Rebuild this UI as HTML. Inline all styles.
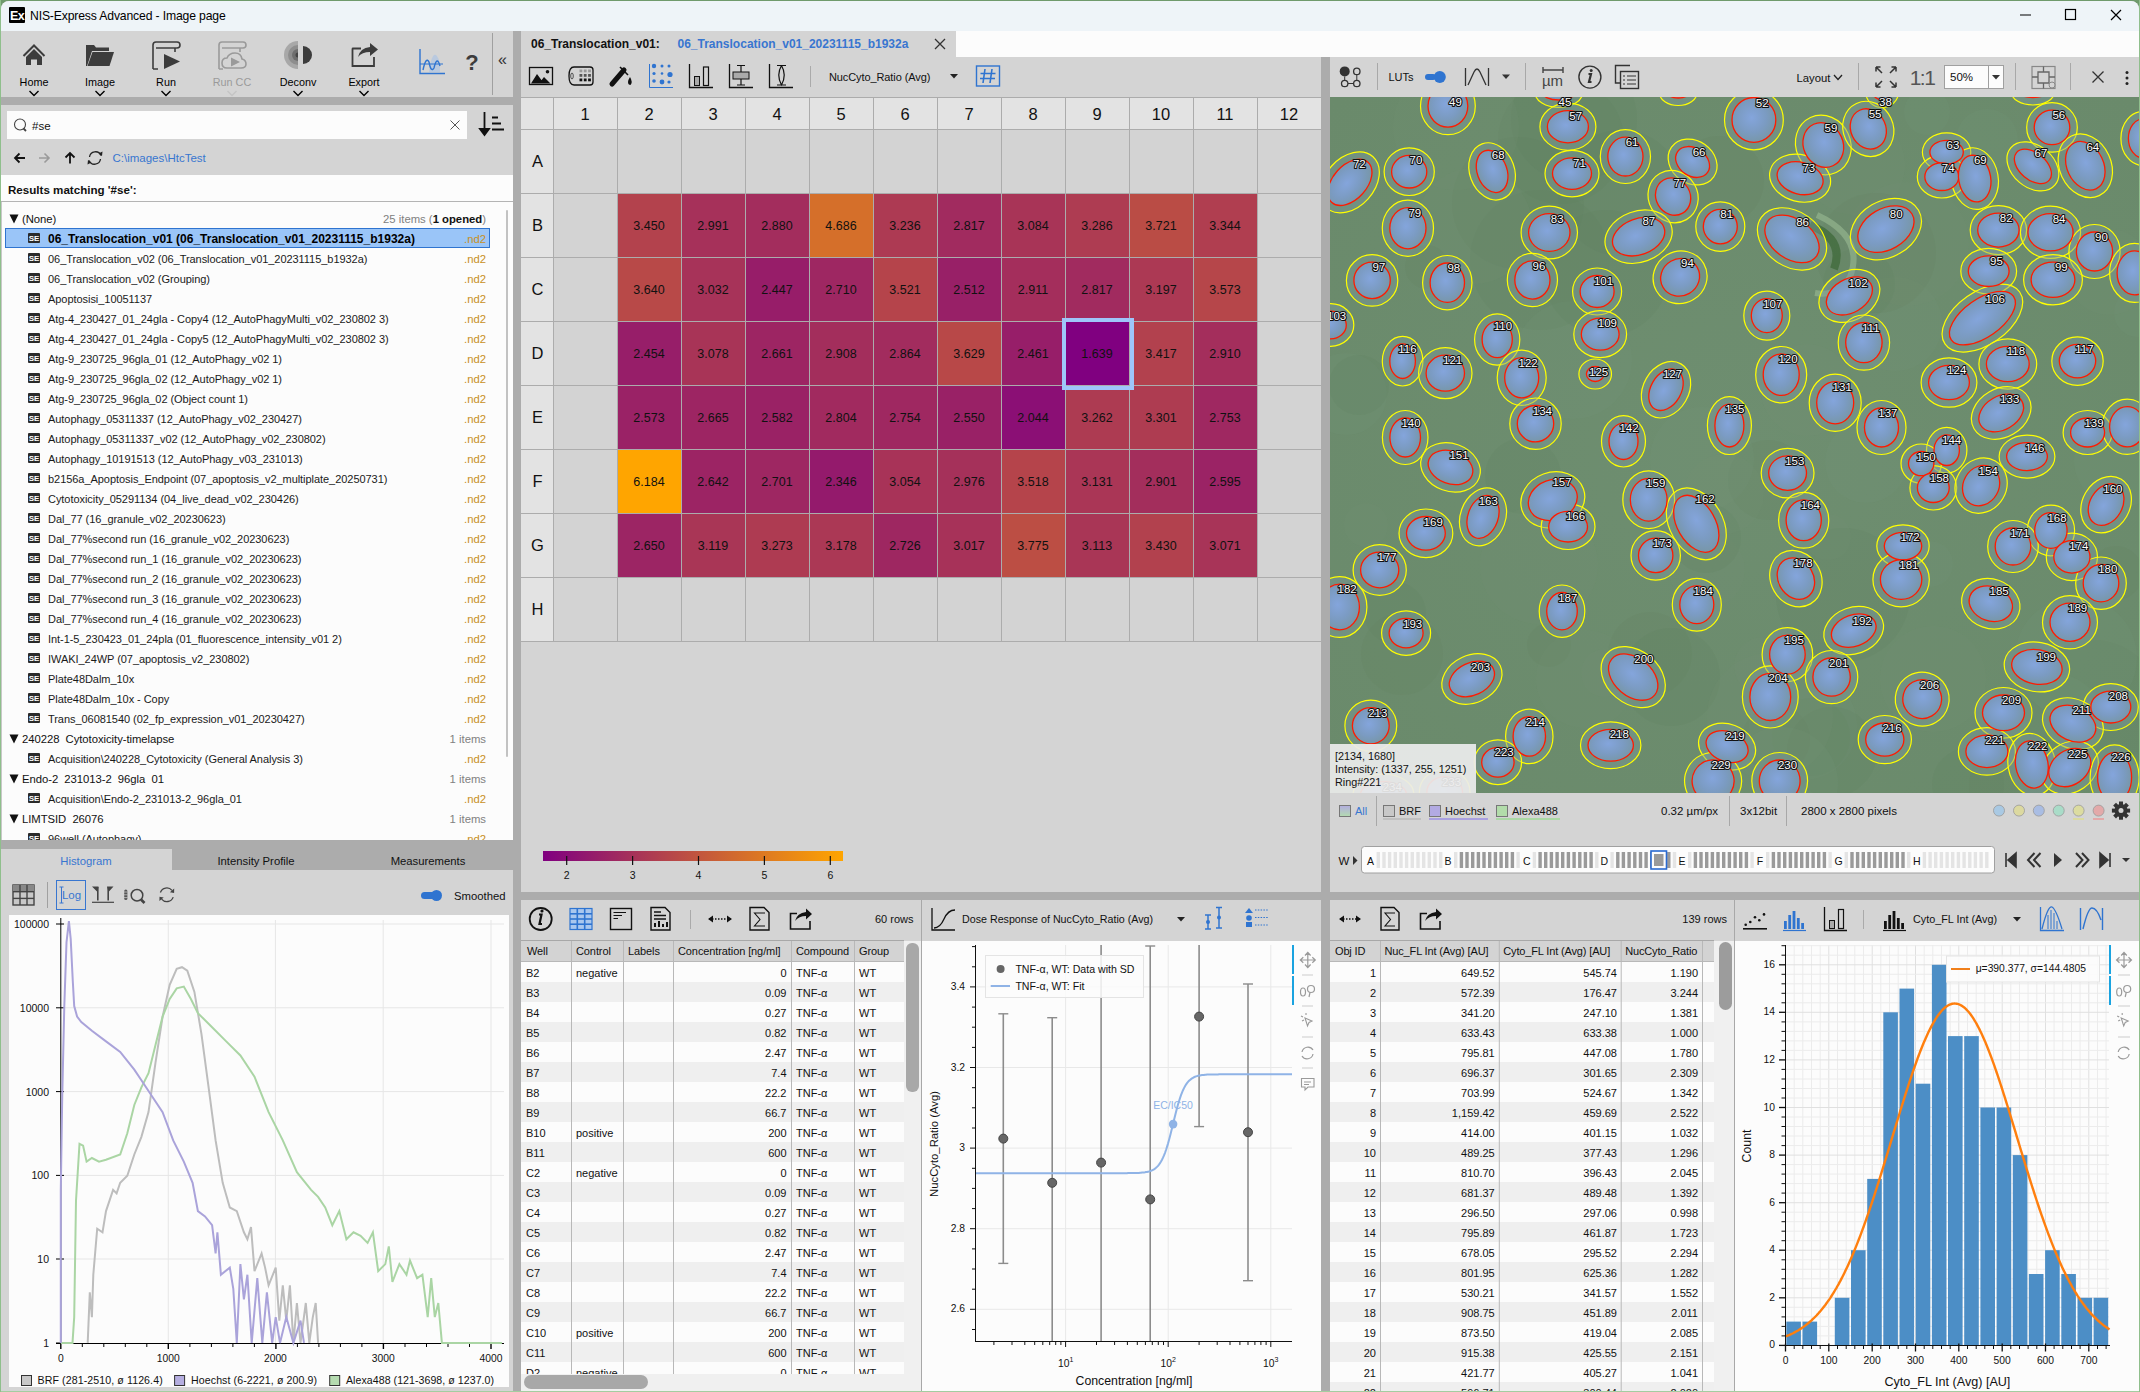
<!DOCTYPE html><html><head><meta charset="utf-8"><style>
html,body{margin:0;padding:0;width:2140px;height:1392px;overflow:hidden;background:#6f9a6c;font-family:"Liberation Sans", sans-serif;}
#root{position:absolute;left:0;top:0;width:2140px;height:1392px;overflow:hidden;}
#root div{position:absolute;box-sizing:border-box;}
#root svg{position:absolute;overflow:visible;}
</style></head><body><div id="root"><div style="left:0px;top:0px;width:2140px;height:1392px;background:#6f9a6c;"></div>
<div style="left:1px;top:1px;width:2138px;height:1390px;background:#d4d4d4;border-radius:8px 8px 8px 8px;"></div>
<div style="left:1px;top:1px;width:2138px;height:30px;background:#eef4f8;border-radius:8px 8px 0 0;"></div>
<div style="left:9px;top:7px;width:16px;height:16px;background:#000;border-radius:1px;"></div>
<div style="left:-283px;width:600px;text-align:center;top:6.5px;height:18px;line-height:18px;font-size:12.5px;color:#fff;font-weight:bold;white-space:pre;letter-spacing:-0.6px;">Ex</div>
<div style="left:30px;top:8.0px;height:17px;line-height:17px;font-size:12.2px;color:#000;font-weight:normal;white-space:pre;letter-spacing:-0.15px;">NIS-Express Advanced - Image page</div>
<svg style="left:2015px;top:5px;" width="120" height="20" viewBox="0 0 120 20"><line x1="5" y1="10" x2="16" y2="10" stroke="#000" stroke-width="1"/><rect x="50.5" y="4.5" width="10" height="10" fill="none" stroke="#000" stroke-width="1.2"/><path d="M96 5 L106 15 M106 5 L96 15" stroke="#000" stroke-width="1.2"/></svg>
<div style="left:1px;top:31px;width:512px;height:66px;background:#d4d4d4;"></div>
<div style="left:1px;top:97px;width:512px;height:8px;background:#acacac;"></div>
<div style="left:513px;top:31px;width:8px;height:1361px;background:#acacac;"></div>
<svg style="left:0px;top:0px;" width="520" height="100" viewBox="0 0 520 100"><path d="M23.5 56 L34 45.5 L44.5 56" fill="none" stroke="#3c3c3c" stroke-width="2"/><path d="M26 57 L34 49 L42 57 L42 65 L37 65 L37 59.5 L31 59.5 L31 65 L26 65 Z" fill="#3c3c3c"/><path d="M86 45 L94 45 L96 47.5 L109 47.5 L109 51 L92 51 L87 66 L86 66 Z" fill="#3c3c3c"/><path d="M92.5 52 L114 52 L109.5 66 L87.5 66 Z" fill="#3c3c3c"/><path d="M153 69 L153 45 Q153 42 156 42 L177 42 Q180 42 180 45 Q180 48 177 48 L156 48" fill="none" stroke="#3c3c3c" stroke-width="1.6"/><path d="M153 69 L158 69 M175 48 L175 52" stroke="#3c3c3c" stroke-width="1.6"/><path d="M164 54 L180 61.5 L164 69 Z" fill="#3c3c3c"/><path d="M219 69 L219 45 Q219 42 222 42 L243 42 Q246 42 246 45 Q246 48 243 48 L222 48" fill="none" stroke="#9a9a9a" stroke-width="1.6"/><path d="M219 69 L223 69 M240 48 L240 52" stroke="#9a9a9a" stroke-width="1.6"/><path d="M227 68 Q222 68 222 63 Q222 58 227 58 Q229 53 235 53 Q241 53 242 59 Q246 60 246 64 Q246 68 241 68 Z" fill="none" stroke="#9a9a9a" stroke-width="1.6"/><path d="M231 57.5 L240 62 L231 66.5 Z" fill="#9a9a9a"/><path d="M298 41 A14 14 0 0 0 298 69 Z" fill="#a8a8a8"/><path d="M298 45 A10 10 0 0 0 298 65 Z" fill="#8e8e8e"/><path d="M298 49 A6 6 0 0 0 298 61 Z" fill="#6e6e6e"/><path d="M298 52.5 A2.5 2.5 0 0 0 298 57.5 Z" fill="#444"/><path d="M303 46 A9 9 0 0 1 303 64 Z" fill="#3c3c3c"/><path d="M361 48.5 L353 48.5 Q352.5 48.5 352.5 49 L352.5 66 L374 66 L374 57" fill="none" stroke="#3c3c3c" stroke-width="1.8"/><path d="M358 57 Q360 48 370 47 L370 43 L378 49.5 L370 56 L370 52 Q362 52 358 57 Z" fill="#3c3c3c"/><path d="M429 72 Q432 50 437 56 Q440 60 440 72 Z" fill="#b9c9df"/><path d="M420 49 L420 73.5 L445 73.5" fill="none" stroke="#2f74d0" stroke-width="1.4"/><path d="M420 64 L443 64" stroke="#2f74d0" stroke-width="1"/><path d="M423 70 Q426 56 429 62 Q431 73 434 68 Q437 55 440 66" fill="none" stroke="#2f74d0" stroke-width="1.4"/><line x1="492.5" y1="33" x2="492.5" y2="95" stroke="#a0a0a0" stroke-width="1"/></svg>
<div style="left:172px;width:600px;text-align:center;top:46.5px;height:31px;line-height:31px;font-size:22px;color:#3c3c3c;font-weight:bold;white-space:pre;">?</div>
<div style="left:202.5px;width:600px;text-align:center;top:49.0px;height:22px;line-height:22px;font-size:16px;color:#333;font-weight:normal;white-space:pre;">«</div>
<div style="left:-266px;width:600px;text-align:center;top:74.5px;height:15px;line-height:15px;font-size:10.8px;color:#000;font-weight:normal;white-space:pre;">Home</div>
<div style="left:-200px;width:600px;text-align:center;top:74.5px;height:15px;line-height:15px;font-size:10.8px;color:#000;font-weight:normal;white-space:pre;">Image</div>
<div style="left:-134px;width:600px;text-align:center;top:74.5px;height:15px;line-height:15px;font-size:10.8px;color:#000;font-weight:normal;white-space:pre;">Run</div>
<div style="left:-68px;width:600px;text-align:center;top:74.5px;height:15px;line-height:15px;font-size:10.8px;color:#9a9a9a;font-weight:normal;white-space:pre;">Run CC</div>
<div style="left:-2px;width:600px;text-align:center;top:74.5px;height:15px;line-height:15px;font-size:10.8px;color:#000;font-weight:normal;white-space:pre;">Deconv</div>
<div style="left:64px;width:600px;text-align:center;top:74.5px;height:15px;line-height:15px;font-size:10.8px;color:#000;font-weight:normal;white-space:pre;">Export</div>
<svg style="left:0px;top:0px;" width="520" height="100" viewBox="0 0 520 100"><path d="M29.5 91 L34 95.5 L38.5 91" fill="none" stroke="#000" stroke-width="1.4"/><path d="M95.5 91 L100 95.5 L104.5 91" fill="none" stroke="#000" stroke-width="1.4"/><path d="M161.5 91 L166 95.5 L170.5 91" fill="none" stroke="#000" stroke-width="1.4"/><path d="M227.5 91 L232 95.5 L236.5 91" fill="none" stroke="#c4c4c4" stroke-width="1.4"/><path d="M293.5 91 L298 95.5 L302.5 91" fill="none" stroke="#000" stroke-width="1.4"/><path d="M359.5 91 L364 95.5 L368.5 91" fill="none" stroke="#000" stroke-width="1.4"/></svg>
<div style="left:1px;top:105px;width:512px;height:70px;background:#d4d4d4;"></div>
<div style="left:7px;top:111px;width:460px;height:28px;background:#fcfcfc;"></div>
<svg style="left:0px;top:100px;" width="520" height="80" viewBox="0 0 520 80"><circle cx="20" cy="24.5" r="5.5" fill="none" stroke="#444" stroke-width="1.1"/><path d="M23.5 28.5 L26 31" stroke="#444" stroke-width="1.8"/><path d="M450.5 20.5 L459.5 29.5 M459.5 20.5 L450.5 29.5" stroke="#555" stroke-width="1"/><path d="M484.5 12 L484.5 34 M480 29 L484.5 35 L489 29 Z" stroke="#111" stroke-width="1.8" fill="#111"/><path d="M492 17.5 L498 17.5 M492 23.5 L501 23.5 M492 29.5 L504 29.5" stroke="#111" stroke-width="2.2"/><path d="M15 58 L25 58 M19.5 53.5 L15 58 L19.5 62.5" fill="none" stroke="#111" stroke-width="1.8"/><path d="M39 58 L49 58 M44.5 53.5 L49 58 L44.5 62.5" fill="none" stroke="#9a9a9a" stroke-width="1.6"/><path d="M70 53 L70 63.5 M65.5 57.5 L70 53 L74.5 57.5" fill="none" stroke="#111" stroke-width="1.8"/><path d="M89.5 57 A6 6 0 0 1 101 55.5 M100.5 59 A6 6 0 0 1 89 60.5" fill="none" stroke="#222" stroke-width="1.3"/><path d="M98.5 53.5 L102 56 L102.5 51.5 Z M91.5 62.5 L88 60 L87.5 64.5 Z" fill="#222"/></svg>
<div style="left:32px;top:117.5px;height:16px;line-height:16px;font-size:11.5px;color:#111;font-weight:normal;white-space:pre;">#se</div>
<div style="left:112.5px;top:150.0px;height:16px;line-height:16px;font-size:11.5px;color:#3876d0;font-weight:normal;white-space:pre;">C:\images\HtcTest</div>
<div style="left:1px;top:175px;width:512px;height:27px;background:#fcfcfc;border-bottom:1px solid #b4b4b4;"></div>
<div style="left:8px;top:182.0px;height:16px;line-height:16px;font-size:11.6px;color:#111;font-weight:bold;white-space:pre;">Results matching '#se':</div>
<div style="left:1px;top:202px;width:512px;height:638px;background:#fcfcfc;border-left:1px solid #c8c8c8;"></div>
<div style="left:505.5px;top:210px;width:2.5px;height:547px;background:#c2c2c2;border-radius:1px;"></div>
<div style="left:22px;top:211.0px;height:16px;line-height:16px;font-size:11.3px;color:#111;font-weight:normal;white-space:pre;letter-spacing:-0.05px;">(None)</div>
<div style="left:300px;width:186px;text-align:right;top:211px;height:16px;line-height:16px;font-size:11.3px;color:#808080;white-space:nowrap;">25 items (<b style="color:#111">1 opened</b>)</div>
<div style="left:5px;top:228px;width:485px;height:20px;background:#9ac5f8;border:1px solid #2f74d0;"></div>
<div style="left:48px;top:230.5px;height:17px;line-height:17px;font-size:12px;color:#000;font-weight:bold;white-space:pre;">06_Translocation_v01 (06_Translocation_v01_20231115_b1932a)</div>
<div style="left:-114px;width:600px;text-align:right;top:231.0px;height:16px;line-height:16px;font-size:11.3px;color:#c8901e;font-weight:normal;white-space:pre;">.nd2</div>
<div style="left:48px;top:251.5px;height:15px;line-height:15px;font-size:11px;color:#1a1a1a;font-weight:normal;white-space:pre;letter-spacing:-0.05px;">06_Translocation_v02 (06_Translocation_v01_20231115_b1932a)</div>
<div style="left:-114px;width:600px;text-align:right;top:251.0px;height:16px;line-height:16px;font-size:11.3px;color:#c8901e;font-weight:normal;white-space:pre;">.nd2</div>
<div style="left:48px;top:271.5px;height:15px;line-height:15px;font-size:11px;color:#1a1a1a;font-weight:normal;white-space:pre;letter-spacing:-0.05px;">06_Translocation_v02 (Grouping)</div>
<div style="left:-114px;width:600px;text-align:right;top:271.0px;height:16px;line-height:16px;font-size:11.3px;color:#c8901e;font-weight:normal;white-space:pre;">.nd2</div>
<div style="left:48px;top:291.5px;height:15px;line-height:15px;font-size:11px;color:#1a1a1a;font-weight:normal;white-space:pre;letter-spacing:-0.05px;">Apoptosisi_10051137</div>
<div style="left:-114px;width:600px;text-align:right;top:291.0px;height:16px;line-height:16px;font-size:11.3px;color:#c8901e;font-weight:normal;white-space:pre;">.nd2</div>
<div style="left:48px;top:311.5px;height:15px;line-height:15px;font-size:11px;color:#1a1a1a;font-weight:normal;white-space:pre;letter-spacing:-0.05px;">Atg-4_230427_01_24gla - Copy4 (12_AutoPhagyMulti_v02_230802 3)</div>
<div style="left:-114px;width:600px;text-align:right;top:311.0px;height:16px;line-height:16px;font-size:11.3px;color:#c8901e;font-weight:normal;white-space:pre;">.nd2</div>
<div style="left:48px;top:331.5px;height:15px;line-height:15px;font-size:11px;color:#1a1a1a;font-weight:normal;white-space:pre;letter-spacing:-0.05px;">Atg-4_230427_01_24gla - Copy5 (12_AutoPhagyMulti_v02_230802 3)</div>
<div style="left:-114px;width:600px;text-align:right;top:331.0px;height:16px;line-height:16px;font-size:11.3px;color:#c8901e;font-weight:normal;white-space:pre;">.nd2</div>
<div style="left:48px;top:351.5px;height:15px;line-height:15px;font-size:11px;color:#1a1a1a;font-weight:normal;white-space:pre;letter-spacing:-0.05px;">Atg-9_230725_96gla_01 (12_AutoPhagy_v02 1)</div>
<div style="left:-114px;width:600px;text-align:right;top:351.0px;height:16px;line-height:16px;font-size:11.3px;color:#c8901e;font-weight:normal;white-space:pre;">.nd2</div>
<div style="left:48px;top:371.5px;height:15px;line-height:15px;font-size:11px;color:#1a1a1a;font-weight:normal;white-space:pre;letter-spacing:-0.05px;">Atg-9_230725_96gla_02 (12_AutoPhagy_v02 1)</div>
<div style="left:-114px;width:600px;text-align:right;top:371.0px;height:16px;line-height:16px;font-size:11.3px;color:#c8901e;font-weight:normal;white-space:pre;">.nd2</div>
<div style="left:48px;top:391.5px;height:15px;line-height:15px;font-size:11px;color:#1a1a1a;font-weight:normal;white-space:pre;letter-spacing:-0.05px;">Atg-9_230725_96gla_02 (Object count 1)</div>
<div style="left:-114px;width:600px;text-align:right;top:391.0px;height:16px;line-height:16px;font-size:11.3px;color:#c8901e;font-weight:normal;white-space:pre;">.nd2</div>
<div style="left:48px;top:411.5px;height:15px;line-height:15px;font-size:11px;color:#1a1a1a;font-weight:normal;white-space:pre;letter-spacing:-0.05px;">Autophagy_05311337 (12_AutoPhagy_v02_230427)</div>
<div style="left:-114px;width:600px;text-align:right;top:411.0px;height:16px;line-height:16px;font-size:11.3px;color:#c8901e;font-weight:normal;white-space:pre;">.nd2</div>
<div style="left:48px;top:431.5px;height:15px;line-height:15px;font-size:11px;color:#1a1a1a;font-weight:normal;white-space:pre;letter-spacing:-0.05px;">Autophagy_05311337_v02 (12_AutoPhagy_v02_230802)</div>
<div style="left:-114px;width:600px;text-align:right;top:431.0px;height:16px;line-height:16px;font-size:11.3px;color:#c8901e;font-weight:normal;white-space:pre;">.nd2</div>
<div style="left:48px;top:451.5px;height:15px;line-height:15px;font-size:11px;color:#1a1a1a;font-weight:normal;white-space:pre;letter-spacing:-0.05px;">Autophagy_10191513 (12_AutoPhagy_v03_231013)</div>
<div style="left:-114px;width:600px;text-align:right;top:451.0px;height:16px;line-height:16px;font-size:11.3px;color:#c8901e;font-weight:normal;white-space:pre;">.nd2</div>
<div style="left:48px;top:471.5px;height:15px;line-height:15px;font-size:11px;color:#1a1a1a;font-weight:normal;white-space:pre;letter-spacing:-0.05px;">b2156a_Apoptosis_Endpoint (07_apoptosis_v2_multiplate_20250731)</div>
<div style="left:-114px;width:600px;text-align:right;top:471.0px;height:16px;line-height:16px;font-size:11.3px;color:#c8901e;font-weight:normal;white-space:pre;">.nd2</div>
<div style="left:48px;top:491.5px;height:15px;line-height:15px;font-size:11px;color:#1a1a1a;font-weight:normal;white-space:pre;letter-spacing:-0.05px;">Cytotoxicity_05291134 (04_live_dead_v02_230426)</div>
<div style="left:-114px;width:600px;text-align:right;top:491.0px;height:16px;line-height:16px;font-size:11.3px;color:#c8901e;font-weight:normal;white-space:pre;">.nd2</div>
<div style="left:48px;top:511.5px;height:15px;line-height:15px;font-size:11px;color:#1a1a1a;font-weight:normal;white-space:pre;letter-spacing:-0.05px;">Dal_77 (16_granule_v02_20230623)</div>
<div style="left:-114px;width:600px;text-align:right;top:511.0px;height:16px;line-height:16px;font-size:11.3px;color:#c8901e;font-weight:normal;white-space:pre;">.nd2</div>
<div style="left:48px;top:531.5px;height:15px;line-height:15px;font-size:11px;color:#1a1a1a;font-weight:normal;white-space:pre;letter-spacing:-0.05px;">Dal_77%second run (16_granule_v02_20230623)</div>
<div style="left:-114px;width:600px;text-align:right;top:531.0px;height:16px;line-height:16px;font-size:11.3px;color:#c8901e;font-weight:normal;white-space:pre;">.nd2</div>
<div style="left:48px;top:551.5px;height:15px;line-height:15px;font-size:11px;color:#1a1a1a;font-weight:normal;white-space:pre;letter-spacing:-0.05px;">Dal_77%second run_1 (16_granule_v02_20230623)</div>
<div style="left:-114px;width:600px;text-align:right;top:551.0px;height:16px;line-height:16px;font-size:11.3px;color:#c8901e;font-weight:normal;white-space:pre;">.nd2</div>
<div style="left:48px;top:571.5px;height:15px;line-height:15px;font-size:11px;color:#1a1a1a;font-weight:normal;white-space:pre;letter-spacing:-0.05px;">Dal_77%second run_2 (16_granule_v02_20230623)</div>
<div style="left:-114px;width:600px;text-align:right;top:571.0px;height:16px;line-height:16px;font-size:11.3px;color:#c8901e;font-weight:normal;white-space:pre;">.nd2</div>
<div style="left:48px;top:591.5px;height:15px;line-height:15px;font-size:11px;color:#1a1a1a;font-weight:normal;white-space:pre;letter-spacing:-0.05px;">Dal_77%second run_3 (16_granule_v02_20230623)</div>
<div style="left:-114px;width:600px;text-align:right;top:591.0px;height:16px;line-height:16px;font-size:11.3px;color:#c8901e;font-weight:normal;white-space:pre;">.nd2</div>
<div style="left:48px;top:611.5px;height:15px;line-height:15px;font-size:11px;color:#1a1a1a;font-weight:normal;white-space:pre;letter-spacing:-0.05px;">Dal_77%second run_4 (16_granule_v02_20230623)</div>
<div style="left:-114px;width:600px;text-align:right;top:611.0px;height:16px;line-height:16px;font-size:11.3px;color:#c8901e;font-weight:normal;white-space:pre;">.nd2</div>
<div style="left:48px;top:631.5px;height:15px;line-height:15px;font-size:11px;color:#1a1a1a;font-weight:normal;white-space:pre;letter-spacing:-0.05px;">Int-1-5_230423_01_24pla (01_fluorescence_intensity_v01 2)</div>
<div style="left:-114px;width:600px;text-align:right;top:631.0px;height:16px;line-height:16px;font-size:11.3px;color:#c8901e;font-weight:normal;white-space:pre;">.nd2</div>
<div style="left:48px;top:651.5px;height:15px;line-height:15px;font-size:11px;color:#1a1a1a;font-weight:normal;white-space:pre;letter-spacing:-0.05px;">IWAKI_24WP (07_apoptosis_v2_230802)</div>
<div style="left:-114px;width:600px;text-align:right;top:651.0px;height:16px;line-height:16px;font-size:11.3px;color:#c8901e;font-weight:normal;white-space:pre;">.nd2</div>
<div style="left:48px;top:671.5px;height:15px;line-height:15px;font-size:11px;color:#1a1a1a;font-weight:normal;white-space:pre;letter-spacing:-0.05px;">Plate48Dalm_10x</div>
<div style="left:-114px;width:600px;text-align:right;top:671.0px;height:16px;line-height:16px;font-size:11.3px;color:#c8901e;font-weight:normal;white-space:pre;">.nd2</div>
<div style="left:48px;top:691.5px;height:15px;line-height:15px;font-size:11px;color:#1a1a1a;font-weight:normal;white-space:pre;letter-spacing:-0.05px;">Plate48Dalm_10x - Copy</div>
<div style="left:-114px;width:600px;text-align:right;top:691.0px;height:16px;line-height:16px;font-size:11.3px;color:#c8901e;font-weight:normal;white-space:pre;">.nd2</div>
<div style="left:48px;top:711.5px;height:15px;line-height:15px;font-size:11px;color:#1a1a1a;font-weight:normal;white-space:pre;letter-spacing:-0.05px;">Trans_06081540 (02_fp_expression_v01_20230427)</div>
<div style="left:-114px;width:600px;text-align:right;top:711.0px;height:16px;line-height:16px;font-size:11.3px;color:#c8901e;font-weight:normal;white-space:pre;">.nd2</div>
<div style="left:22px;top:731.0px;height:16px;line-height:16px;font-size:11.3px;color:#111;font-weight:normal;white-space:pre;letter-spacing:-0.05px;">240228  Cytotoxicity-timelapse</div>
<div style="left:-114px;width:600px;text-align:right;top:731.0px;height:16px;line-height:16px;font-size:11.3px;color:#808080;font-weight:normal;white-space:pre;">1 items</div>
<div style="left:48px;top:751.5px;height:15px;line-height:15px;font-size:11px;color:#1a1a1a;font-weight:normal;white-space:pre;letter-spacing:-0.05px;">Acquisition\240228_Cytotoxicity (General Analysis 3)</div>
<div style="left:-114px;width:600px;text-align:right;top:751.0px;height:16px;line-height:16px;font-size:11.3px;color:#c8901e;font-weight:normal;white-space:pre;">.nd2</div>
<div style="left:22px;top:771.0px;height:16px;line-height:16px;font-size:11.3px;color:#111;font-weight:normal;white-space:pre;letter-spacing:-0.05px;">Endo-2  231013-2  96gla  01</div>
<div style="left:-114px;width:600px;text-align:right;top:771.0px;height:16px;line-height:16px;font-size:11.3px;color:#808080;font-weight:normal;white-space:pre;">1 items</div>
<div style="left:48px;top:791.5px;height:15px;line-height:15px;font-size:11px;color:#1a1a1a;font-weight:normal;white-space:pre;letter-spacing:-0.05px;">Acquisition\Endo-2_231013-2_96gla_01</div>
<div style="left:-114px;width:600px;text-align:right;top:791.0px;height:16px;line-height:16px;font-size:11.3px;color:#c8901e;font-weight:normal;white-space:pre;">.nd2</div>
<div style="left:22px;top:811.0px;height:16px;line-height:16px;font-size:11.3px;color:#111;font-weight:normal;white-space:pre;letter-spacing:-0.05px;">LIMTSID  26076</div>
<div style="left:-114px;width:600px;text-align:right;top:811.0px;height:16px;line-height:16px;font-size:11.3px;color:#808080;font-weight:normal;white-space:pre;">1 items</div>
<div style="left:48px;top:831.5px;height:15px;line-height:15px;font-size:11px;color:#1a1a1a;font-weight:normal;white-space:pre;letter-spacing:-0.05px;">96well (Autophagy)</div>
<div style="left:-114px;width:600px;text-align:right;top:831.0px;height:16px;line-height:16px;font-size:11.3px;color:#c8901e;font-weight:normal;white-space:pre;">.nd2</div>
<svg style="left:0px;top:0px;" width="520" height="900" viewBox="0 0 520 900"><path d="M9.5 214.5 L18.5 214.5 L14 223.5 Z" fill="#111"/><rect x="28" y="233" width="12" height="10" rx="1" fill="#2a2a2a"/><text x="34" y="241.2" font-size="8" font-weight="bold" fill="#fff" text-anchor="middle" font-family="Liberation Sans">SE</text><rect x="28" y="253" width="12" height="10" rx="1" fill="#2a2a2a"/><text x="34" y="261.2" font-size="8" font-weight="bold" fill="#fff" text-anchor="middle" font-family="Liberation Sans">SE</text><rect x="28" y="273" width="12" height="10" rx="1" fill="#2a2a2a"/><text x="34" y="281.2" font-size="8" font-weight="bold" fill="#fff" text-anchor="middle" font-family="Liberation Sans">SE</text><rect x="28" y="293" width="12" height="10" rx="1" fill="#2a2a2a"/><text x="34" y="301.2" font-size="8" font-weight="bold" fill="#fff" text-anchor="middle" font-family="Liberation Sans">SE</text><rect x="28" y="313" width="12" height="10" rx="1" fill="#2a2a2a"/><text x="34" y="321.2" font-size="8" font-weight="bold" fill="#fff" text-anchor="middle" font-family="Liberation Sans">SE</text><rect x="28" y="333" width="12" height="10" rx="1" fill="#2a2a2a"/><text x="34" y="341.2" font-size="8" font-weight="bold" fill="#fff" text-anchor="middle" font-family="Liberation Sans">SE</text><rect x="28" y="353" width="12" height="10" rx="1" fill="#2a2a2a"/><text x="34" y="361.2" font-size="8" font-weight="bold" fill="#fff" text-anchor="middle" font-family="Liberation Sans">SE</text><rect x="28" y="373" width="12" height="10" rx="1" fill="#2a2a2a"/><text x="34" y="381.2" font-size="8" font-weight="bold" fill="#fff" text-anchor="middle" font-family="Liberation Sans">SE</text><rect x="28" y="393" width="12" height="10" rx="1" fill="#2a2a2a"/><text x="34" y="401.2" font-size="8" font-weight="bold" fill="#fff" text-anchor="middle" font-family="Liberation Sans">SE</text><rect x="28" y="413" width="12" height="10" rx="1" fill="#2a2a2a"/><text x="34" y="421.2" font-size="8" font-weight="bold" fill="#fff" text-anchor="middle" font-family="Liberation Sans">SE</text><rect x="28" y="433" width="12" height="10" rx="1" fill="#2a2a2a"/><text x="34" y="441.2" font-size="8" font-weight="bold" fill="#fff" text-anchor="middle" font-family="Liberation Sans">SE</text><rect x="28" y="453" width="12" height="10" rx="1" fill="#2a2a2a"/><text x="34" y="461.2" font-size="8" font-weight="bold" fill="#fff" text-anchor="middle" font-family="Liberation Sans">SE</text><rect x="28" y="473" width="12" height="10" rx="1" fill="#2a2a2a"/><text x="34" y="481.2" font-size="8" font-weight="bold" fill="#fff" text-anchor="middle" font-family="Liberation Sans">SE</text><rect x="28" y="493" width="12" height="10" rx="1" fill="#2a2a2a"/><text x="34" y="501.2" font-size="8" font-weight="bold" fill="#fff" text-anchor="middle" font-family="Liberation Sans">SE</text><rect x="28" y="513" width="12" height="10" rx="1" fill="#2a2a2a"/><text x="34" y="521.2" font-size="8" font-weight="bold" fill="#fff" text-anchor="middle" font-family="Liberation Sans">SE</text><rect x="28" y="533" width="12" height="10" rx="1" fill="#2a2a2a"/><text x="34" y="541.2" font-size="8" font-weight="bold" fill="#fff" text-anchor="middle" font-family="Liberation Sans">SE</text><rect x="28" y="553" width="12" height="10" rx="1" fill="#2a2a2a"/><text x="34" y="561.2" font-size="8" font-weight="bold" fill="#fff" text-anchor="middle" font-family="Liberation Sans">SE</text><rect x="28" y="573" width="12" height="10" rx="1" fill="#2a2a2a"/><text x="34" y="581.2" font-size="8" font-weight="bold" fill="#fff" text-anchor="middle" font-family="Liberation Sans">SE</text><rect x="28" y="593" width="12" height="10" rx="1" fill="#2a2a2a"/><text x="34" y="601.2" font-size="8" font-weight="bold" fill="#fff" text-anchor="middle" font-family="Liberation Sans">SE</text><rect x="28" y="613" width="12" height="10" rx="1" fill="#2a2a2a"/><text x="34" y="621.2" font-size="8" font-weight="bold" fill="#fff" text-anchor="middle" font-family="Liberation Sans">SE</text><rect x="28" y="633" width="12" height="10" rx="1" fill="#2a2a2a"/><text x="34" y="641.2" font-size="8" font-weight="bold" fill="#fff" text-anchor="middle" font-family="Liberation Sans">SE</text><rect x="28" y="653" width="12" height="10" rx="1" fill="#2a2a2a"/><text x="34" y="661.2" font-size="8" font-weight="bold" fill="#fff" text-anchor="middle" font-family="Liberation Sans">SE</text><rect x="28" y="673" width="12" height="10" rx="1" fill="#2a2a2a"/><text x="34" y="681.2" font-size="8" font-weight="bold" fill="#fff" text-anchor="middle" font-family="Liberation Sans">SE</text><rect x="28" y="693" width="12" height="10" rx="1" fill="#2a2a2a"/><text x="34" y="701.2" font-size="8" font-weight="bold" fill="#fff" text-anchor="middle" font-family="Liberation Sans">SE</text><rect x="28" y="713" width="12" height="10" rx="1" fill="#2a2a2a"/><text x="34" y="721.2" font-size="8" font-weight="bold" fill="#fff" text-anchor="middle" font-family="Liberation Sans">SE</text><path d="M9.5 734.5 L18.5 734.5 L14 743.5 Z" fill="#111"/><rect x="28" y="753" width="12" height="10" rx="1" fill="#2a2a2a"/><text x="34" y="761.2" font-size="8" font-weight="bold" fill="#fff" text-anchor="middle" font-family="Liberation Sans">SE</text><path d="M9.5 774.5 L18.5 774.5 L14 783.5 Z" fill="#111"/><rect x="28" y="793" width="12" height="10" rx="1" fill="#2a2a2a"/><text x="34" y="801.2" font-size="8" font-weight="bold" fill="#fff" text-anchor="middle" font-family="Liberation Sans">SE</text><path d="M9.5 814.5 L18.5 814.5 L14 823.5 Z" fill="#111"/><rect x="28" y="833" width="12" height="10" rx="1" fill="#2a2a2a"/><text x="34" y="841.2" font-size="8" font-weight="bold" fill="#fff" text-anchor="middle" font-family="Liberation Sans">SE</text></svg>
<div style="left:1px;top:840px;width:512px;height:8px;background:#acacac;"></div>
<div style="left:1px;top:848px;width:512px;height:22px;background:#acacac;"></div>
<div style="left:1px;top:849px;width:171px;height:21px;background:#d4d4d4;"></div>
<div style="left:-214px;width:600px;text-align:center;top:852.5px;height:16px;line-height:16px;font-size:11.3px;color:#3876d0;font-weight:normal;white-space:pre;">Histogram</div>
<div style="left:-44px;width:600px;text-align:center;top:852.5px;height:16px;line-height:16px;font-size:11.3px;color:#111;font-weight:normal;white-space:pre;">Intensity Profile</div>
<div style="left:128px;width:600px;text-align:center;top:852.5px;height:16px;line-height:16px;font-size:11.3px;color:#111;font-weight:normal;white-space:pre;">Measurements</div>
<div style="left:1px;top:870px;width:512px;height:522px;background:#d4d4d4;"></div>
<svg style="left:0px;top:0px;" width="520" height="920" viewBox="0 0 520 920"><rect x="13" y="885" width="21" height="20" fill="#c8c8c8" stroke="#444" stroke-width="1.4"/><rect x="13" y="885" width="21" height="6" fill="#888"/><line x1="13" y1="891.7" x2="34" y2="891.7" stroke="#444" stroke-width="1.4"/><line x1="13" y1="898.4" x2="34" y2="898.4" stroke="#444" stroke-width="1.4"/><line x1="20.0" y1="885" x2="20.0" y2="905" stroke="#444" stroke-width="1.4"/><line x1="27.0" y1="885" x2="27.0" y2="905" stroke="#444" stroke-width="1.4"/><line x1="47.5" y1="882" x2="47.5" y2="908" stroke="#a0a0a0"/><rect x="56.5" y="880.5" width="29" height="29" fill="none" stroke="#3876d0" stroke-width="1"/><path d="M61.5 887 L61.5 903 M59.5 887 L63.5 887 M59.5 903 L63.5 903" stroke="#3876d0" stroke-width="1"/><path d="M92 886.5 L98.5 886.5 L97.5 892 Z M107 886.5 L113.5 886.5 L108.5 892 Z" fill="#444"/><path d="M97.8 887 L97.8 900.5 M108.2 887 L108.2 900.5" stroke="#444" stroke-width="1.6"/><path d="M92 902.3 L114 902.3" stroke="#444" stroke-width="1.2"/><circle cx="137" cy="895.2" r="5.8" fill="none" stroke="#444" stroke-width="1.5"/><path d="M141 899.5 L144.5 903" stroke="#444" stroke-width="2.6"/><rect x="124.2" y="889.5" width="3.2" height="10.5" rx="1.6" fill="#555"/><path d="M124 892 L127.6 892 M124 894.8 L127.6 894.8 M124 897.6 L127.6 897.6" stroke="#d4d4d4" stroke-width="0.7"/><path d="M160.4 892.5 A6.8 6.8 0 0 1 172.0 890.4 M173.2 897.1 A6.8 6.8 0 0 1 161.6 899.2" fill="none" stroke="#444" stroke-width="1.3"/><path d="M174.1 892.9 L169.9 892.2 L174.2 888.6 Z M159.5 896.7 L163.7 897.4 L159.4 901.0 Z" fill="#444"/><rect x="421" y="892" width="14" height="7" rx="3.5" fill="#2f74d0"/><circle cx="436.5" cy="895.5" r="5.5" fill="#2f74d0"/></svg>
<div style="left:-228.5px;width:600px;text-align:center;top:887.0px;height:16px;line-height:16px;font-size:11.5px;color:#3876d0;font-weight:normal;white-space:pre;">Log</div>
<div style="left:454px;top:887.5px;height:16px;line-height:16px;font-size:11.3px;color:#111;font-weight:normal;white-space:pre;">Smoothed</div>
<div style="left:9px;top:915px;width:500px;height:472px;background:#fcfcfc;"></div>
<svg style="left:0px;top:0px;" width="520" height="1392" viewBox="0 0 520 1392"><line x1="168.3" y1="920" x2="168.3" y2="1343" stroke="#e6e6e6" stroke-width="1"/><line x1="275.4" y1="920" x2="275.4" y2="1343" stroke="#e6e6e6" stroke-width="1"/><line x1="383.2" y1="920" x2="383.2" y2="1343" stroke="#e6e6e6" stroke-width="1"/><line x1="491" y1="920" x2="491" y2="1343" stroke="#e6e6e6" stroke-width="1"/><line x1="61" y1="924" x2="504" y2="924" stroke="#e6e6e6" stroke-width="1"/><line x1="61" y1="1007.8" x2="504" y2="1007.8" stroke="#e6e6e6" stroke-width="1"/><line x1="61" y1="1091.6" x2="504" y2="1091.6" stroke="#e6e6e6" stroke-width="1"/><line x1="61" y1="1175.4" x2="504" y2="1175.4" stroke="#e6e6e6" stroke-width="1"/><line x1="61" y1="1259" x2="504" y2="1259" stroke="#e6e6e6" stroke-width="1"/><line x1="60.8" y1="918" x2="60.8" y2="1344" stroke="#000" stroke-width="1"/><line x1="56" y1="1343.5" x2="504" y2="1343.5" stroke="#000" stroke-width="1"/><line x1="56" y1="924" x2="64" y2="924" stroke="#000"/><line x1="56" y1="1007.8" x2="64" y2="1007.8" stroke="#000"/><line x1="56" y1="1091.6" x2="64" y2="1091.6" stroke="#000"/><line x1="56" y1="1175.4" x2="64" y2="1175.4" stroke="#000"/><line x1="56" y1="1259" x2="64" y2="1259" stroke="#000"/><line x1="56" y1="1343" x2="64" y2="1343" stroke="#000"/><line x1="60.8" y1="1343.5" x2="60.8" y2="1349" stroke="#000" stroke-width="1.4"/><line x1="82.3" y1="1343.5" x2="82.3" y2="1347" stroke="#000" stroke-width="1"/><line x1="103.8" y1="1343.5" x2="103.8" y2="1347" stroke="#000" stroke-width="1"/><line x1="125.3" y1="1343.5" x2="125.3" y2="1347" stroke="#000" stroke-width="1"/><line x1="146.8" y1="1343.5" x2="146.8" y2="1347" stroke="#000" stroke-width="1"/><line x1="168.3" y1="1343.5" x2="168.3" y2="1349" stroke="#000" stroke-width="1.4"/><line x1="189.9" y1="1343.5" x2="189.9" y2="1347" stroke="#000" stroke-width="1"/><line x1="211.4" y1="1343.5" x2="211.4" y2="1347" stroke="#000" stroke-width="1"/><line x1="232.9" y1="1343.5" x2="232.9" y2="1347" stroke="#000" stroke-width="1"/><line x1="254.4" y1="1343.5" x2="254.4" y2="1347" stroke="#000" stroke-width="1"/><line x1="275.9" y1="1343.5" x2="275.9" y2="1349" stroke="#000" stroke-width="1.4"/><line x1="297.4" y1="1343.5" x2="297.4" y2="1347" stroke="#000" stroke-width="1"/><line x1="318.9" y1="1343.5" x2="318.9" y2="1347" stroke="#000" stroke-width="1"/><line x1="340.4" y1="1343.5" x2="340.4" y2="1347" stroke="#000" stroke-width="1"/><line x1="361.9" y1="1343.5" x2="361.9" y2="1347" stroke="#000" stroke-width="1"/><line x1="383.4" y1="1343.5" x2="383.4" y2="1349" stroke="#000" stroke-width="1.4"/><line x1="405.0" y1="1343.5" x2="405.0" y2="1347" stroke="#000" stroke-width="1"/><line x1="426.5" y1="1343.5" x2="426.5" y2="1347" stroke="#000" stroke-width="1"/><line x1="448.0" y1="1343.5" x2="448.0" y2="1347" stroke="#000" stroke-width="1"/><line x1="469.5" y1="1343.5" x2="469.5" y2="1347" stroke="#000" stroke-width="1"/><line x1="491.0" y1="1343.5" x2="491.0" y2="1349" stroke="#000" stroke-width="1.4"/><polyline points="87.7,1342.9 89.8,1292.4 91.9,1317.1 93.3,1274.7 97.2,1228.7 102.5,1232.3 106.0,1211.1 113.1,1189.9 116.6,1193.4 120.2,1182.8 127.3,1175.7 134.3,1154.5 141.4,1136.8 148.5,1112.1 155.5,1062.6 162.6,1016.6 169.7,984.8 176.7,968.9 182.0,967.2 187.3,970.7 194.4,991.9 201.5,1034.3 208.6,1087.3 215.6,1140.4 222.7,1182.8 229.8,1207.5 236.8,1211.1 243.9,1232.3 247.4,1239.3 251.0,1227.0 254.5,1271.2 261.6,1253.5 265.1,1267.6 268.6,1285.3 275.7,1267.6 279.3,1320.6 282.8,1285.3 286.3,1320.6 289.9,1285.3 293.4,1342.9 296.9,1303.0 300.5,1342.9 305.8,1303.0 309.3,1342.9 312.8,1317.1 315.7,1303.0 318.1,1342.9" fill="none" stroke="#bdbdbd" stroke-width="2"/><polyline points="60.8,1342.9 72.5,1342.9 74.2,1317.1 76.0,1200.5 79.5,1143.9 83.1,1145.7 86.6,1161.6 91.9,1158.0 99.0,1161.6 106.0,1159.8 120.2,1154.5 127.3,1133.3 134.3,1105.0 141.4,1087.3 148.5,1073.2 155.5,1044.9 162.6,1016.6 169.7,999.0 176.7,988.4 183.8,986.6 190.9,999.0 197.9,1013.1 212.1,1027.3 226.2,1041.4 240.4,1055.5 254.5,1076.7 268.6,1112.1 282.8,1140.4 296.9,1172.2 311.1,1189.9 318.1,1196.9 325.2,1207.5 332.3,1225.2 339.3,1211.1 346.4,1239.3 353.5,1232.3 360.6,1235.8 367.6,1242.9 372.9,1232.3 378.2,1271.2 385.3,1264.1 388.8,1246.4 392.4,1281.8 399.4,1264.1 406.5,1274.7 410.0,1260.6 417.1,1278.2 422.4,1274.7 427.7,1317.1 431.2,1278.2 434.8,1317.1 438.3,1303.0 441.9,1342.9 501.9,1342.9" fill="none" stroke="#aad5a4" stroke-width="2"/><polyline points="60.8,1342.9 60.8,1189.9 62.2,1097.9 64.3,1006.0 66.5,942.4 68.9,921.2 70.7,938.9 72.8,981.3 74.2,1006.0 77.1,1016.6 81.3,1022.0 91.9,1030.8 106.0,1041.4 120.2,1052.0 134.3,1069.7 141.4,1080.3 152.0,1096.2 162.6,1112.1 173.2,1140.4 183.8,1161.6 192.6,1182.8 197.9,1211.1 205.0,1216.4 212.1,1225.2 215.6,1253.5 217.4,1232.3 220.9,1274.7 229.8,1267.6 233.3,1288.8 236.8,1342.9 240.4,1264.1 243.9,1299.4 247.4,1274.7 251.7,1342.9 257.3,1278.2 262.3,1342.9 266.9,1292.4 272.2,1342.9 275.7,1317.1 280.0,1342.9 286.3,1317.1 293.4,1342.9 300.5,1320.6 304.0,1342.9" fill="none" stroke="#aaa3da" stroke-width="2"/><rect x="21.5" y="1375.5" width="10" height="10" fill="#c8c8c8" stroke="#333" stroke-width="1"/><rect x="174.6" y="1375.5" width="10" height="10" fill="#b5aee0" stroke="#333" stroke-width="1"/><rect x="329.7" y="1375.5" width="10" height="10" fill="#b5dbb0" stroke="#333" stroke-width="1"/></svg>
<div style="left:-551px;width:600px;text-align:right;top:917.0px;height:15px;line-height:15px;font-size:10.5px;color:#111;font-weight:normal;white-space:pre;">100000</div>
<div style="left:-551px;width:600px;text-align:right;top:1000.8px;height:15px;line-height:15px;font-size:10.5px;color:#111;font-weight:normal;white-space:pre;">10000</div>
<div style="left:-551px;width:600px;text-align:right;top:1084.6px;height:15px;line-height:15px;font-size:10.5px;color:#111;font-weight:normal;white-space:pre;">1000</div>
<div style="left:-551px;width:600px;text-align:right;top:1168.4px;height:15px;line-height:15px;font-size:10.5px;color:#111;font-weight:normal;white-space:pre;">100</div>
<div style="left:-551px;width:600px;text-align:right;top:1252.0px;height:15px;line-height:15px;font-size:10.5px;color:#111;font-weight:normal;white-space:pre;">10</div>
<div style="left:-551px;width:600px;text-align:right;top:1336.0px;height:15px;line-height:15px;font-size:10.5px;color:#111;font-weight:normal;white-space:pre;">1</div>
<div style="left:-239.2px;width:600px;text-align:center;top:1351.5px;height:14px;line-height:14px;font-size:10.3px;color:#111;font-weight:normal;white-space:pre;">0</div>
<div style="left:-131.7px;width:600px;text-align:center;top:1351.5px;height:14px;line-height:14px;font-size:10.3px;color:#111;font-weight:normal;white-space:pre;">1000</div>
<div style="left:-24.600000000000023px;width:600px;text-align:center;top:1351.5px;height:14px;line-height:14px;font-size:10.3px;color:#111;font-weight:normal;white-space:pre;">2000</div>
<div style="left:83.19999999999999px;width:600px;text-align:center;top:1351.5px;height:14px;line-height:14px;font-size:10.3px;color:#111;font-weight:normal;white-space:pre;">3000</div>
<div style="left:191px;width:600px;text-align:center;top:1351.5px;height:14px;line-height:14px;font-size:10.3px;color:#111;font-weight:normal;white-space:pre;">4000</div>
<div style="left:37.5px;top:1373.2px;height:15px;line-height:15px;font-size:10.6px;color:#111;font-weight:normal;white-space:pre;letter-spacing:0.1px;">BRF (281-2510, ø 1126.4)</div>
<div style="left:191px;top:1373.2px;height:15px;line-height:15px;font-size:10.6px;color:#111;font-weight:normal;white-space:pre;letter-spacing:0.1px;">Hoechst (6-2221, ø 200.9)</div>
<div style="left:346px;top:1373.2px;height:15px;line-height:15px;font-size:10.6px;color:#111;font-weight:normal;white-space:pre;letter-spacing:0.05px;">Alexa488 (121-3698, ø 1237.0)</div>
<div style="left:521px;top:31px;width:800px;height:861px;background:#d4d4d4;"></div>
<div style="left:956px;top:31px;width:1183px;height:26px;background:#fcfcfc;"></div>
<div style="left:531px;top:36.0px;height:17px;line-height:17px;font-size:12px;color:#111;font-weight:bold;white-space:pre;">06_Translocation_v01:</div>
<div style="left:677.5px;top:36.0px;height:17px;line-height:17px;font-size:12px;color:#3876d0;font-weight:bold;white-space:pre;">06_Translocation_v01_20231115_b1932a</div>
<svg style="left:0px;top:0px;" width="1330" height="100" viewBox="0 0 1330 100"><path d="M935 39 L945 49 M945 39 L935 49" stroke="#333" stroke-width="1.3"/><rect x="529.5" y="67.5" width="23" height="17" fill="none" stroke="#111" stroke-width="1.3"/><path d="M531 83.5 L537 74 L544 83.5 Z M539 83.5 L544 77 L550.5 83.5 Z" fill="#111"/><circle cx="547.5" cy="71.8" r="1.8" fill="#111"/><path d="M574 67 L590 67 Q593 67 593 70 L593 82 Q593 85 590 85 L574 85 Q569 85 569 76 Q569 67 574 67 Z" fill="none" stroke="#111" stroke-width="1.3"/><rect x="579.5" y="69.5" width="2.8" height="2.8" fill="#999"/><rect x="579.5" y="74.0" width="2.8" height="2.8" fill="#555"/><rect x="579.5" y="78.5" width="2.8" height="2.8" fill="#111"/><rect x="583.8" y="69.5" width="2.8" height="2.8" fill="#999"/><rect x="583.8" y="74.0" width="2.8" height="2.8" fill="#555"/><rect x="583.8" y="78.5" width="2.8" height="2.8" fill="#111"/><rect x="588.1" y="69.5" width="2.8" height="2.8" fill="#999"/><rect x="588.1" y="74.0" width="2.8" height="2.8" fill="#555"/><rect x="588.1" y="78.5" width="2.8" height="2.8" fill="#111"/><ellipse cx="572" cy="76" rx="1.3" ry="3" fill="none" stroke="#333" stroke-width="0.8"/><path d="M612 84 L624 70" stroke="#111" stroke-width="5" stroke-linecap="round"/><path d="M620 67 L628 75" stroke="#111" stroke-width="1.6"/><path d="M630 77 Q633 82 630.5 85 Q628 85 628 82 Q628 80 630 77 Z" fill="#111"/><circle cx="654" cy="66" r="2.2" fill="#2f74d0"/><circle cx="662" cy="66" r="1.5" fill="#2f74d0"/><circle cx="669" cy="66" r="1.5" fill="#2f74d0"/><circle cx="654" cy="73.5" r="1.6" fill="#2f74d0"/><circle cx="662" cy="73.5" r="1.3" fill="#2f74d0"/><circle cx="670" cy="74.5" r="2.6" fill="#2f74d0"/><circle cx="654" cy="81" r="1.8" fill="#2f74d0"/><circle cx="662" cy="82" r="2.4" fill="#2f74d0"/><circle cx="669" cy="82" r="1.6" fill="#2f74d0"/><path d="M649.5 64 L649.5 87.5 L673 87.5" fill="none" stroke="#2f74d0" stroke-width="1"/><path d="M689.5 64 L689.5 87.5 L713 87.5" fill="none" stroke="#111" stroke-width="1.3"/><rect x="694.5" y="76.5" width="5" height="9" fill="#aaa" stroke="#111" stroke-width="1"/><rect x="703.5" y="67" width="5" height="18.5" fill="none" stroke="#111" stroke-width="1.2"/><path d="M729.5 64 L729.5 87.5 L753 87.5" fill="none" stroke="#111" stroke-width="1.3"/><path d="M737 65.5 L745 65.5 M741 65.5 L741 85 M737 85 L745 85" stroke="#111" stroke-width="1.2"/><rect x="733" y="72" width="16" height="7" fill="#aaa" stroke="#111" stroke-width="1"/><path d="M769.5 64 L769.5 87.5 L793 87.5" fill="none" stroke="#111" stroke-width="1.3"/><path d="M777 65.5 L786 65.5 M777 85 L786 85 M781.5 65.5 Q776 75 781.5 85 Q787 75 781.5 65.5" fill="none" stroke="#111" stroke-width="1.2"/><line x1="810.5" y1="66" x2="810.5" y2="87" stroke="#aaa"/><path d="M950 74 L958 74 L954 78.5 Z" fill="#222"/><rect x="976.5" y="66" width="23" height="20" fill="none" stroke="#2f74d0" stroke-width="1.4"/><path d="M985 69 L983 83 M992 69 L990 83 M980.5 73.5 L995.5 73.5 M980 78.5 L995 78.5" stroke="#2f74d0" stroke-width="1.6"/></svg>
<div style="left:829px;top:69.5px;height:15px;line-height:15px;font-size:11px;color:#111;font-weight:normal;white-space:pre;letter-spacing:-0.1px;">NucCyto_Ratio (Avg)</div>
<div style="left:521px;top:97px;width:800px;height:32px;background:#e3e3e3;"></div>
<div style="left:521px;top:129px;width:32px;height:512px;background:#e3e3e3;"></div>
<div style="left:553px;top:129px;width:768px;height:512px;background:#d3d3d3;"></div>
<div style="left:617px;top:193px;width:64px;height:64px;background:rgb(179,66,77);"></div>
<div style="left:681px;top:193px;width:64px;height:64px;background:rgb(166,49,90);"></div>
<div style="left:745px;top:193px;width:64px;height:64px;background:rgb(163,45,93);"></div>
<div style="left:809px;top:193px;width:64px;height:64px;background:rgb(213,111,42);"></div>
<div style="left:873px;top:193px;width:64px;height:64px;background:rgb(173,58,83);"></div>
<div style="left:937px;top:193px;width:64px;height:64px;background:rgb(161,43,95);"></div>
<div style="left:1001px;top:193px;width:64px;height:64px;background:rgb(168,52,87);"></div>
<div style="left:1065px;top:193px;width:64px;height:64px;background:rgb(174,60,82);"></div>
<div style="left:1129px;top:193px;width:64px;height:64px;background:rgb(186,76,69);"></div>
<div style="left:1193px;top:193px;width:64px;height:64px;background:rgb(176,62,80);"></div>
<div style="left:617px;top:257px;width:64px;height:64px;background:rgb(184,73,72);"></div>
<div style="left:681px;top:257px;width:64px;height:64px;background:rgb(167,51,89);"></div>
<div style="left:745px;top:257px;width:64px;height:64px;background:rgb(151,29,105);"></div>
<div style="left:809px;top:257px;width:64px;height:64px;background:rgb(158,39,98);"></div>
<div style="left:873px;top:257px;width:64px;height:64px;background:rgb(181,68,75);"></div>
<div style="left:937px;top:257px;width:64px;height:64px;background:rgb(152,32,103);"></div>
<div style="left:1001px;top:257px;width:64px;height:64px;background:rgb(164,46,92);"></div>
<div style="left:1065px;top:257px;width:64px;height:64px;background:rgb(161,43,95);"></div>
<div style="left:1129px;top:257px;width:64px;height:64px;background:rgb(172,57,84);"></div>
<div style="left:1193px;top:257px;width:64px;height:64px;background:rgb(182,70,74);"></div>
<div style="left:617px;top:321px;width:64px;height:64px;background:rgb(151,30,105);"></div>
<div style="left:681px;top:321px;width:64px;height:64px;background:rgb(168,52,87);"></div>
<div style="left:745px;top:321px;width:64px;height:64px;background:rgb(157,37,99);"></div>
<div style="left:809px;top:321px;width:64px;height:64px;background:rgb(163,46,92);"></div>
<div style="left:873px;top:321px;width:64px;height:64px;background:rgb(162,44,94);"></div>
<div style="left:937px;top:321px;width:64px;height:64px;background:rgb(184,72,72);"></div>
<div style="left:1001px;top:321px;width:64px;height:64px;background:rgb(151,30,105);"></div>
<div style="left:1065px;top:321px;width:64px;height:64px;background:rgb(128,0,128);"></div>
<div style="left:1129px;top:321px;width:64px;height:64px;background:rgb(178,65,78);"></div>
<div style="left:1193px;top:321px;width:64px;height:64px;background:rgb(164,46,92);"></div>
<div style="left:617px;top:385px;width:64px;height:64px;background:rgb(154,34,102);"></div>
<div style="left:681px;top:385px;width:64px;height:64px;background:rgb(157,37,99);"></div>
<div style="left:745px;top:385px;width:64px;height:64px;background:rgb(154,34,101);"></div>
<div style="left:809px;top:385px;width:64px;height:64px;background:rgb(161,42,95);"></div>
<div style="left:873px;top:385px;width:64px;height:64px;background:rgb(159,40,97);"></div>
<div style="left:937px;top:385px;width:64px;height:64px;background:rgb(153,33,102);"></div>
<div style="left:1001px;top:385px;width:64px;height:64px;background:rgb(139,15,117);"></div>
<div style="left:1065px;top:385px;width:64px;height:64px;background:rgb(173,59,82);"></div>
<div style="left:1129px;top:385px;width:64px;height:64px;background:rgb(174,60,81);"></div>
<div style="left:1193px;top:385px;width:64px;height:64px;background:rgb(159,40,97);"></div>
<div style="left:617px;top:449px;width:64px;height:64px;background:rgb(255,165,0);"></div>
<div style="left:681px;top:449px;width:64px;height:64px;background:rgb(156,36,100);"></div>
<div style="left:745px;top:449px;width:64px;height:64px;background:rgb(158,39,98);"></div>
<div style="left:809px;top:449px;width:64px;height:64px;background:rgb(148,26,108);"></div>
<div style="left:873px;top:449px;width:64px;height:64px;background:rgb(168,51,88);"></div>
<div style="left:937px;top:449px;width:64px;height:64px;background:rgb(165,49,90);"></div>
<div style="left:1001px;top:449px;width:64px;height:64px;background:rgb(181,68,75);"></div>
<div style="left:1065px;top:449px;width:64px;height:64px;background:rgb(170,54,86);"></div>
<div style="left:1129px;top:449px;width:64px;height:64px;background:rgb(163,46,92);"></div>
<div style="left:1193px;top:449px;width:64px;height:64px;background:rgb(155,35,101);"></div>
<div style="left:617px;top:513px;width:64px;height:64px;background:rgb(156,37,100);"></div>
<div style="left:681px;top:513px;width:64px;height:64px;background:rgb(169,54,86);"></div>
<div style="left:745px;top:513px;width:64px;height:64px;background:rgb(174,59,82);"></div>
<div style="left:809px;top:513px;width:64px;height:64px;background:rgb(171,56,85);"></div>
<div style="left:873px;top:513px;width:64px;height:64px;background:rgb(158,39,97);"></div>
<div style="left:937px;top:513px;width:64px;height:64px;background:rgb(167,50,89);"></div>
<div style="left:1001px;top:513px;width:64px;height:64px;background:rgb(188,78,68);"></div>
<div style="left:1065px;top:513px;width:64px;height:64px;background:rgb(169,54,86);"></div>
<div style="left:1129px;top:513px;width:64px;height:64px;background:rgb(178,65,78);"></div>
<div style="left:1193px;top:513px;width:64px;height:64px;background:rgb(168,52,88);"></div>
<svg style="left:0px;top:0px;" width="1330" height="700" viewBox="0 0 1330 700"><line x1="553.5" y1="97" x2="553.5" y2="641" stroke="#acacac" stroke-width="1"/><line x1="617.5" y1="97" x2="617.5" y2="641" stroke="#acacac" stroke-width="1"/><line x1="681.5" y1="97" x2="681.5" y2="641" stroke="#acacac" stroke-width="1"/><line x1="745.5" y1="97" x2="745.5" y2="641" stroke="#acacac" stroke-width="1"/><line x1="809.5" y1="97" x2="809.5" y2="641" stroke="#acacac" stroke-width="1"/><line x1="873.5" y1="97" x2="873.5" y2="641" stroke="#acacac" stroke-width="1"/><line x1="937.5" y1="97" x2="937.5" y2="641" stroke="#acacac" stroke-width="1"/><line x1="1001.5" y1="97" x2="1001.5" y2="641" stroke="#acacac" stroke-width="1"/><line x1="1065.5" y1="97" x2="1065.5" y2="641" stroke="#acacac" stroke-width="1"/><line x1="1129.5" y1="97" x2="1129.5" y2="641" stroke="#acacac" stroke-width="1"/><line x1="1193.5" y1="97" x2="1193.5" y2="641" stroke="#acacac" stroke-width="1"/><line x1="1257.5" y1="97" x2="1257.5" y2="641" stroke="#acacac" stroke-width="1"/><line x1="1321.5" y1="97" x2="1321.5" y2="641" stroke="#acacac" stroke-width="1"/><line x1="521" y1="97.5" x2="1321" y2="97.5" stroke="#acacac" stroke-width="1"/><line x1="521" y1="129.5" x2="1321" y2="129.5" stroke="#acacac" stroke-width="1"/><line x1="521" y1="193.5" x2="1321" y2="193.5" stroke="#acacac" stroke-width="1"/><line x1="521" y1="257.5" x2="1321" y2="257.5" stroke="#acacac" stroke-width="1"/><line x1="521" y1="321.5" x2="1321" y2="321.5" stroke="#acacac" stroke-width="1"/><line x1="521" y1="385.5" x2="1321" y2="385.5" stroke="#acacac" stroke-width="1"/><line x1="521" y1="449.5" x2="1321" y2="449.5" stroke="#acacac" stroke-width="1"/><line x1="521" y1="513.5" x2="1321" y2="513.5" stroke="#acacac" stroke-width="1"/><line x1="521" y1="577.5" x2="1321" y2="577.5" stroke="#acacac" stroke-width="1"/><line x1="521" y1="641.5" x2="1321" y2="641.5" stroke="#acacac" stroke-width="1"/></svg>
<div style="left:285px;width:600px;text-align:center;top:102.5px;height:23px;line-height:23px;font-size:16.5px;color:#111;font-weight:normal;white-space:pre;">1</div>
<div style="left:349px;width:600px;text-align:center;top:102.5px;height:23px;line-height:23px;font-size:16.5px;color:#111;font-weight:normal;white-space:pre;">2</div>
<div style="left:413px;width:600px;text-align:center;top:102.5px;height:23px;line-height:23px;font-size:16.5px;color:#111;font-weight:normal;white-space:pre;">3</div>
<div style="left:477px;width:600px;text-align:center;top:102.5px;height:23px;line-height:23px;font-size:16.5px;color:#111;font-weight:normal;white-space:pre;">4</div>
<div style="left:541px;width:600px;text-align:center;top:102.5px;height:23px;line-height:23px;font-size:16.5px;color:#111;font-weight:normal;white-space:pre;">5</div>
<div style="left:605px;width:600px;text-align:center;top:102.5px;height:23px;line-height:23px;font-size:16.5px;color:#111;font-weight:normal;white-space:pre;">6</div>
<div style="left:669px;width:600px;text-align:center;top:102.5px;height:23px;line-height:23px;font-size:16.5px;color:#111;font-weight:normal;white-space:pre;">7</div>
<div style="left:733px;width:600px;text-align:center;top:102.5px;height:23px;line-height:23px;font-size:16.5px;color:#111;font-weight:normal;white-space:pre;">8</div>
<div style="left:797px;width:600px;text-align:center;top:102.5px;height:23px;line-height:23px;font-size:16.5px;color:#111;font-weight:normal;white-space:pre;">9</div>
<div style="left:861px;width:600px;text-align:center;top:102.5px;height:23px;line-height:23px;font-size:16.5px;color:#111;font-weight:normal;white-space:pre;">10</div>
<div style="left:925px;width:600px;text-align:center;top:102.5px;height:23px;line-height:23px;font-size:16.5px;color:#111;font-weight:normal;white-space:pre;">11</div>
<div style="left:989px;width:600px;text-align:center;top:102.5px;height:23px;line-height:23px;font-size:16.5px;color:#111;font-weight:normal;white-space:pre;">12</div>
<div style="left:237.5px;width:600px;text-align:center;top:150.0px;height:23px;line-height:23px;font-size:16.5px;color:#111;font-weight:normal;white-space:pre;">A</div>
<div style="left:237.5px;width:600px;text-align:center;top:214.0px;height:23px;line-height:23px;font-size:16.5px;color:#111;font-weight:normal;white-space:pre;">B</div>
<div style="left:237.5px;width:600px;text-align:center;top:278.0px;height:23px;line-height:23px;font-size:16.5px;color:#111;font-weight:normal;white-space:pre;">C</div>
<div style="left:237.5px;width:600px;text-align:center;top:342.0px;height:23px;line-height:23px;font-size:16.5px;color:#111;font-weight:normal;white-space:pre;">D</div>
<div style="left:237.5px;width:600px;text-align:center;top:406.0px;height:23px;line-height:23px;font-size:16.5px;color:#111;font-weight:normal;white-space:pre;">E</div>
<div style="left:237.5px;width:600px;text-align:center;top:470.0px;height:23px;line-height:23px;font-size:16.5px;color:#111;font-weight:normal;white-space:pre;">F</div>
<div style="left:237.5px;width:600px;text-align:center;top:534.0px;height:23px;line-height:23px;font-size:16.5px;color:#111;font-weight:normal;white-space:pre;">G</div>
<div style="left:237.5px;width:600px;text-align:center;top:598.0px;height:23px;line-height:23px;font-size:16.5px;color:#111;font-weight:normal;white-space:pre;">H</div>
<div style="left:349px;width:600px;text-align:center;top:217.0px;height:18px;line-height:18px;font-size:12.5px;color:#111;font-weight:normal;white-space:pre;">3.450</div>
<div style="left:413px;width:600px;text-align:center;top:217.0px;height:18px;line-height:18px;font-size:12.5px;color:#111;font-weight:normal;white-space:pre;">2.991</div>
<div style="left:477px;width:600px;text-align:center;top:217.0px;height:18px;line-height:18px;font-size:12.5px;color:#111;font-weight:normal;white-space:pre;">2.880</div>
<div style="left:541px;width:600px;text-align:center;top:217.0px;height:18px;line-height:18px;font-size:12.5px;color:#111;font-weight:normal;white-space:pre;">4.686</div>
<div style="left:605px;width:600px;text-align:center;top:217.0px;height:18px;line-height:18px;font-size:12.5px;color:#111;font-weight:normal;white-space:pre;">3.236</div>
<div style="left:669px;width:600px;text-align:center;top:217.0px;height:18px;line-height:18px;font-size:12.5px;color:#111;font-weight:normal;white-space:pre;">2.817</div>
<div style="left:733px;width:600px;text-align:center;top:217.0px;height:18px;line-height:18px;font-size:12.5px;color:#111;font-weight:normal;white-space:pre;">3.084</div>
<div style="left:797px;width:600px;text-align:center;top:217.0px;height:18px;line-height:18px;font-size:12.5px;color:#111;font-weight:normal;white-space:pre;">3.286</div>
<div style="left:861px;width:600px;text-align:center;top:217.0px;height:18px;line-height:18px;font-size:12.5px;color:#111;font-weight:normal;white-space:pre;">3.721</div>
<div style="left:925px;width:600px;text-align:center;top:217.0px;height:18px;line-height:18px;font-size:12.5px;color:#111;font-weight:normal;white-space:pre;">3.344</div>
<div style="left:349px;width:600px;text-align:center;top:281.0px;height:18px;line-height:18px;font-size:12.5px;color:#111;font-weight:normal;white-space:pre;">3.640</div>
<div style="left:413px;width:600px;text-align:center;top:281.0px;height:18px;line-height:18px;font-size:12.5px;color:#111;font-weight:normal;white-space:pre;">3.032</div>
<div style="left:477px;width:600px;text-align:center;top:281.0px;height:18px;line-height:18px;font-size:12.5px;color:#111;font-weight:normal;white-space:pre;">2.447</div>
<div style="left:541px;width:600px;text-align:center;top:281.0px;height:18px;line-height:18px;font-size:12.5px;color:#111;font-weight:normal;white-space:pre;">2.710</div>
<div style="left:605px;width:600px;text-align:center;top:281.0px;height:18px;line-height:18px;font-size:12.5px;color:#111;font-weight:normal;white-space:pre;">3.521</div>
<div style="left:669px;width:600px;text-align:center;top:281.0px;height:18px;line-height:18px;font-size:12.5px;color:#111;font-weight:normal;white-space:pre;">2.512</div>
<div style="left:733px;width:600px;text-align:center;top:281.0px;height:18px;line-height:18px;font-size:12.5px;color:#111;font-weight:normal;white-space:pre;">2.911</div>
<div style="left:797px;width:600px;text-align:center;top:281.0px;height:18px;line-height:18px;font-size:12.5px;color:#111;font-weight:normal;white-space:pre;">2.817</div>
<div style="left:861px;width:600px;text-align:center;top:281.0px;height:18px;line-height:18px;font-size:12.5px;color:#111;font-weight:normal;white-space:pre;">3.197</div>
<div style="left:925px;width:600px;text-align:center;top:281.0px;height:18px;line-height:18px;font-size:12.5px;color:#111;font-weight:normal;white-space:pre;">3.573</div>
<div style="left:349px;width:600px;text-align:center;top:345.0px;height:18px;line-height:18px;font-size:12.5px;color:#111;font-weight:normal;white-space:pre;">2.454</div>
<div style="left:413px;width:600px;text-align:center;top:345.0px;height:18px;line-height:18px;font-size:12.5px;color:#111;font-weight:normal;white-space:pre;">3.078</div>
<div style="left:477px;width:600px;text-align:center;top:345.0px;height:18px;line-height:18px;font-size:12.5px;color:#111;font-weight:normal;white-space:pre;">2.661</div>
<div style="left:541px;width:600px;text-align:center;top:345.0px;height:18px;line-height:18px;font-size:12.5px;color:#111;font-weight:normal;white-space:pre;">2.908</div>
<div style="left:605px;width:600px;text-align:center;top:345.0px;height:18px;line-height:18px;font-size:12.5px;color:#111;font-weight:normal;white-space:pre;">2.864</div>
<div style="left:669px;width:600px;text-align:center;top:345.0px;height:18px;line-height:18px;font-size:12.5px;color:#111;font-weight:normal;white-space:pre;">3.629</div>
<div style="left:733px;width:600px;text-align:center;top:345.0px;height:18px;line-height:18px;font-size:12.5px;color:#111;font-weight:normal;white-space:pre;">2.461</div>
<div style="left:797px;width:600px;text-align:center;top:345.0px;height:18px;line-height:18px;font-size:12.5px;color:#111;font-weight:normal;white-space:pre;">1.639</div>
<div style="left:861px;width:600px;text-align:center;top:345.0px;height:18px;line-height:18px;font-size:12.5px;color:#111;font-weight:normal;white-space:pre;">3.417</div>
<div style="left:925px;width:600px;text-align:center;top:345.0px;height:18px;line-height:18px;font-size:12.5px;color:#111;font-weight:normal;white-space:pre;">2.910</div>
<div style="left:349px;width:600px;text-align:center;top:409.0px;height:18px;line-height:18px;font-size:12.5px;color:#111;font-weight:normal;white-space:pre;">2.573</div>
<div style="left:413px;width:600px;text-align:center;top:409.0px;height:18px;line-height:18px;font-size:12.5px;color:#111;font-weight:normal;white-space:pre;">2.665</div>
<div style="left:477px;width:600px;text-align:center;top:409.0px;height:18px;line-height:18px;font-size:12.5px;color:#111;font-weight:normal;white-space:pre;">2.582</div>
<div style="left:541px;width:600px;text-align:center;top:409.0px;height:18px;line-height:18px;font-size:12.5px;color:#111;font-weight:normal;white-space:pre;">2.804</div>
<div style="left:605px;width:600px;text-align:center;top:409.0px;height:18px;line-height:18px;font-size:12.5px;color:#111;font-weight:normal;white-space:pre;">2.754</div>
<div style="left:669px;width:600px;text-align:center;top:409.0px;height:18px;line-height:18px;font-size:12.5px;color:#111;font-weight:normal;white-space:pre;">2.550</div>
<div style="left:733px;width:600px;text-align:center;top:409.0px;height:18px;line-height:18px;font-size:12.5px;color:#111;font-weight:normal;white-space:pre;">2.044</div>
<div style="left:797px;width:600px;text-align:center;top:409.0px;height:18px;line-height:18px;font-size:12.5px;color:#111;font-weight:normal;white-space:pre;">3.262</div>
<div style="left:861px;width:600px;text-align:center;top:409.0px;height:18px;line-height:18px;font-size:12.5px;color:#111;font-weight:normal;white-space:pre;">3.301</div>
<div style="left:925px;width:600px;text-align:center;top:409.0px;height:18px;line-height:18px;font-size:12.5px;color:#111;font-weight:normal;white-space:pre;">2.753</div>
<div style="left:349px;width:600px;text-align:center;top:473.0px;height:18px;line-height:18px;font-size:12.5px;color:#111;font-weight:normal;white-space:pre;">6.184</div>
<div style="left:413px;width:600px;text-align:center;top:473.0px;height:18px;line-height:18px;font-size:12.5px;color:#111;font-weight:normal;white-space:pre;">2.642</div>
<div style="left:477px;width:600px;text-align:center;top:473.0px;height:18px;line-height:18px;font-size:12.5px;color:#111;font-weight:normal;white-space:pre;">2.701</div>
<div style="left:541px;width:600px;text-align:center;top:473.0px;height:18px;line-height:18px;font-size:12.5px;color:#111;font-weight:normal;white-space:pre;">2.346</div>
<div style="left:605px;width:600px;text-align:center;top:473.0px;height:18px;line-height:18px;font-size:12.5px;color:#111;font-weight:normal;white-space:pre;">3.054</div>
<div style="left:669px;width:600px;text-align:center;top:473.0px;height:18px;line-height:18px;font-size:12.5px;color:#111;font-weight:normal;white-space:pre;">2.976</div>
<div style="left:733px;width:600px;text-align:center;top:473.0px;height:18px;line-height:18px;font-size:12.5px;color:#111;font-weight:normal;white-space:pre;">3.518</div>
<div style="left:797px;width:600px;text-align:center;top:473.0px;height:18px;line-height:18px;font-size:12.5px;color:#111;font-weight:normal;white-space:pre;">3.131</div>
<div style="left:861px;width:600px;text-align:center;top:473.0px;height:18px;line-height:18px;font-size:12.5px;color:#111;font-weight:normal;white-space:pre;">2.901</div>
<div style="left:925px;width:600px;text-align:center;top:473.0px;height:18px;line-height:18px;font-size:12.5px;color:#111;font-weight:normal;white-space:pre;">2.595</div>
<div style="left:349px;width:600px;text-align:center;top:537.0px;height:18px;line-height:18px;font-size:12.5px;color:#111;font-weight:normal;white-space:pre;">2.650</div>
<div style="left:413px;width:600px;text-align:center;top:537.0px;height:18px;line-height:18px;font-size:12.5px;color:#111;font-weight:normal;white-space:pre;">3.119</div>
<div style="left:477px;width:600px;text-align:center;top:537.0px;height:18px;line-height:18px;font-size:12.5px;color:#111;font-weight:normal;white-space:pre;">3.273</div>
<div style="left:541px;width:600px;text-align:center;top:537.0px;height:18px;line-height:18px;font-size:12.5px;color:#111;font-weight:normal;white-space:pre;">3.178</div>
<div style="left:605px;width:600px;text-align:center;top:537.0px;height:18px;line-height:18px;font-size:12.5px;color:#111;font-weight:normal;white-space:pre;">2.726</div>
<div style="left:669px;width:600px;text-align:center;top:537.0px;height:18px;line-height:18px;font-size:12.5px;color:#111;font-weight:normal;white-space:pre;">3.017</div>
<div style="left:733px;width:600px;text-align:center;top:537.0px;height:18px;line-height:18px;font-size:12.5px;color:#111;font-weight:normal;white-space:pre;">3.775</div>
<div style="left:797px;width:600px;text-align:center;top:537.0px;height:18px;line-height:18px;font-size:12.5px;color:#111;font-weight:normal;white-space:pre;">3.113</div>
<div style="left:861px;width:600px;text-align:center;top:537.0px;height:18px;line-height:18px;font-size:12.5px;color:#111;font-weight:normal;white-space:pre;">3.430</div>
<div style="left:925px;width:600px;text-align:center;top:537.0px;height:18px;line-height:18px;font-size:12.5px;color:#111;font-weight:normal;white-space:pre;">3.071</div>
<div style="left:1062px;top:318px;width:72px;height:72px;border:4px solid #9ec5fa;"></div>
<svg style="left:0px;top:0px;" width="1330" height="900" viewBox="0 0 1330 900"><defs><linearGradient id="cbg" x1="0" x2="1" y1="0" y2="0"><stop offset="0" stop-color="rgb(128,0,128)"/><stop offset="1" stop-color="rgb(255,165,0)"/></linearGradient></defs><rect x="543" y="851" width="300" height="10" fill="url(#cbg)"/><line x1="566.7" y1="856" x2="566.7" y2="865" stroke="#111" stroke-width="1.2"/><line x1="632.6" y1="856" x2="632.6" y2="865" stroke="#111" stroke-width="1.2"/><line x1="698.5" y1="856" x2="698.5" y2="865" stroke="#111" stroke-width="1.2"/><line x1="764.4" y1="856" x2="764.4" y2="865" stroke="#111" stroke-width="1.2"/><line x1="830.3" y1="856" x2="830.3" y2="865" stroke="#111" stroke-width="1.2"/></svg>
<div style="left:266.70000000000005px;width:600px;text-align:center;top:867.5px;height:15px;line-height:15px;font-size:10.5px;color:#111;font-weight:normal;white-space:pre;">2</div>
<div style="left:332.6px;width:600px;text-align:center;top:867.5px;height:15px;line-height:15px;font-size:10.5px;color:#111;font-weight:normal;white-space:pre;">3</div>
<div style="left:398.5px;width:600px;text-align:center;top:867.5px;height:15px;line-height:15px;font-size:10.5px;color:#111;font-weight:normal;white-space:pre;">4</div>
<div style="left:464.4000000000001px;width:600px;text-align:center;top:867.5px;height:15px;line-height:15px;font-size:10.5px;color:#111;font-weight:normal;white-space:pre;">5</div>
<div style="left:530.3000000000001px;width:600px;text-align:center;top:867.5px;height:15px;line-height:15px;font-size:10.5px;color:#111;font-weight:normal;white-space:pre;">6</div>
<div style="left:521px;top:892px;width:800px;height:8px;background:#acacac;"></div>
<div style="left:1321px;top:57px;width:9px;height:1335px;background:#acacac;"></div>
<div style="left:521px;top:900px;width:400px;height:41px;background:#d4d4d4;"></div>
<div style="left:921px;top:900px;width:3px;height:492px;background:#d4d4d4;"></div>
<div style="left:921px;top:900px;width:1px;height:492px;background:#a8a8a8;"></div>
<svg style="left:0px;top:0px;" width="1330" height="1000" viewBox="0 0 1330 1000"><circle cx="540.7" cy="919" r="11" fill="none" stroke="#111" stroke-width="1.8"/><path d="M539 914.5 L541.5 914.5 L539.5 924 L542 924" stroke="#111" stroke-width="2.2" fill="none"/><circle cx="542" cy="911" r="1.6" fill="#111"/><rect x="570" y="908.5" width="22" height="21" fill="#a9c7ee" stroke="#2f74d0" stroke-width="1.2"/><line x1="570" y1="913.8" x2="592" y2="913.8" stroke="#2f74d0" stroke-width="1.6"/><line x1="570" y1="919.0" x2="592" y2="919.0" stroke="#2f74d0" stroke-width="1.6"/><line x1="570" y1="924.2" x2="592" y2="924.2" stroke="#2f74d0" stroke-width="1.6"/><line x1="577.3" y1="908.5" x2="577.3" y2="929.5" stroke="#2f74d0" stroke-width="1.6"/><line x1="584.7" y1="908.5" x2="584.7" y2="929.5" stroke="#2f74d0" stroke-width="1.6"/><rect x="610.5" y="908.5" width="21" height="21" fill="none" stroke="#111" stroke-width="1.4"/><path d="M613.5 912.5 L626 912.5 M613.5 915.5 L622 915.5 M613.5 918.5 L618 918.5" stroke="#111" stroke-width="1.2"/><path d="M651 907.5 L665 907.5 L670 912.5 L670 930 L651 930 Z" fill="none" stroke="#111" stroke-width="1.4"/><path d="M654 912 L661 912 M654 915.5 L666 915.5 M654 919 L666 919" stroke="#111" stroke-width="1.4"/><path d="M655 927 L655 923 M659 927 L659 921 M663 927 L663 924 M667 927 L667 922" stroke="#111" stroke-width="2"/><line x1="690.5" y1="910" x2="690.5" y2="929" stroke="#aaa"/><path d="M709 919 L731 919" stroke="#111" stroke-width="1.3" stroke-dasharray="1.5,1.5"/><path d="M708 919 L713 915.5 L713 922.5 Z M732 919 L727 915.5 L727 922.5 Z" fill="#111"/><path d="M750 907.5 L764 907.5 L769 912.5 L769 930 L750 930 Z" fill="none" stroke="#111" stroke-width="1.4"/><path d="M765 913 L754.5 913 L760 919.5 L754.5 926 L765 926" fill="none" stroke="#111" stroke-width="1.1"/><path d="M797 913.5 L790.5 913.5 L790.5 929 L810 929 L810 921" fill="none" stroke="#111" stroke-width="1.6"/><path d="M795 921 Q797 913 806 912 L806 908.5 L812 914 L806 919.5 L806 916 Q799 916 795 921 Z" fill="#111"/></svg>
<div style="left:313.5px;width:600px;text-align:right;top:912.0px;height:15px;line-height:15px;font-size:11px;color:#111;font-weight:normal;white-space:pre;">60 rows</div>
<div style="left:521px;top:940px;width:383px;height:22px;background:#d3d3d3;border-top:1px solid #a8a8a8;border-bottom:1px solid #b8b8b8;"></div>
<div style="left:521px;top:962px;width:383px;height:412px;background:#fcfcfc;"></div>
<div style="left:521px;top:982px;width:383px;height:20px;background:#efefef;"></div>
<div style="left:521px;top:1022px;width:383px;height:20px;background:#efefef;"></div>
<div style="left:521px;top:1062px;width:383px;height:20px;background:#efefef;"></div>
<div style="left:521px;top:1102px;width:383px;height:20px;background:#efefef;"></div>
<div style="left:521px;top:1142px;width:383px;height:20px;background:#efefef;"></div>
<div style="left:521px;top:1182px;width:383px;height:20px;background:#efefef;"></div>
<div style="left:521px;top:1222px;width:383px;height:20px;background:#efefef;"></div>
<div style="left:521px;top:1262px;width:383px;height:20px;background:#efefef;"></div>
<div style="left:521px;top:1302px;width:383px;height:20px;background:#efefef;"></div>
<div style="left:521px;top:1342px;width:383px;height:20px;background:#efefef;"></div>
<svg style="left:0px;top:0px;" width="1330" height="1392" viewBox="0 0 1330 1392"><line x1="571.5" y1="941" x2="571.5" y2="1374" stroke="#b8b8b8" stroke-width="1"/><line x1="623.5" y1="941" x2="623.5" y2="1374" stroke="#b8b8b8" stroke-width="1"/><line x1="673.5" y1="941" x2="673.5" y2="1374" stroke="#b8b8b8" stroke-width="1"/><line x1="791.5" y1="941" x2="791.5" y2="1374" stroke="#b8b8b8" stroke-width="1"/><line x1="854.5" y1="941" x2="854.5" y2="1374" stroke="#b8b8b8" stroke-width="1"/><line x1="904.5" y1="941" x2="904.5" y2="1374" stroke="#b8b8b8" stroke-width="1"/></svg>
<div style="left:527px;top:944.0px;height:15px;line-height:15px;font-size:11px;color:#111;font-weight:normal;white-space:pre;letter-spacing:-0.1px;">Well</div>
<div style="left:576px;top:944.0px;height:15px;line-height:15px;font-size:11px;color:#111;font-weight:normal;white-space:pre;letter-spacing:-0.1px;">Control</div>
<div style="left:628px;top:944.0px;height:15px;line-height:15px;font-size:11px;color:#111;font-weight:normal;white-space:pre;letter-spacing:-0.1px;">Labels</div>
<div style="left:678px;top:944.0px;height:15px;line-height:15px;font-size:11px;color:#111;font-weight:normal;white-space:pre;letter-spacing:-0.1px;">Concentration [ng/ml]</div>
<div style="left:796px;top:944.0px;height:15px;line-height:15px;font-size:11px;color:#111;font-weight:normal;white-space:pre;letter-spacing:-0.1px;">Compound</div>
<div style="left:859px;top:944.0px;height:15px;line-height:15px;font-size:11px;color:#111;font-weight:normal;white-space:pre;letter-spacing:-0.1px;">Group</div>
<div style="left:526px;top:965.5px;height:15px;line-height:15px;font-size:11px;color:#111;font-weight:normal;white-space:pre;">B2</div>
<div style="left:576px;top:965.5px;height:15px;line-height:15px;font-size:11px;color:#111;font-weight:normal;white-space:pre;">negative</div>
<div style="left:186.5px;width:600px;text-align:right;top:965.5px;height:15px;line-height:15px;font-size:11px;color:#111;font-weight:normal;white-space:pre;">0</div>
<div style="left:796px;top:965.5px;height:15px;line-height:15px;font-size:11px;color:#111;font-weight:normal;white-space:pre;">TNF-α</div>
<div style="left:859px;top:965.5px;height:15px;line-height:15px;font-size:11px;color:#111;font-weight:normal;white-space:pre;">WT</div>
<div style="left:526px;top:985.5px;height:15px;line-height:15px;font-size:11px;color:#111;font-weight:normal;white-space:pre;">B3</div>
<div style="left:186.5px;width:600px;text-align:right;top:985.5px;height:15px;line-height:15px;font-size:11px;color:#111;font-weight:normal;white-space:pre;">0.09</div>
<div style="left:796px;top:985.5px;height:15px;line-height:15px;font-size:11px;color:#111;font-weight:normal;white-space:pre;">TNF-α</div>
<div style="left:859px;top:985.5px;height:15px;line-height:15px;font-size:11px;color:#111;font-weight:normal;white-space:pre;">WT</div>
<div style="left:526px;top:1005.5px;height:15px;line-height:15px;font-size:11px;color:#111;font-weight:normal;white-space:pre;">B4</div>
<div style="left:186.5px;width:600px;text-align:right;top:1005.5px;height:15px;line-height:15px;font-size:11px;color:#111;font-weight:normal;white-space:pre;">0.27</div>
<div style="left:796px;top:1005.5px;height:15px;line-height:15px;font-size:11px;color:#111;font-weight:normal;white-space:pre;">TNF-α</div>
<div style="left:859px;top:1005.5px;height:15px;line-height:15px;font-size:11px;color:#111;font-weight:normal;white-space:pre;">WT</div>
<div style="left:526px;top:1025.5px;height:15px;line-height:15px;font-size:11px;color:#111;font-weight:normal;white-space:pre;">B5</div>
<div style="left:186.5px;width:600px;text-align:right;top:1025.5px;height:15px;line-height:15px;font-size:11px;color:#111;font-weight:normal;white-space:pre;">0.82</div>
<div style="left:796px;top:1025.5px;height:15px;line-height:15px;font-size:11px;color:#111;font-weight:normal;white-space:pre;">TNF-α</div>
<div style="left:859px;top:1025.5px;height:15px;line-height:15px;font-size:11px;color:#111;font-weight:normal;white-space:pre;">WT</div>
<div style="left:526px;top:1045.5px;height:15px;line-height:15px;font-size:11px;color:#111;font-weight:normal;white-space:pre;">B6</div>
<div style="left:186.5px;width:600px;text-align:right;top:1045.5px;height:15px;line-height:15px;font-size:11px;color:#111;font-weight:normal;white-space:pre;">2.47</div>
<div style="left:796px;top:1045.5px;height:15px;line-height:15px;font-size:11px;color:#111;font-weight:normal;white-space:pre;">TNF-α</div>
<div style="left:859px;top:1045.5px;height:15px;line-height:15px;font-size:11px;color:#111;font-weight:normal;white-space:pre;">WT</div>
<div style="left:526px;top:1065.5px;height:15px;line-height:15px;font-size:11px;color:#111;font-weight:normal;white-space:pre;">B7</div>
<div style="left:186.5px;width:600px;text-align:right;top:1065.5px;height:15px;line-height:15px;font-size:11px;color:#111;font-weight:normal;white-space:pre;">7.4</div>
<div style="left:796px;top:1065.5px;height:15px;line-height:15px;font-size:11px;color:#111;font-weight:normal;white-space:pre;">TNF-α</div>
<div style="left:859px;top:1065.5px;height:15px;line-height:15px;font-size:11px;color:#111;font-weight:normal;white-space:pre;">WT</div>
<div style="left:526px;top:1085.5px;height:15px;line-height:15px;font-size:11px;color:#111;font-weight:normal;white-space:pre;">B8</div>
<div style="left:186.5px;width:600px;text-align:right;top:1085.5px;height:15px;line-height:15px;font-size:11px;color:#111;font-weight:normal;white-space:pre;">22.2</div>
<div style="left:796px;top:1085.5px;height:15px;line-height:15px;font-size:11px;color:#111;font-weight:normal;white-space:pre;">TNF-α</div>
<div style="left:859px;top:1085.5px;height:15px;line-height:15px;font-size:11px;color:#111;font-weight:normal;white-space:pre;">WT</div>
<div style="left:526px;top:1105.5px;height:15px;line-height:15px;font-size:11px;color:#111;font-weight:normal;white-space:pre;">B9</div>
<div style="left:186.5px;width:600px;text-align:right;top:1105.5px;height:15px;line-height:15px;font-size:11px;color:#111;font-weight:normal;white-space:pre;">66.7</div>
<div style="left:796px;top:1105.5px;height:15px;line-height:15px;font-size:11px;color:#111;font-weight:normal;white-space:pre;">TNF-α</div>
<div style="left:859px;top:1105.5px;height:15px;line-height:15px;font-size:11px;color:#111;font-weight:normal;white-space:pre;">WT</div>
<div style="left:526px;top:1125.5px;height:15px;line-height:15px;font-size:11px;color:#111;font-weight:normal;white-space:pre;">B10</div>
<div style="left:576px;top:1125.5px;height:15px;line-height:15px;font-size:11px;color:#111;font-weight:normal;white-space:pre;">positive</div>
<div style="left:186.5px;width:600px;text-align:right;top:1125.5px;height:15px;line-height:15px;font-size:11px;color:#111;font-weight:normal;white-space:pre;">200</div>
<div style="left:796px;top:1125.5px;height:15px;line-height:15px;font-size:11px;color:#111;font-weight:normal;white-space:pre;">TNF-α</div>
<div style="left:859px;top:1125.5px;height:15px;line-height:15px;font-size:11px;color:#111;font-weight:normal;white-space:pre;">WT</div>
<div style="left:526px;top:1145.5px;height:15px;line-height:15px;font-size:11px;color:#111;font-weight:normal;white-space:pre;">B11</div>
<div style="left:186.5px;width:600px;text-align:right;top:1145.5px;height:15px;line-height:15px;font-size:11px;color:#111;font-weight:normal;white-space:pre;">600</div>
<div style="left:796px;top:1145.5px;height:15px;line-height:15px;font-size:11px;color:#111;font-weight:normal;white-space:pre;">TNF-α</div>
<div style="left:859px;top:1145.5px;height:15px;line-height:15px;font-size:11px;color:#111;font-weight:normal;white-space:pre;">WT</div>
<div style="left:526px;top:1165.5px;height:15px;line-height:15px;font-size:11px;color:#111;font-weight:normal;white-space:pre;">C2</div>
<div style="left:576px;top:1165.5px;height:15px;line-height:15px;font-size:11px;color:#111;font-weight:normal;white-space:pre;">negative</div>
<div style="left:186.5px;width:600px;text-align:right;top:1165.5px;height:15px;line-height:15px;font-size:11px;color:#111;font-weight:normal;white-space:pre;">0</div>
<div style="left:796px;top:1165.5px;height:15px;line-height:15px;font-size:11px;color:#111;font-weight:normal;white-space:pre;">TNF-α</div>
<div style="left:859px;top:1165.5px;height:15px;line-height:15px;font-size:11px;color:#111;font-weight:normal;white-space:pre;">WT</div>
<div style="left:526px;top:1185.5px;height:15px;line-height:15px;font-size:11px;color:#111;font-weight:normal;white-space:pre;">C3</div>
<div style="left:186.5px;width:600px;text-align:right;top:1185.5px;height:15px;line-height:15px;font-size:11px;color:#111;font-weight:normal;white-space:pre;">0.09</div>
<div style="left:796px;top:1185.5px;height:15px;line-height:15px;font-size:11px;color:#111;font-weight:normal;white-space:pre;">TNF-α</div>
<div style="left:859px;top:1185.5px;height:15px;line-height:15px;font-size:11px;color:#111;font-weight:normal;white-space:pre;">WT</div>
<div style="left:526px;top:1205.5px;height:15px;line-height:15px;font-size:11px;color:#111;font-weight:normal;white-space:pre;">C4</div>
<div style="left:186.5px;width:600px;text-align:right;top:1205.5px;height:15px;line-height:15px;font-size:11px;color:#111;font-weight:normal;white-space:pre;">0.27</div>
<div style="left:796px;top:1205.5px;height:15px;line-height:15px;font-size:11px;color:#111;font-weight:normal;white-space:pre;">TNF-α</div>
<div style="left:859px;top:1205.5px;height:15px;line-height:15px;font-size:11px;color:#111;font-weight:normal;white-space:pre;">WT</div>
<div style="left:526px;top:1225.5px;height:15px;line-height:15px;font-size:11px;color:#111;font-weight:normal;white-space:pre;">C5</div>
<div style="left:186.5px;width:600px;text-align:right;top:1225.5px;height:15px;line-height:15px;font-size:11px;color:#111;font-weight:normal;white-space:pre;">0.82</div>
<div style="left:796px;top:1225.5px;height:15px;line-height:15px;font-size:11px;color:#111;font-weight:normal;white-space:pre;">TNF-α</div>
<div style="left:859px;top:1225.5px;height:15px;line-height:15px;font-size:11px;color:#111;font-weight:normal;white-space:pre;">WT</div>
<div style="left:526px;top:1245.5px;height:15px;line-height:15px;font-size:11px;color:#111;font-weight:normal;white-space:pre;">C6</div>
<div style="left:186.5px;width:600px;text-align:right;top:1245.5px;height:15px;line-height:15px;font-size:11px;color:#111;font-weight:normal;white-space:pre;">2.47</div>
<div style="left:796px;top:1245.5px;height:15px;line-height:15px;font-size:11px;color:#111;font-weight:normal;white-space:pre;">TNF-α</div>
<div style="left:859px;top:1245.5px;height:15px;line-height:15px;font-size:11px;color:#111;font-weight:normal;white-space:pre;">WT</div>
<div style="left:526px;top:1265.5px;height:15px;line-height:15px;font-size:11px;color:#111;font-weight:normal;white-space:pre;">C7</div>
<div style="left:186.5px;width:600px;text-align:right;top:1265.5px;height:15px;line-height:15px;font-size:11px;color:#111;font-weight:normal;white-space:pre;">7.4</div>
<div style="left:796px;top:1265.5px;height:15px;line-height:15px;font-size:11px;color:#111;font-weight:normal;white-space:pre;">TNF-α</div>
<div style="left:859px;top:1265.5px;height:15px;line-height:15px;font-size:11px;color:#111;font-weight:normal;white-space:pre;">WT</div>
<div style="left:526px;top:1285.5px;height:15px;line-height:15px;font-size:11px;color:#111;font-weight:normal;white-space:pre;">C8</div>
<div style="left:186.5px;width:600px;text-align:right;top:1285.5px;height:15px;line-height:15px;font-size:11px;color:#111;font-weight:normal;white-space:pre;">22.2</div>
<div style="left:796px;top:1285.5px;height:15px;line-height:15px;font-size:11px;color:#111;font-weight:normal;white-space:pre;">TNF-α</div>
<div style="left:859px;top:1285.5px;height:15px;line-height:15px;font-size:11px;color:#111;font-weight:normal;white-space:pre;">WT</div>
<div style="left:526px;top:1305.5px;height:15px;line-height:15px;font-size:11px;color:#111;font-weight:normal;white-space:pre;">C9</div>
<div style="left:186.5px;width:600px;text-align:right;top:1305.5px;height:15px;line-height:15px;font-size:11px;color:#111;font-weight:normal;white-space:pre;">66.7</div>
<div style="left:796px;top:1305.5px;height:15px;line-height:15px;font-size:11px;color:#111;font-weight:normal;white-space:pre;">TNF-α</div>
<div style="left:859px;top:1305.5px;height:15px;line-height:15px;font-size:11px;color:#111;font-weight:normal;white-space:pre;">WT</div>
<div style="left:526px;top:1325.5px;height:15px;line-height:15px;font-size:11px;color:#111;font-weight:normal;white-space:pre;">C10</div>
<div style="left:576px;top:1325.5px;height:15px;line-height:15px;font-size:11px;color:#111;font-weight:normal;white-space:pre;">positive</div>
<div style="left:186.5px;width:600px;text-align:right;top:1325.5px;height:15px;line-height:15px;font-size:11px;color:#111;font-weight:normal;white-space:pre;">200</div>
<div style="left:796px;top:1325.5px;height:15px;line-height:15px;font-size:11px;color:#111;font-weight:normal;white-space:pre;">TNF-α</div>
<div style="left:859px;top:1325.5px;height:15px;line-height:15px;font-size:11px;color:#111;font-weight:normal;white-space:pre;">WT</div>
<div style="left:526px;top:1345.5px;height:15px;line-height:15px;font-size:11px;color:#111;font-weight:normal;white-space:pre;">C11</div>
<div style="left:186.5px;width:600px;text-align:right;top:1345.5px;height:15px;line-height:15px;font-size:11px;color:#111;font-weight:normal;white-space:pre;">600</div>
<div style="left:796px;top:1345.5px;height:15px;line-height:15px;font-size:11px;color:#111;font-weight:normal;white-space:pre;">TNF-α</div>
<div style="left:859px;top:1345.5px;height:15px;line-height:15px;font-size:11px;color:#111;font-weight:normal;white-space:pre;">WT</div>
<div style="left:526px;top:1365.5px;height:15px;line-height:15px;font-size:11px;color:#111;font-weight:normal;white-space:pre;">D2</div>
<div style="left:576px;top:1365.5px;height:15px;line-height:15px;font-size:11px;color:#111;font-weight:normal;white-space:pre;">negative</div>
<div style="left:186.5px;width:600px;text-align:right;top:1365.5px;height:15px;line-height:15px;font-size:11px;color:#111;font-weight:normal;white-space:pre;">0</div>
<div style="left:796px;top:1365.5px;height:15px;line-height:15px;font-size:11px;color:#111;font-weight:normal;white-space:pre;">TNF-α</div>
<div style="left:859px;top:1365.5px;height:15px;line-height:15px;font-size:11px;color:#111;font-weight:normal;white-space:pre;">WT</div>
<div style="left:521px;top:1374px;width:383px;height:18px;background:#fcfcfc;"></div>
<div style="left:904px;top:941px;width:17px;height:433px;background:#f0f0f0;"></div>
<div style="left:906px;top:943px;width:13px;height:149px;background:#a8a8a8;border-radius:6px;"></div>
<div style="left:521px;top:1374px;width:400px;height:18px;background:#f0f0f0;"></div>
<div style="left:524px;top:1375px;width:124px;height:14px;background:#a8a8a8;border-radius:7px;"></div>
<div style="left:922px;top:900px;width:399px;height:41px;background:#d4d4d4;"></div>
<div style="left:922px;top:941px;width:399px;height:451px;background:#fcfcfc;"></div>
<svg style="left:0px;top:0px;" width="1330" height="1000" viewBox="0 0 1330 1000"><path d="M932 908 L932 930 L955 930" fill="none" stroke="#111" stroke-width="1.3"/><path d="M934 928 Q940 928 944 919 Q948 910 955 910" fill="none" stroke="#111" stroke-width="1.3"/><path d="M1177 917 L1185 917 L1181 921.5 Z" fill="#222"/><path d="M1205 915 L1211 915 M1208 915 L1208 929 M1205 929 L1211 929 M1216 907.5 L1222 907.5 M1219 907.5 L1219 928 M1216 928 L1222 928" stroke="#2f74d0" stroke-width="1.5"/><circle cx="1208" cy="922" r="2" fill="#2f74d0"/><circle cx="1219" cy="917.5" r="2" fill="#2f74d0"/><path d="M1245 913 L1249 908 L1253 913 Z" fill="#2f74d0"/><circle cx="1249" cy="918" r="2.8" fill="#2f74d0"/><rect x="1246" y="922" width="6" height="5" fill="#2f74d0"/><path d="M1255 910 L1268 910 M1255 917.5 L1268 917.5 M1255 925 L1268 925" stroke="#2f74d0" stroke-width="1.2" stroke-dasharray="1.5,1.3"/></svg>
<div style="left:962px;top:912.0px;height:15px;line-height:15px;font-size:10.7px;color:#111;font-weight:normal;white-space:pre;">Dose Response of NucCyto_Ratio (Avg)</div>
<svg style="left:0px;top:0px;" width="1330" height="1392" viewBox="0 0 1330 1392"><line x1="976" y1="1309.3" x2="1292" y2="1309.3" stroke="#e8e8e8"/><line x1="976" y1="1228.7" x2="1292" y2="1228.7" stroke="#e8e8e8"/><line x1="976" y1="1148.1" x2="1292" y2="1148.1" stroke="#e8e8e8"/><line x1="976" y1="1067.5" x2="1292" y2="1067.5" stroke="#e8e8e8"/><line x1="976" y1="986.9" x2="1292" y2="986.9" stroke="#e8e8e8"/><line x1="1065.6" y1="945" x2="1065.6" y2="1341" stroke="#e8e8e8"/><line x1="1168.2" y1="945" x2="1168.2" y2="1341" stroke="#e8e8e8"/><line x1="1270.8" y1="945" x2="1270.8" y2="1341" stroke="#e8e8e8"/><line x1="975.5" y1="945" x2="975.5" y2="1341.5" stroke="#111" stroke-width="1"/><line x1="975" y1="1341.5" x2="1292" y2="1341.5" stroke="#111" stroke-width="1"/><line x1="972" y1="1329.5" x2="975.5" y2="1329.5" stroke="#111"/><line x1="970" y1="1309.3" x2="975.5" y2="1309.3" stroke="#111"/><line x1="972" y1="1289.2" x2="975.5" y2="1289.2" stroke="#111"/><line x1="972" y1="1269.0" x2="975.5" y2="1269.0" stroke="#111"/><line x1="972" y1="1248.9" x2="975.5" y2="1248.9" stroke="#111"/><line x1="970" y1="1228.7" x2="975.5" y2="1228.7" stroke="#111"/><line x1="972" y1="1208.6" x2="975.5" y2="1208.6" stroke="#111"/><line x1="972" y1="1188.4" x2="975.5" y2="1188.4" stroke="#111"/><line x1="972" y1="1168.3" x2="975.5" y2="1168.3" stroke="#111"/><line x1="970" y1="1148.1" x2="975.5" y2="1148.1" stroke="#111"/><line x1="972" y1="1128.0" x2="975.5" y2="1128.0" stroke="#111"/><line x1="972" y1="1107.8" x2="975.5" y2="1107.8" stroke="#111"/><line x1="972" y1="1087.7" x2="975.5" y2="1087.7" stroke="#111"/><line x1="970" y1="1067.5" x2="975.5" y2="1067.5" stroke="#111"/><line x1="972" y1="1047.4" x2="975.5" y2="1047.4" stroke="#111"/><line x1="972" y1="1027.2" x2="975.5" y2="1027.2" stroke="#111"/><line x1="972" y1="1007.1" x2="975.5" y2="1007.1" stroke="#111"/><line x1="970" y1="986.9" x2="975.5" y2="986.9" stroke="#111"/><line x1="972" y1="966.8" x2="975.5" y2="966.8" stroke="#111"/><line x1="972" y1="946.6" x2="975.5" y2="946.6" stroke="#111"/><line x1="993.9" y1="1341.5" x2="993.9" y2="1345" stroke="#111"/><line x1="1012.0" y1="1341.5" x2="1012.0" y2="1345" stroke="#111"/><line x1="1024.8" y1="1341.5" x2="1024.8" y2="1345" stroke="#111"/><line x1="1034.7" y1="1341.5" x2="1034.7" y2="1345" stroke="#111"/><line x1="1042.8" y1="1341.5" x2="1042.8" y2="1345" stroke="#111"/><line x1="1049.7" y1="1341.5" x2="1049.7" y2="1345" stroke="#111"/><line x1="1055.7" y1="1341.5" x2="1055.7" y2="1345" stroke="#111"/><line x1="1060.9" y1="1341.5" x2="1060.9" y2="1345" stroke="#111"/><line x1="1065.6" y1="1341.5" x2="1065.6" y2="1347" stroke="#111"/><line x1="1096.5" y1="1341.5" x2="1096.5" y2="1345" stroke="#111"/><line x1="1114.6" y1="1341.5" x2="1114.6" y2="1345" stroke="#111"/><line x1="1127.4" y1="1341.5" x2="1127.4" y2="1345" stroke="#111"/><line x1="1137.3" y1="1341.5" x2="1137.3" y2="1345" stroke="#111"/><line x1="1145.4" y1="1341.5" x2="1145.4" y2="1345" stroke="#111"/><line x1="1152.3" y1="1341.5" x2="1152.3" y2="1345" stroke="#111"/><line x1="1158.3" y1="1341.5" x2="1158.3" y2="1345" stroke="#111"/><line x1="1163.5" y1="1341.5" x2="1163.5" y2="1345" stroke="#111"/><line x1="1168.2" y1="1341.5" x2="1168.2" y2="1347" stroke="#111"/><line x1="1199.1" y1="1341.5" x2="1199.1" y2="1345" stroke="#111"/><line x1="1217.2" y1="1341.5" x2="1217.2" y2="1345" stroke="#111"/><line x1="1230.0" y1="1341.5" x2="1230.0" y2="1345" stroke="#111"/><line x1="1239.9" y1="1341.5" x2="1239.9" y2="1345" stroke="#111"/><line x1="1248.0" y1="1341.5" x2="1248.0" y2="1345" stroke="#111"/><line x1="1254.9" y1="1341.5" x2="1254.9" y2="1345" stroke="#111"/><line x1="1260.9" y1="1341.5" x2="1260.9" y2="1345" stroke="#111"/><line x1="1266.1" y1="1341.5" x2="1266.1" y2="1345" stroke="#111"/><line x1="1270.8" y1="1341.5" x2="1270.8" y2="1347" stroke="#111"/><line x1="1003.3" y1="1013.8" x2="1003.3" y2="1263.4" stroke="#8c8c8c" stroke-width="1.6"/><line x1="998.3" y1="1013.8" x2="1008.3" y2="1013.8" stroke="#8c8c8c" stroke-width="1.4"/><line x1="998.3" y1="1263.4" x2="1008.3" y2="1263.4" stroke="#8c8c8c" stroke-width="1.4"/><line x1="1052.2" y1="1017.7" x2="1052.2" y2="1341" stroke="#8c8c8c" stroke-width="1.6"/><line x1="1047.2" y1="1017.7" x2="1057.2" y2="1017.7" stroke="#8c8c8c" stroke-width="1.4"/><line x1="1101.1" y1="945" x2="1101.1" y2="1341" stroke="#8c8c8c" stroke-width="1.6"/><line x1="1150.2" y1="946" x2="1150.2" y2="1341" stroke="#8c8c8c" stroke-width="1.6"/><line x1="1145.2" y1="946" x2="1155.2" y2="946" stroke="#8c8c8c" stroke-width="1.4"/><line x1="1199.1" y1="945" x2="1199.1" y2="1126.6" stroke="#8c8c8c" stroke-width="1.6"/><line x1="1194.1" y1="1126.6" x2="1204.1" y2="1126.6" stroke="#8c8c8c" stroke-width="1.4"/><line x1="1248.0" y1="984" x2="1248.0" y2="1280.7" stroke="#8c8c8c" stroke-width="1.6"/><line x1="1243.0" y1="984" x2="1253.0" y2="984" stroke="#8c8c8c" stroke-width="1.4"/><line x1="1243.0" y1="1280.7" x2="1253.0" y2="1280.7" stroke="#8c8c8c" stroke-width="1.4"/><polyline points="976,1173.2 977,1173.2 978,1173.2 979,1173.2 980,1173.2 981,1173.2 982,1173.2 983,1173.2 984,1173.2 985,1173.2 986,1173.2 987,1173.2 988,1173.2 989,1173.2 990,1173.2 991,1173.2 992,1173.2 993,1173.2 994,1173.2 995,1173.2 996,1173.2 997,1173.2 998,1173.2 999,1173.2 1000,1173.2 1001,1173.2 1002,1173.2 1003,1173.2 1004,1173.2 1005,1173.2 1006,1173.2 1007,1173.2 1008,1173.2 1009,1173.2 1010,1173.2 1011,1173.2 1012,1173.2 1013,1173.2 1014,1173.2 1015,1173.2 1016,1173.2 1017,1173.2 1018,1173.2 1019,1173.2 1020,1173.2 1021,1173.2 1022,1173.2 1023,1173.2 1024,1173.2 1025,1173.2 1026,1173.2 1027,1173.2 1028,1173.2 1029,1173.2 1030,1173.2 1031,1173.2 1032,1173.2 1033,1173.2 1034,1173.2 1035,1173.2 1036,1173.2 1037,1173.2 1038,1173.2 1039,1173.2 1040,1173.2 1041,1173.2 1042,1173.2 1043,1173.2 1044,1173.2 1045,1173.2 1046,1173.2 1047,1173.2 1048,1173.2 1049,1173.2 1050,1173.2 1051,1173.2 1052,1173.2 1053,1173.2 1054,1173.2 1055,1173.2 1056,1173.2 1057,1173.2 1058,1173.2 1059,1173.2 1060,1173.2 1061,1173.2 1062,1173.2 1063,1173.2 1064,1173.2 1065,1173.2 1066,1173.2 1067,1173.2 1068,1173.2 1069,1173.2 1070,1173.2 1071,1173.2 1072,1173.2 1073,1173.2 1074,1173.2 1075,1173.2 1076,1173.2 1077,1173.2 1078,1173.2 1079,1173.2 1080,1173.2 1081,1173.2 1082,1173.2 1083,1173.2 1084,1173.2 1085,1173.2 1086,1173.2 1087,1173.2 1088,1173.2 1089,1173.2 1090,1173.2 1091,1173.2 1092,1173.2 1093,1173.2 1094,1173.2 1095,1173.2 1096,1173.2 1097,1173.2 1098,1173.2 1099,1173.2 1100,1173.2 1101,1173.2 1102,1173.2 1103,1173.2 1104,1173.2 1105,1173.2 1106,1173.2 1107,1173.2 1108,1173.2 1109,1173.2 1110,1173.2 1111,1173.2 1112,1173.2 1113,1173.2 1114,1173.2 1115,1173.2 1116,1173.2 1117,1173.2 1118,1173.2 1119,1173.2 1120,1173.2 1121,1173.2 1122,1173.2 1123,1173.2 1124,1173.2 1125,1173.2 1126,1173.2 1127,1173.2 1128,1173.1 1129,1173.1 1130,1173.1 1131,1173.1 1132,1173.1 1133,1173.1 1134,1173.1 1135,1173.0 1136,1173.0 1137,1173.0 1138,1172.9 1139,1172.9 1140,1172.8 1141,1172.7 1142,1172.6 1143,1172.5 1144,1172.4 1145,1172.3 1146,1172.1 1147,1171.9 1148,1171.7 1149,1171.5 1150,1171.1 1151,1170.8 1152,1170.3 1153,1169.8 1154,1169.3 1155,1168.6 1156,1167.8 1157,1166.9 1158,1165.8 1159,1164.6 1160,1163.2 1161,1161.6 1162,1159.8 1163,1157.7 1164,1155.4 1165,1152.8 1166,1150.0 1167,1146.9 1168,1143.6 1169,1140.0 1170,1136.2 1171,1132.3 1172,1128.3 1173,1124.2 1174,1120.0 1175,1116.0 1176,1112.0 1177,1108.2 1178,1104.6 1179,1101.2 1180,1098.1 1181,1095.2 1182,1092.6 1183,1090.2 1184,1088.1 1185,1086.3 1186,1084.6 1187,1083.2 1188,1081.9 1189,1080.8 1190,1079.9 1191,1079.1 1192,1078.4 1193,1077.8 1194,1077.2 1195,1076.8 1196,1076.4 1197,1076.1 1198,1075.8 1199,1075.6 1200,1075.4 1201,1075.2 1202,1075.1 1203,1075.0 1204,1074.9 1205,1074.8 1206,1074.7 1207,1074.6 1208,1074.6 1209,1074.5 1210,1074.5 1211,1074.5 1212,1074.5 1213,1074.4 1214,1074.4 1215,1074.4 1216,1074.4 1217,1074.4 1218,1074.4 1219,1074.3 1220,1074.3 1221,1074.3 1222,1074.3 1223,1074.3 1224,1074.3 1225,1074.3 1226,1074.3 1227,1074.3 1228,1074.3 1229,1074.3 1230,1074.3 1231,1074.3 1232,1074.3 1233,1074.3 1234,1074.3 1235,1074.3 1236,1074.3 1237,1074.3 1238,1074.3 1239,1074.3 1240,1074.3 1241,1074.3 1242,1074.3 1243,1074.3 1244,1074.3 1245,1074.3 1246,1074.3 1247,1074.3 1248,1074.3 1249,1074.3 1250,1074.3 1251,1074.3 1252,1074.3 1253,1074.3 1254,1074.3 1255,1074.3 1256,1074.3 1257,1074.3 1258,1074.3 1259,1074.3 1260,1074.3 1261,1074.3 1262,1074.3 1263,1074.3 1264,1074.3 1265,1074.3 1266,1074.3 1267,1074.3 1268,1074.3 1269,1074.3 1270,1074.3 1271,1074.3 1272,1074.3 1273,1074.3 1274,1074.3 1275,1074.3 1276,1074.3 1277,1074.3 1278,1074.3 1279,1074.3 1280,1074.3 1281,1074.3 1282,1074.3 1283,1074.3 1284,1074.3 1285,1074.3 1286,1074.3 1287,1074.3 1288,1074.3 1289,1074.3 1290,1074.3 1291,1074.3 1292,1074.3" fill="none" stroke="#8fb3e6" stroke-width="2"/><circle cx="1173.1" cy="1124.1" r="4.3" fill="#8fb3e6"/><circle cx="1003.3" cy="1138.6" r="4.5" fill="#666" stroke="#444" stroke-width="1"/><circle cx="1052.2" cy="1182.8" r="4.5" fill="#666" stroke="#444" stroke-width="1"/><circle cx="1101.1" cy="1162.6" r="4.5" fill="#666" stroke="#444" stroke-width="1"/><circle cx="1150.2" cy="1199.4" r="4.5" fill="#666" stroke="#444" stroke-width="1"/><circle cx="1199.1" cy="1016.6" r="4.5" fill="#666" stroke="#444" stroke-width="1"/><circle cx="1248.0" cy="1132.2" r="4.5" fill="#666" stroke="#444" stroke-width="1"/><rect x="985.5" y="955.5" width="158" height="42" fill="#fcfcfc" fill-opacity="0.85" stroke="#e4e4e4"/><circle cx="1000.6" cy="969" r="4" fill="#666"/><line x1="990.7" y1="986" x2="1010" y2="986" stroke="#8fb3e6" stroke-width="2"/><line x1="1293" y1="945" x2="1293" y2="974" stroke="#1aa3e0" stroke-width="2"/><line x1="1293" y1="976" x2="1293" y2="1005" stroke="#1aa3e0" stroke-width="2"/><path d="M1307.8 953 L1307.8 967 M1300.8 960 L1314.8 960 M1305 955.5 L1307.8 952.5 L1310.6 955.5 M1305 964.5 L1307.8 967.5 L1310.6 964.5 M1303.3 957.2 L1300.3 960 L1303.3 962.8 M1312.3 957.2 L1315.3 960 L1312.3 962.8" fill="none" stroke="#9a9a9a" stroke-width="1.2"/><line x1="1302" y1="975" x2="1313" y2="975" stroke="#ccc"/><ellipse cx="1303" cy="992" rx="2.5" ry="4" fill="none" stroke="#9a9a9a" stroke-width="1.2"/><circle cx="1311" cy="989" r="3.5" fill="none" stroke="#9a9a9a" stroke-width="1.2"/><line x1="1310" y1="992.5" x2="1309" y2="997" stroke="#9a9a9a" stroke-width="1.2"/><line x1="1302" y1="1006" x2="1313" y2="1006" stroke="#ccc"/><path d="M1305 1018 L1312 1021 L1309 1022.5 L1307.5 1026 Z M1301 1016 L1303 1017 M1302 1021 L1304 1020 M1306 1013 L1306 1015" fill="none" stroke="#9a9a9a" stroke-width="1.1"/><line x1="1302" y1="1037" x2="1313" y2="1037" stroke="#ccc"/><path d="M1302 1052 A6 6 0 0 1 1313 1050 M1313 1054 A6 6 0 0 1 1302 1056" fill="none" stroke="#9a9a9a" stroke-width="1.2"/><line x1="1302" y1="1068" x2="1313" y2="1068" stroke="#ccc"/><path d="M1301.5 1078.5 L1314 1078.5 L1314 1087 L1308 1087 L1305 1090 L1305 1087 L1301.5 1087 Z M1304 1082 L1311 1082 M1304 1084.5 L1309 1084.5" fill="none" stroke="#9a9a9a" stroke-width="1.1"/></svg>
<div style="left:1015.4px;top:961.5px;height:15px;line-height:15px;font-size:10.6px;color:#111;font-weight:normal;white-space:pre;">TNF-α, WT: Data with SD</div>
<div style="left:1015.4px;top:978.5px;height:15px;line-height:15px;font-size:10.6px;color:#111;font-weight:normal;white-space:pre;">TNF-α, WT: Fit</div>
<div style="left:873px;width:600px;text-align:center;top:1098.0px;height:15px;line-height:15px;font-size:10.5px;color:#8fb3e6;font-weight:normal;white-space:pre;">EC/IC50</div>
<div style="left:365px;width:600px;text-align:right;top:979.9px;height:14px;line-height:14px;font-size:10.3px;color:#111;font-weight:normal;white-space:pre;">3.4</div>
<div style="left:365px;width:600px;text-align:right;top:1060.5px;height:14px;line-height:14px;font-size:10.3px;color:#111;font-weight:normal;white-space:pre;">3.2</div>
<div style="left:365px;width:600px;text-align:right;top:1141.1px;height:14px;line-height:14px;font-size:10.3px;color:#111;font-weight:normal;white-space:pre;">3</div>
<div style="left:365px;width:600px;text-align:right;top:1221.7px;height:14px;line-height:14px;font-size:10.3px;color:#111;font-weight:normal;white-space:pre;">2.8</div>
<div style="left:365px;width:600px;text-align:right;top:1302.3px;height:14px;line-height:14px;font-size:10.3px;color:#111;font-weight:normal;white-space:pre;">2.6</div>
<div style="left:1045.6px;width:40px;text-align:center;top:1352px;height:16px;line-height:16px;font-size:10.3px;color:#111;">10<sup style="font-size:7px;vertical-align:5px;">1</sup></div>
<div style="left:1148.2px;width:40px;text-align:center;top:1352px;height:16px;line-height:16px;font-size:10.3px;color:#111;">10<sup style="font-size:7px;vertical-align:5px;">2</sup></div>
<div style="left:1250.8px;width:40px;text-align:center;top:1352px;height:16px;line-height:16px;font-size:10.3px;color:#111;">10<sup style="font-size:7px;vertical-align:5px;">3</sup></div>
<div style="left:834px;width:600px;text-align:center;top:1373.0px;height:17px;line-height:17px;font-size:12.3px;color:#111;font-weight:normal;white-space:pre;">Concentration [ng/ml]</div>
<div style="left:874px;top:1136px;width:120px;height:16px;line-height:16px;text-align:center;font-size:11.3px;color:#111;transform:rotate(-90deg);white-space:nowrap;">NucCyto_Ratio (Avg)</div>
<div style="left:1330px;top:57px;width:809px;height:40px;background:#d4d4d4;"></div>
<svg style="left:0px;top:0px;" width="2140" height="100" viewBox="0 0 2140 100"><circle cx="1344.7" cy="71.4" r="5" fill="#333"/><circle cx="1356.8" cy="71.4" r="3.2" fill="none" stroke="#333" stroke-width="1.3"/><circle cx="1344.7" cy="83.5" r="3.2" fill="none" stroke="#333" stroke-width="1.3"/><circle cx="1356.8" cy="83.5" r="3.2" fill="none" stroke="#333" stroke-width="1.3"/><path d="M1344.7 76.5 L1344.7 80.3 M1348 83.5 L1353.5 83.5 M1356.8 74.6 L1356.8 80.3" stroke="#333" stroke-width="1"/><line x1="1377.5" y1="63" x2="1377.5" y2="90" stroke="#a8a8a8"/><rect x="1425" y="74" width="11" height="6" rx="3" fill="#2f74d0"/><circle cx="1439.8" cy="77" r="6" fill="#2f74d0"/><path d="M1465.5 68 L1465.5 86 M1488.5 68 L1488.5 86 M1468 85 L1474 72 Q1477 66 1480 72 L1486 85" fill="none" stroke="#333" stroke-width="1.3"/><path d="M1502 74.5 L1510 74.5 L1506 79 Z" fill="#333"/><line x1="1525.5" y1="63" x2="1525.5" y2="90" stroke="#a8a8a8"/><path d="M1543 67 L1543 73 M1563 67 L1563 73 M1543 70 L1563 70" stroke="#444" stroke-width="1.4"/><circle cx="1589.9" cy="77.1" r="11" fill="none" stroke="#333" stroke-width="1.4"/><path d="M1588.5 74 L1591 74 L1589 82 L1591.5 82" fill="none" stroke="#333" stroke-width="2.2"/><circle cx="1591.2" cy="70.5" r="1.5" fill="#333"/><path d="M1630 65.5 L1615.5 65.5 L1615.5 83 L1620 83" fill="none" stroke="#333" stroke-width="1.4"/><rect x="1620.5" y="71.5" width="18" height="17" fill="#d4d4d4" stroke="#333" stroke-width="1.4"/><path d="M1623 76 L1625 76 M1627 76 L1636 76 M1623 80 L1625 80 M1627 80 L1636 80 M1623 84 L1625 84 M1627 84 L1636 84" stroke="#333" stroke-width="1.2"/><path d="M1834 75 L1838 79.5 L1842 75" fill="none" stroke="#222" stroke-width="1.3"/><line x1="1858.5" y1="63" x2="1858.5" y2="90" stroke="#a8a8a8"/><path d="M1876 67 L1882 73 M1876 67 L1876 71.5 M1876 67 L1880.5 67 M1896 67 L1890 73 M1896 67 L1896 71.5 M1896 67 L1891.5 67 M1876 87 L1882 81 M1876 87 L1876 82.5 M1876 87 L1880.5 87 M1896 87 L1890 81 M1896 87 L1896 82.5 M1896 87 L1891.5 87" fill="none" stroke="#333" stroke-width="1.5"/><rect x="1944.5" y="65.5" width="59" height="23" fill="#fcfcfc" stroke="#a0a0a0"/><line x1="1988.5" y1="66" x2="1988.5" y2="88" stroke="#a0a0a0"/><path d="M1992 75 L2000 75 L1996 79.5 Z" fill="#333"/><line x1="2015.5" y1="63" x2="2015.5" y2="90" stroke="#a8a8a8"/><rect x="2032" y="66.5" width="23" height="22" fill="none" stroke="#888" stroke-width="1.2"/><path d="M2043.5 66.5 L2043.5 72 M2038 72 L2049 72 L2049 83 L2038 83 Z M2032 77 L2038 77 M2049 77 L2055 77 M2043.5 83 L2043.5 88.5" fill="none" stroke="#666" stroke-width="1.3"/><circle cx="2052" cy="85" r="3" fill="#d4d4d4" stroke="#888" stroke-width="1"/><line x1="2070.5" y1="63" x2="2070.5" y2="90" stroke="#a8a8a8"/><path d="M2092.5 71.5 L2103.5 82.5 M2103.5 71.5 L2092.5 82.5" stroke="#333" stroke-width="1.3"/><circle cx="2127" cy="72.5" r="1.5" fill="#222"/><circle cx="2127" cy="78" r="1.5" fill="#222"/><circle cx="2127" cy="83.5" r="1.5" fill="#222"/></svg>
<div style="left:1388.5px;top:70.0px;height:15px;line-height:15px;font-size:11px;color:#111;font-weight:normal;white-space:pre;">LUTs</div>
<div style="left:1252.5px;width:600px;text-align:center;top:70.0px;height:21px;line-height:21px;font-size:15px;color:#444;font-weight:normal;white-space:pre;">µm</div>
<div style="left:1796.5px;top:69.7px;height:16px;line-height:16px;font-size:11.3px;color:#111;font-weight:normal;white-space:pre;">Layout</div>
<div style="left:1622px;width:600px;text-align:center;top:62.5px;height:29px;line-height:29px;font-size:21px;color:#555;font-weight:normal;white-space:pre;letter-spacing:-1.5px;">1:1</div>
<div style="left:1950px;top:69.0px;height:16px;line-height:16px;font-size:11.5px;color:#111;font-weight:normal;white-space:pre;">50%</div>
<svg style="left:1330px;top:97px;" width="809" height="696" viewBox="0 0 809 696"><defs><radialGradient id="nuc" cx="0.45" cy="0.45" r="0.6"><stop offset="0" stop-color="#84a5dc"/><stop offset="0.55" stop-color="#7b9bc2"/><stop offset="1" stop-color="#7796a4"/></radialGradient><radialGradient id="bgv" cx="0.5" cy="0.5" r="0.7"><stop offset="0" stop-color="#6e8e70"/><stop offset="1" stop-color="#6a8a6b"/></radialGradient><clipPath id="imgclip"><rect x="0" y="0" width="809" height="696"/></clipPath></defs><g clip-path="url(#imgclip)"><rect x="0" y="0" width="809" height="696" fill="url(#bgv)"/><circle cx="193" cy="379" r="38" fill="#5f7f5d" fill-opacity="0.18"/><circle cx="506" cy="46" r="21" fill="#5f7f5d" fill-opacity="0.18"/><circle cx="210" cy="163" r="70" fill="#5f7f5d" fill-opacity="0.18"/><circle cx="438" cy="383" r="40" fill="#62825f" fill-opacity="0.18"/><circle cx="188" cy="106" r="66" fill="#5f7f5d" fill-opacity="0.18"/><circle cx="600" cy="467" r="23" fill="#779779" fill-opacity="0.18"/><circle cx="244" cy="22" r="63" fill="#5f7f5d" fill-opacity="0.18"/><circle cx="481" cy="640" r="39" fill="#5f7f5d" fill-opacity="0.18"/><circle cx="320" cy="557" r="42" fill="#62825f" fill-opacity="0.18"/><circle cx="711" cy="68" r="27" fill="#62825f" fill-opacity="0.18"/><circle cx="209" cy="468" r="59" fill="#729274" fill-opacity="0.18"/><circle cx="341" cy="580" r="49" fill="#5f7f5d" fill-opacity="0.18"/><circle cx="473" cy="629" r="54" fill="#779779" fill-opacity="0.18"/><circle cx="693" cy="690" r="54" fill="#62825f" fill-opacity="0.18"/><circle cx="565" cy="227" r="47" fill="#779779" fill-opacity="0.18"/><circle cx="577" cy="147" r="62" fill="#729274" fill-opacity="0.18"/><circle cx="231" cy="44" r="63" fill="#5f7f5d" fill-opacity="0.18"/><circle cx="72" cy="557" r="41" fill="#62825f" fill-opacity="0.18"/><circle cx="16" cy="297" r="41" fill="#779779" fill-opacity="0.18"/><circle cx="36" cy="428" r="22" fill="#729274" fill-opacity="0.18"/><circle cx="446" cy="642" r="34" fill="#62825f" fill-opacity="0.18"/><circle cx="808" cy="216" r="24" fill="#779779" fill-opacity="0.18"/><circle cx="768" cy="676" r="35" fill="#729274" fill-opacity="0.18"/><circle cx="126" cy="30" r="63" fill="#729274" fill-opacity="0.18"/><circle cx="291" cy="96" r="63" fill="#5f7f5d" fill-opacity="0.18"/><circle cx="372" cy="362" r="52" fill="#779779" fill-opacity="0.18"/><circle cx="502" cy="655" r="45" fill="#5f7f5d" fill-opacity="0.18"/><circle cx="513" cy="498" r="67" fill="#5f7f5d" fill-opacity="0.18"/><circle cx="791" cy="363" r="47" fill="#779779" fill-opacity="0.18"/><circle cx="638" cy="687" r="36" fill="#5f7f5d" fill-opacity="0.18"/><circle cx="498" cy="440" r="23" fill="#729274" fill-opacity="0.18"/><circle cx="377" cy="473" r="38" fill="#729274" fill-opacity="0.18"/><circle cx="597" cy="15" r="23" fill="#779779" fill-opacity="0.18"/><circle cx="779" cy="175" r="43" fill="#729274" fill-opacity="0.18"/><circle cx="144" cy="129" r="58" fill="#729274" fill-opacity="0.18"/><circle cx="243" cy="263" r="59" fill="#779779" fill-opacity="0.18"/><circle cx="786" cy="476" r="27" fill="#62825f" fill-opacity="0.18"/><circle cx="529" cy="187" r="36" fill="#5f7f5d" fill-opacity="0.18"/><circle cx="525" cy="68" r="50" fill="#729274" fill-opacity="0.18"/><circle cx="546" cy="156" r="60" fill="#62825f" fill-opacity="0.18"/><circle cx="65" cy="516" r="31" fill="#5f7f5d" fill-opacity="0.18"/><circle cx="219" cy="548" r="22" fill="#62825f" fill-opacity="0.18"/><circle cx="255" cy="582" r="49" fill="#729274" fill-opacity="0.18"/><circle cx="275" cy="576" r="24" fill="#729274" fill-opacity="0.18"/><circle cx="477" cy="293" r="46" fill="#729274" fill-opacity="0.18"/><circle cx="376" cy="441" r="35" fill="#5f7f5d" fill-opacity="0.18"/><circle cx="29" cy="288" r="30" fill="#5f7f5d" fill-opacity="0.18"/><circle cx="763" cy="612" r="69" fill="#5f7f5d" fill-opacity="0.18"/><circle cx="452" cy="686" r="56" fill="#779779" fill-opacity="0.18"/><circle cx="603" cy="582" r="53" fill="#729274" fill-opacity="0.18"/><circle cx="440" cy="619" r="63" fill="#729274" fill-opacity="0.18"/><circle cx="97" cy="170" r="22" fill="#62825f" fill-opacity="0.18"/><circle cx="725" cy="626" r="49" fill="#779779" fill-opacity="0.18"/><circle cx="389" cy="84" r="45" fill="#62825f" fill-opacity="0.18"/><circle cx="536" cy="365" r="41" fill="#779779" fill-opacity="0.18"/><circle cx="276" cy="176" r="63" fill="#5f7f5d" fill-opacity="0.18"/><circle cx="657" cy="43" r="31" fill="#779779" fill-opacity="0.18"/><circle cx="433" cy="569" r="29" fill="#729274" fill-opacity="0.18"/><circle cx="746" cy="561" r="61" fill="#779779" fill-opacity="0.18"/><circle cx="394" cy="397" r="40" fill="#729274" fill-opacity="0.18"/><path d="M487 118 Q535 140 520 180 Q508 200 485 196" fill="none" stroke="#9fbf98" stroke-width="6" stroke-opacity="0.55"/><path d="M480 128 Q515 142 504 172" fill="none" stroke="#3f6a3a" stroke-width="8" stroke-opacity="0.75"/><ellipse cx="117.9" cy="9.1" rx="27.4" ry="28.6" fill="#7c9aa2" fill-opacity="0.4" stroke="#ffff00" stroke-width="1.2"/><ellipse cx="228.8" cy="-4.5" rx="23.8" ry="15.0" fill="#7c9aa2" fill-opacity="0.4" stroke="#ffff00" stroke-width="1.2"/><ellipse cx="237.9" cy="29.7" rx="28.0" ry="23.6" fill="#7c9aa2" fill-opacity="0.4" stroke="#ffff00" stroke-width="1.2"/><ellipse cx="19.9" cy="85.4" rx="34.5" ry="24.5" transform="rotate(-48 19.9 85.4)" fill="#7c9aa2" fill-opacity="0.4" stroke="#ffff00" stroke-width="1.2"/><ellipse cx="79.2" cy="74.7" rx="25.1" ry="23.8" fill="#7c9aa2" fill-opacity="0.4" stroke="#ffff00" stroke-width="1.2"/><ellipse cx="162.1" cy="74.4" rx="29.3" ry="22.4" transform="rotate(70 162.1 74.4)" fill="#7c9aa2" fill-opacity="0.4" stroke="#ffff00" stroke-width="1.2"/><ellipse cx="242.0" cy="76.6" rx="27.0" ry="23.2" fill="#7c9aa2" fill-opacity="0.4" stroke="#ffff00" stroke-width="1.2"/><ellipse cx="295.4" cy="59.6" rx="25.1" ry="26.9" fill="#7c9aa2" fill-opacity="0.4" stroke="#ffff00" stroke-width="1.2"/><ellipse cx="362.6" cy="65.0" rx="25.8" ry="21.4" transform="rotate(35 362.6 65.0)" fill="#7c9aa2" fill-opacity="0.4" stroke="#ffff00" stroke-width="1.2"/><ellipse cx="343.1" cy="99.6" rx="26.6" ry="24.6" transform="rotate(60 343.1 99.6)" fill="#7c9aa2" fill-opacity="0.4" stroke="#ffff00" stroke-width="1.2"/><ellipse cx="77.9" cy="131.2" rx="25.6" ry="28.1" fill="#7c9aa2" fill-opacity="0.4" stroke="#ffff00" stroke-width="1.2"/><ellipse cx="219.3" cy="135.5" rx="28.2" ry="26.4" fill="#7c9aa2" fill-opacity="0.4" stroke="#ffff00" stroke-width="1.2"/><ellipse cx="308.6" cy="139.7" rx="34.5" ry="25.5" transform="rotate(-20 308.6 139.7)" fill="#7c9aa2" fill-opacity="0.4" stroke="#ffff00" stroke-width="1.2"/><ellipse cx="390.3" cy="129.6" rx="24.5" ry="24.7" fill="#7c9aa2" fill-opacity="0.4" stroke="#ffff00" stroke-width="1.2"/><ellipse cx="42.1" cy="183.4" rx="25.7" ry="25.7" fill="#7c9aa2" fill-opacity="0.4" stroke="#ffff00" stroke-width="1.2"/><ellipse cx="117.3" cy="185.7" rx="24.7" ry="27.2" fill="#7c9aa2" fill-opacity="0.4" stroke="#ffff00" stroke-width="1.2"/><ellipse cx="202.4" cy="183.0" rx="25.1" ry="26.6" fill="#7c9aa2" fill-opacity="0.4" stroke="#ffff00" stroke-width="1.2"/><ellipse cx="267.1" cy="194.5" rx="24.5" ry="23.5" fill="#7c9aa2" fill-opacity="0.4" stroke="#ffff00" stroke-width="1.2"/><ellipse cx="350.1" cy="180.3" rx="26.0" ry="27.3" transform="rotate(60 350.1 180.3)" fill="#7c9aa2" fill-opacity="0.4" stroke="#ffff00" stroke-width="1.2"/><ellipse cx="0.6" cy="228.0" rx="23.2" ry="21.3" fill="#7c9aa2" fill-opacity="0.4" stroke="#ffff00" stroke-width="1.2"/><ellipse cx="167.2" cy="242.5" rx="22.6" ry="25.7" fill="#7c9aa2" fill-opacity="0.4" stroke="#ffff00" stroke-width="1.2"/><ellipse cx="270.2" cy="237.2" rx="26.4" ry="23.5" fill="#7c9aa2" fill-opacity="0.4" stroke="#ffff00" stroke-width="1.2"/><ellipse cx="72.6" cy="264.2" rx="20.3" ry="24.8" fill="#7c9aa2" fill-opacity="0.4" stroke="#ffff00" stroke-width="1.2"/><ellipse cx="115.3" cy="276.2" rx="26.7" ry="25.5" fill="#7c9aa2" fill-opacity="0.4" stroke="#ffff00" stroke-width="1.2"/><ellipse cx="191.7" cy="280.8" rx="24.5" ry="27.6" fill="#7c9aa2" fill-opacity="0.4" stroke="#ffff00" stroke-width="1.2"/><ellipse cx="265.2" cy="277.0" rx="16.3" ry="15.0" fill="#7c9aa2" fill-opacity="0.4" stroke="#ffff00" stroke-width="1.2"/><ellipse cx="336.0" cy="292.7" rx="29.8" ry="22.7" transform="rotate(-60 336.0 292.7)" fill="#7c9aa2" fill-opacity="0.4" stroke="#ffff00" stroke-width="1.2"/><ellipse cx="205.5" cy="326.7" rx="25.7" ry="25.7" fill="#7c9aa2" fill-opacity="0.4" stroke="#ffff00" stroke-width="1.2"/><ellipse cx="75.2" cy="340.5" rx="22.8" ry="27.0" fill="#7c9aa2" fill-opacity="0.4" stroke="#ffff00" stroke-width="1.2"/><ellipse cx="293.5" cy="344.3" rx="22.0" ry="25.7" fill="#7c9aa2" fill-opacity="0.4" stroke="#ffff00" stroke-width="1.2"/><ellipse cx="348.2" cy="-4.3" rx="18.8" ry="12.8" fill="#7c9aa2" fill-opacity="0.4" stroke="#ffff00" stroke-width="1.2"/><ellipse cx="423.9" cy="22.9" rx="29.4" ry="29.9" fill="#7c9aa2" fill-opacity="0.4" stroke="#ffff00" stroke-width="1.2"/><ellipse cx="552.1" cy="-4.5" rx="16.3" ry="15.0" fill="#7c9aa2" fill-opacity="0.4" stroke="#ffff00" stroke-width="1.2"/><ellipse cx="493.3" cy="48.0" rx="30.4" ry="27.3" transform="rotate(65 493.3 48.0)" fill="#7c9aa2" fill-opacity="0.4" stroke="#ffff00" stroke-width="1.2"/><ellipse cx="538.3" cy="31.9" rx="28.1" ry="25.0" transform="rotate(65 538.3 31.9)" fill="#7c9aa2" fill-opacity="0.4" stroke="#ffff00" stroke-width="1.2"/><ellipse cx="722.0" cy="30.4" rx="25.3" ry="24.8" fill="#7c9aa2" fill-opacity="0.4" stroke="#ffff00" stroke-width="1.2"/><ellipse cx="470.1" cy="81.2" rx="30.9" ry="23.4" transform="rotate(15 470.1 81.2)" fill="#7c9aa2" fill-opacity="0.4" stroke="#ffff00" stroke-width="1.2"/><ellipse cx="616.6" cy="55.2" rx="24.2" ry="19.4" fill="#7c9aa2" fill-opacity="0.4" stroke="#ffff00" stroke-width="1.2"/><ellipse cx="611.8" cy="79.7" rx="24.5" ry="21.3" fill="#7c9aa2" fill-opacity="0.4" stroke="#ffff00" stroke-width="1.2"/><ellipse cx="644.7" cy="81.6" rx="31.0" ry="23.5" transform="rotate(80 644.7 81.6)" fill="#7c9aa2" fill-opacity="0.4" stroke="#ffff00" stroke-width="1.2"/><ellipse cx="702.9" cy="69.4" rx="28.9" ry="20.9" transform="rotate(40 702.9 69.4)" fill="#7c9aa2" fill-opacity="0.4" stroke="#ffff00" stroke-width="1.2"/><ellipse cx="755.3" cy="68.8" rx="32.9" ry="25.8" transform="rotate(65 755.3 68.8)" fill="#7c9aa2" fill-opacity="0.4" stroke="#ffff00" stroke-width="1.2"/><ellipse cx="812.9" cy="41.4" rx="22.0" ry="27.0" fill="#7c9aa2" fill-opacity="0.4" stroke="#ffff00" stroke-width="1.2"/><ellipse cx="462.0" cy="141.9" rx="37.5" ry="27.5" transform="rotate(35 462.0 141.9)" fill="#7c9aa2" fill-opacity="0.4" stroke="#ffff00" stroke-width="1.2"/><ellipse cx="555.9" cy="132.1" rx="37.7" ry="28.0" transform="rotate(-30 555.9 132.1)" fill="#7c9aa2" fill-opacity="0.4" stroke="#ffff00" stroke-width="1.2"/><ellipse cx="668.4" cy="133.1" rx="28.2" ry="24.5" fill="#7c9aa2" fill-opacity="0.4" stroke="#ffff00" stroke-width="1.2"/><ellipse cx="720.5" cy="135.3" rx="30.1" ry="26.1" fill="#7c9aa2" fill-opacity="0.4" stroke="#ffff00" stroke-width="1.2"/><ellipse cx="764.5" cy="154.5" rx="25.6" ry="27.0" fill="#7c9aa2" fill-opacity="0.4" stroke="#ffff00" stroke-width="1.2"/><ellipse cx="804.7" cy="175.9" rx="25.1" ry="29.5" fill="#7c9aa2" fill-opacity="0.4" stroke="#ffff00" stroke-width="1.2"/><ellipse cx="658.7" cy="174.2" rx="27.9" ry="22.8" fill="#7c9aa2" fill-opacity="0.4" stroke="#ffff00" stroke-width="1.2"/><ellipse cx="723.0" cy="182.8" rx="29.4" ry="25.1" fill="#7c9aa2" fill-opacity="0.4" stroke="#ffff00" stroke-width="1.2"/><ellipse cx="519.4" cy="198.9" rx="32.2" ry="24.3" transform="rotate(-30 519.4 198.9)" fill="#7c9aa2" fill-opacity="0.4" stroke="#ffff00" stroke-width="1.2"/><ellipse cx="436.8" cy="218.6" rx="23.0" ry="24.5" fill="#7c9aa2" fill-opacity="0.4" stroke="#ffff00" stroke-width="1.2"/><ellipse cx="652.4" cy="221.1" rx="45.5" ry="26.5" transform="rotate(-35 652.4 221.1)" fill="#7c9aa2" fill-opacity="0.4" stroke="#ffff00" stroke-width="1.2"/><ellipse cx="533.9" cy="245.6" rx="25.7" ry="27.6" fill="#7c9aa2" fill-opacity="0.4" stroke="#ffff00" stroke-width="1.2"/><ellipse cx="677.8" cy="267.0" rx="28.9" ry="25.1" fill="#7c9aa2" fill-opacity="0.4" stroke="#ffff00" stroke-width="1.2"/><ellipse cx="747.5" cy="264.1" rx="25.7" ry="24.2" fill="#7c9aa2" fill-opacity="0.4" stroke="#ffff00" stroke-width="1.2"/><ellipse cx="451.2" cy="277.7" rx="25.5" ry="28.2" fill="#7c9aa2" fill-opacity="0.4" stroke="#ffff00" stroke-width="1.2"/><ellipse cx="619.0" cy="285.5" rx="27.9" ry="24.7" fill="#7c9aa2" fill-opacity="0.4" stroke="#ffff00" stroke-width="1.2"/><ellipse cx="505.2" cy="305.7" rx="26.0" ry="28.6" fill="#7c9aa2" fill-opacity="0.4" stroke="#ffff00" stroke-width="1.2"/><ellipse cx="671.2" cy="316.0" rx="31.4" ry="24.3" transform="rotate(-30 671.2 316.0)" fill="#7c9aa2" fill-opacity="0.4" stroke="#ffff00" stroke-width="1.2"/><ellipse cx="399.4" cy="328.6" rx="22.0" ry="28.9" fill="#7c9aa2" fill-opacity="0.4" stroke="#ffff00" stroke-width="1.2"/><ellipse cx="551.5" cy="330.5" rx="24.5" ry="27.0" fill="#7c9aa2" fill-opacity="0.4" stroke="#ffff00" stroke-width="1.2"/><ellipse cx="757.6" cy="335.5" rx="24.5" ry="22.0" fill="#7c9aa2" fill-opacity="0.4" stroke="#ffff00" stroke-width="1.2"/><ellipse cx="797.2" cy="329.8" rx="25.1" ry="27.6" fill="#7c9aa2" fill-opacity="0.4" stroke="#ffff00" stroke-width="1.2"/><ellipse cx="702.9" cy="-4.5" rx="21.3" ry="12.5" fill="#7c9aa2" fill-opacity="0.4" stroke="#ffff00" stroke-width="1.2"/><ellipse cx="120.5" cy="370.4" rx="30.5" ry="23.8" transform="rotate(20 120.5 370.4)" fill="#7c9aa2" fill-opacity="0.4" stroke="#ffff00" stroke-width="1.2"/><ellipse cx="222.8" cy="402.9" rx="32.5" ry="27.5" transform="rotate(-20 222.8 402.9)" fill="#7c9aa2" fill-opacity="0.4" stroke="#ffff00" stroke-width="1.2"/><ellipse cx="238.1" cy="429.7" rx="26.9" ry="22.8" fill="#7c9aa2" fill-opacity="0.4" stroke="#ffff00" stroke-width="1.2"/><ellipse cx="318.7" cy="402.7" rx="25.9" ry="28.9" fill="#7c9aa2" fill-opacity="0.4" stroke="#ffff00" stroke-width="1.2"/><ellipse cx="366.3" cy="426.8" rx="38.5" ry="26.5" transform="rotate(60 366.3 426.8)" fill="#7c9aa2" fill-opacity="0.4" stroke="#ffff00" stroke-width="1.2"/><ellipse cx="153.0" cy="419.9" rx="29.7" ry="22.6" transform="rotate(-70 153.0 419.9)" fill="#7c9aa2" fill-opacity="0.4" stroke="#ffff00" stroke-width="1.2"/><ellipse cx="95.9" cy="436.3" rx="26.9" ry="24.3" fill="#7c9aa2" fill-opacity="0.4" stroke="#ffff00" stroke-width="1.2"/><ellipse cx="325.7" cy="458.4" rx="24.7" ry="24.7" fill="#7c9aa2" fill-opacity="0.4" stroke="#ffff00" stroke-width="1.2"/><ellipse cx="49.7" cy="473.0" rx="26.6" ry="25.3" fill="#7c9aa2" fill-opacity="0.4" stroke="#ffff00" stroke-width="1.2"/><ellipse cx="9.6" cy="510.0" rx="27.3" ry="30.4" fill="#7c9aa2" fill-opacity="0.4" stroke="#ffff00" stroke-width="1.2"/><ellipse cx="232.0" cy="514.2" rx="22.8" ry="26.2" fill="#7c9aa2" fill-opacity="0.4" stroke="#ffff00" stroke-width="1.2"/><ellipse cx="366.8" cy="507.7" rx="24.5" ry="26.4" fill="#7c9aa2" fill-opacity="0.4" stroke="#ffff00" stroke-width="1.2"/><ellipse cx="76.1" cy="536.1" rx="24.5" ry="22.2" fill="#7c9aa2" fill-opacity="0.4" stroke="#ffff00" stroke-width="1.2"/><ellipse cx="141.9" cy="582.0" rx="31.3" ry="23.7" transform="rotate(-25 141.9 582.0)" fill="#7c9aa2" fill-opacity="0.4" stroke="#ffff00" stroke-width="1.2"/><ellipse cx="303.2" cy="580.1" rx="35.5" ry="26.5" transform="rotate(40 303.2 580.1)" fill="#7c9aa2" fill-opacity="0.4" stroke="#ffff00" stroke-width="1.2"/><ellipse cx="40.8" cy="628.8" rx="25.9" ry="25.6" fill="#7c9aa2" fill-opacity="0.4" stroke="#ffff00" stroke-width="1.2"/><ellipse cx="199.3" cy="639.4" rx="23.7" ry="27.3" fill="#7c9aa2" fill-opacity="0.4" stroke="#ffff00" stroke-width="1.2"/><ellipse cx="280.7" cy="648.3" rx="30.2" ry="23.4" fill="#7c9aa2" fill-opacity="0.4" stroke="#ffff00" stroke-width="1.2"/><ellipse cx="167.9" cy="665.2" rx="23.7" ry="22.4" fill="#7c9aa2" fill-opacity="0.4" stroke="#ffff00" stroke-width="1.2"/><ellipse cx="397.1" cy="649.6" rx="29.2" ry="22.5" transform="rotate(20 397.1 649.6)" fill="#7c9aa2" fill-opacity="0.4" stroke="#ffff00" stroke-width="1.2"/><ellipse cx="383.1" cy="684.0" rx="28.5" ry="28.5" transform="rotate(30 383.1 684.0)" fill="#7c9aa2" fill-opacity="0.4" stroke="#ffff00" stroke-width="1.2"/><ellipse cx="53.5" cy="697.4" rx="30.4" ry="20.2" fill="#7c9aa2" fill-opacity="0.4" stroke="#ffff00" stroke-width="1.2"/><ellipse cx="114.7" cy="694.9" rx="25.3" ry="22.8" fill="#7c9aa2" fill-opacity="0.4" stroke="#ffff00" stroke-width="1.2"/><ellipse cx="616.7" cy="353.2" rx="20.2" ry="22.8" fill="#7c9aa2" fill-opacity="0.4" stroke="#ffff00" stroke-width="1.2"/><ellipse cx="591.2" cy="366.6" rx="20.2" ry="19.6" fill="#7c9aa2" fill-opacity="0.4" stroke="#ffff00" stroke-width="1.2"/><ellipse cx="697.0" cy="359.6" rx="27.9" ry="21.5" fill="#7c9aa2" fill-opacity="0.4" stroke="#ffff00" stroke-width="1.2"/><ellipse cx="457.6" cy="376.1" rx="26.4" ry="24.8" fill="#7c9aa2" fill-opacity="0.4" stroke="#ffff00" stroke-width="1.2"/><ellipse cx="603.3" cy="390.8" rx="23.4" ry="22.2" fill="#7c9aa2" fill-opacity="0.4" stroke="#ffff00" stroke-width="1.2"/><ellipse cx="651.1" cy="388.6" rx="28.4" ry="25.3" transform="rotate(-60 651.1 388.6)" fill="#7c9aa2" fill-opacity="0.4" stroke="#ffff00" stroke-width="1.2"/><ellipse cx="776.1" cy="407.6" rx="29.6" ry="23.7" transform="rotate(-60 776.1 407.6)" fill="#7c9aa2" fill-opacity="0.4" stroke="#ffff00" stroke-width="1.2"/><ellipse cx="473.7" cy="423.3" rx="25.1" ry="27.9" fill="#7c9aa2" fill-opacity="0.4" stroke="#ffff00" stroke-width="1.2"/><ellipse cx="720.9" cy="433.5" rx="23.7" ry="25.3" fill="#7c9aa2" fill-opacity="0.4" stroke="#ffff00" stroke-width="1.2"/><ellipse cx="573.0" cy="449.1" rx="26.2" ry="21.3" fill="#7c9aa2" fill-opacity="0.4" stroke="#ffff00" stroke-width="1.2"/><ellipse cx="683.0" cy="449.5" rx="25.3" ry="26.0" fill="#7c9aa2" fill-opacity="0.4" stroke="#ffff00" stroke-width="1.2"/><ellipse cx="741.9" cy="459.9" rx="25.6" ry="23.7" fill="#7c9aa2" fill-opacity="0.4" stroke="#ffff00" stroke-width="1.2"/><ellipse cx="465.9" cy="481.6" rx="29.2" ry="25.1" transform="rotate(60 465.9 481.6)" fill="#7c9aa2" fill-opacity="0.4" stroke="#ffff00" stroke-width="1.2"/><ellipse cx="571.1" cy="482.6" rx="28.2" ry="27.3" fill="#7c9aa2" fill-opacity="0.4" stroke="#ffff00" stroke-width="1.2"/><ellipse cx="771.0" cy="486.2" rx="25.3" ry="26.2" fill="#7c9aa2" fill-opacity="0.4" stroke="#ffff00" stroke-width="1.2"/><ellipse cx="660.8" cy="506.7" rx="29.7" ry="24.7" transform="rotate(20 660.8 506.7)" fill="#7c9aa2" fill-opacity="0.4" stroke="#ffff00" stroke-width="1.2"/><ellipse cx="740.0" cy="525.3" rx="27.5" ry="26.6" fill="#7c9aa2" fill-opacity="0.4" stroke="#ffff00" stroke-width="1.2"/><ellipse cx="523.7" cy="533.6" rx="30.6" ry="23.2" transform="rotate(-20 523.7 533.6)" fill="#7c9aa2" fill-opacity="0.4" stroke="#ffff00" stroke-width="1.2"/><ellipse cx="457.4" cy="557.6" rx="25.3" ry="27.0" fill="#7c9aa2" fill-opacity="0.4" stroke="#ffff00" stroke-width="1.2"/><ellipse cx="501.6" cy="580.1" rx="26.2" ry="26.6" fill="#7c9aa2" fill-opacity="0.4" stroke="#ffff00" stroke-width="1.2"/><ellipse cx="706.9" cy="569.9" rx="32.9" ry="24.7" transform="rotate(10 706.9 569.9)" fill="#7c9aa2" fill-opacity="0.4" stroke="#ffff00" stroke-width="1.2"/><ellipse cx="440.3" cy="599.9" rx="27.9" ry="31.1" fill="#7c9aa2" fill-opacity="0.4" stroke="#ffff00" stroke-width="1.2"/><ellipse cx="592.2" cy="602.1" rx="26.9" ry="26.9" transform="rotate(60 592.2 602.1)" fill="#7c9aa2" fill-opacity="0.4" stroke="#ffff00" stroke-width="1.2"/><ellipse cx="673.5" cy="615.8" rx="28.5" ry="25.3" fill="#7c9aa2" fill-opacity="0.4" stroke="#ffff00" stroke-width="1.2"/><ellipse cx="780.8" cy="610.1" rx="27.5" ry="23.4" fill="#7c9aa2" fill-opacity="0.4" stroke="#ffff00" stroke-width="1.2"/><ellipse cx="742.9" cy="626.7" rx="31.5" ry="24.5" transform="rotate(25 742.9 626.7)" fill="#7c9aa2" fill-opacity="0.4" stroke="#ffff00" stroke-width="1.2"/><ellipse cx="554.8" cy="642.6" rx="26.6" ry="24.1" fill="#7c9aa2" fill-opacity="0.4" stroke="#ffff00" stroke-width="1.2"/><ellipse cx="656.9" cy="654.4" rx="28.5" ry="23.7" fill="#7c9aa2" fill-opacity="0.4" stroke="#ffff00" stroke-width="1.2"/><ellipse cx="701.8" cy="667.5" rx="31.3" ry="23.7" transform="rotate(80 701.8 667.5)" fill="#7c9aa2" fill-opacity="0.4" stroke="#ffff00" stroke-width="1.2"/><ellipse cx="739.8" cy="670.6" rx="30.2" ry="24.6" transform="rotate(-35 739.8 670.6)" fill="#7c9aa2" fill-opacity="0.4" stroke="#ffff00" stroke-width="1.2"/><ellipse cx="784.6" cy="680.2" rx="24.5" ry="32.4" fill="#7c9aa2" fill-opacity="0.4" stroke="#ffff00" stroke-width="1.2"/><ellipse cx="449.7" cy="684.0" rx="27.9" ry="28.5" fill="#7c9aa2" fill-opacity="0.4" stroke="#ffff00" stroke-width="1.2"/><ellipse cx="117.9" cy="9.1" rx="19.9" ry="21.1" fill="url(#nuc)" stroke="#ff1a00" stroke-width="1.3"/><ellipse cx="228.8" cy="-4.5" rx="16.3" ry="7.5" fill="url(#nuc)" stroke="#ff1a00" stroke-width="1.3"/><ellipse cx="237.9" cy="29.7" rx="20.5" ry="16.1" fill="url(#nuc)" stroke="#ff1a00" stroke-width="1.3"/><ellipse cx="19.9" cy="85.4" rx="27.0" ry="17.0" transform="rotate(-48 19.9 85.4)" fill="url(#nuc)" stroke="#ff1a00" stroke-width="1.3"/><ellipse cx="79.2" cy="74.7" rx="17.6" ry="16.3" fill="url(#nuc)" stroke="#ff1a00" stroke-width="1.3"/><ellipse cx="162.1" cy="74.4" rx="21.8" ry="14.9" transform="rotate(70 162.1 74.4)" fill="url(#nuc)" stroke="#ff1a00" stroke-width="1.3"/><ellipse cx="242.0" cy="76.6" rx="19.5" ry="15.7" fill="url(#nuc)" stroke="#ff1a00" stroke-width="1.3"/><ellipse cx="295.4" cy="59.6" rx="17.6" ry="19.4" fill="url(#nuc)" stroke="#ff1a00" stroke-width="1.3"/><ellipse cx="362.6" cy="65.0" rx="18.3" ry="13.9" transform="rotate(35 362.6 65.0)" fill="url(#nuc)" stroke="#ff1a00" stroke-width="1.3"/><ellipse cx="343.1" cy="99.6" rx="19.1" ry="17.1" transform="rotate(60 343.1 99.6)" fill="url(#nuc)" stroke="#ff1a00" stroke-width="1.3"/><ellipse cx="77.9" cy="131.2" rx="18.1" ry="20.6" fill="url(#nuc)" stroke="#ff1a00" stroke-width="1.3"/><ellipse cx="219.3" cy="135.5" rx="20.7" ry="18.9" fill="url(#nuc)" stroke="#ff1a00" stroke-width="1.3"/><ellipse cx="308.6" cy="139.7" rx="27.0" ry="18.0" transform="rotate(-20 308.6 139.7)" fill="url(#nuc)" stroke="#ff1a00" stroke-width="1.3"/><ellipse cx="390.3" cy="129.6" rx="17.0" ry="17.2" fill="url(#nuc)" stroke="#ff1a00" stroke-width="1.3"/><ellipse cx="42.1" cy="183.4" rx="18.2" ry="18.2" fill="url(#nuc)" stroke="#ff1a00" stroke-width="1.3"/><ellipse cx="117.3" cy="185.7" rx="17.2" ry="19.7" fill="url(#nuc)" stroke="#ff1a00" stroke-width="1.3"/><ellipse cx="202.4" cy="183.0" rx="17.6" ry="19.1" fill="url(#nuc)" stroke="#ff1a00" stroke-width="1.3"/><ellipse cx="267.1" cy="194.5" rx="17.0" ry="16.0" fill="url(#nuc)" stroke="#ff1a00" stroke-width="1.3"/><ellipse cx="350.1" cy="180.3" rx="18.5" ry="19.8" transform="rotate(60 350.1 180.3)" fill="url(#nuc)" stroke="#ff1a00" stroke-width="1.3"/><ellipse cx="0.6" cy="228.0" rx="15.7" ry="13.8" fill="url(#nuc)" stroke="#ff1a00" stroke-width="1.3"/><ellipse cx="167.2" cy="242.5" rx="15.1" ry="18.2" fill="url(#nuc)" stroke="#ff1a00" stroke-width="1.3"/><ellipse cx="270.2" cy="237.2" rx="18.9" ry="16.0" fill="url(#nuc)" stroke="#ff1a00" stroke-width="1.3"/><ellipse cx="72.6" cy="264.2" rx="12.8" ry="17.3" fill="url(#nuc)" stroke="#ff1a00" stroke-width="1.3"/><ellipse cx="115.3" cy="276.2" rx="19.2" ry="18.0" fill="url(#nuc)" stroke="#ff1a00" stroke-width="1.3"/><ellipse cx="191.7" cy="280.8" rx="17.0" ry="20.1" fill="url(#nuc)" stroke="#ff1a00" stroke-width="1.3"/><ellipse cx="265.2" cy="277.0" rx="8.8" ry="7.5" fill="url(#nuc)" stroke="#ff1a00" stroke-width="1.3"/><ellipse cx="336.0" cy="292.7" rx="22.3" ry="15.2" transform="rotate(-60 336.0 292.7)" fill="url(#nuc)" stroke="#ff1a00" stroke-width="1.3"/><ellipse cx="205.5" cy="326.7" rx="18.2" ry="18.2" fill="url(#nuc)" stroke="#ff1a00" stroke-width="1.3"/><ellipse cx="75.2" cy="340.5" rx="15.3" ry="19.5" fill="url(#nuc)" stroke="#ff1a00" stroke-width="1.3"/><ellipse cx="293.5" cy="344.3" rx="14.5" ry="18.2" fill="url(#nuc)" stroke="#ff1a00" stroke-width="1.3"/><ellipse cx="348.2" cy="-4.3" rx="11.3" ry="5.3" fill="url(#nuc)" stroke="#ff1a00" stroke-width="1.3"/><ellipse cx="423.9" cy="22.9" rx="21.9" ry="22.4" fill="url(#nuc)" stroke="#ff1a00" stroke-width="1.3"/><ellipse cx="552.1" cy="-4.5" rx="8.8" ry="7.5" fill="url(#nuc)" stroke="#ff1a00" stroke-width="1.3"/><ellipse cx="493.3" cy="48.0" rx="22.9" ry="19.8" transform="rotate(65 493.3 48.0)" fill="url(#nuc)" stroke="#ff1a00" stroke-width="1.3"/><ellipse cx="538.3" cy="31.9" rx="20.6" ry="17.5" transform="rotate(65 538.3 31.9)" fill="url(#nuc)" stroke="#ff1a00" stroke-width="1.3"/><ellipse cx="722.0" cy="30.4" rx="17.8" ry="17.3" fill="url(#nuc)" stroke="#ff1a00" stroke-width="1.3"/><ellipse cx="470.1" cy="81.2" rx="23.4" ry="15.9" transform="rotate(15 470.1 81.2)" fill="url(#nuc)" stroke="#ff1a00" stroke-width="1.3"/><ellipse cx="616.6" cy="55.2" rx="16.7" ry="11.9" fill="url(#nuc)" stroke="#ff1a00" stroke-width="1.3"/><ellipse cx="611.8" cy="79.7" rx="17.0" ry="13.8" fill="url(#nuc)" stroke="#ff1a00" stroke-width="1.3"/><ellipse cx="644.7" cy="81.6" rx="23.5" ry="16.0" transform="rotate(80 644.7 81.6)" fill="url(#nuc)" stroke="#ff1a00" stroke-width="1.3"/><ellipse cx="702.9" cy="69.4" rx="21.4" ry="13.4" transform="rotate(40 702.9 69.4)" fill="url(#nuc)" stroke="#ff1a00" stroke-width="1.3"/><ellipse cx="755.3" cy="68.8" rx="25.4" ry="18.3" transform="rotate(65 755.3 68.8)" fill="url(#nuc)" stroke="#ff1a00" stroke-width="1.3"/><ellipse cx="812.9" cy="41.4" rx="14.5" ry="19.5" fill="url(#nuc)" stroke="#ff1a00" stroke-width="1.3"/><ellipse cx="462.0" cy="141.9" rx="30.0" ry="20.0" transform="rotate(35 462.0 141.9)" fill="url(#nuc)" stroke="#ff1a00" stroke-width="1.3"/><ellipse cx="555.9" cy="132.1" rx="30.2" ry="20.5" transform="rotate(-30 555.9 132.1)" fill="url(#nuc)" stroke="#ff1a00" stroke-width="1.3"/><ellipse cx="668.4" cy="133.1" rx="20.7" ry="17.0" fill="url(#nuc)" stroke="#ff1a00" stroke-width="1.3"/><ellipse cx="720.5" cy="135.3" rx="22.6" ry="18.6" fill="url(#nuc)" stroke="#ff1a00" stroke-width="1.3"/><ellipse cx="764.5" cy="154.5" rx="18.1" ry="19.5" fill="url(#nuc)" stroke="#ff1a00" stroke-width="1.3"/><ellipse cx="804.7" cy="175.9" rx="17.6" ry="22.0" fill="url(#nuc)" stroke="#ff1a00" stroke-width="1.3"/><ellipse cx="658.7" cy="174.2" rx="20.4" ry="15.3" fill="url(#nuc)" stroke="#ff1a00" stroke-width="1.3"/><ellipse cx="723.0" cy="182.8" rx="21.9" ry="17.6" fill="url(#nuc)" stroke="#ff1a00" stroke-width="1.3"/><ellipse cx="519.4" cy="198.9" rx="24.7" ry="16.8" transform="rotate(-30 519.4 198.9)" fill="url(#nuc)" stroke="#ff1a00" stroke-width="1.3"/><ellipse cx="436.8" cy="218.6" rx="15.5" ry="17.0" fill="url(#nuc)" stroke="#ff1a00" stroke-width="1.3"/><ellipse cx="652.4" cy="221.1" rx="38.0" ry="19.0" transform="rotate(-35 652.4 221.1)" fill="url(#nuc)" stroke="#ff1a00" stroke-width="1.3"/><ellipse cx="533.9" cy="245.6" rx="18.2" ry="20.1" fill="url(#nuc)" stroke="#ff1a00" stroke-width="1.3"/><ellipse cx="677.8" cy="267.0" rx="21.4" ry="17.6" fill="url(#nuc)" stroke="#ff1a00" stroke-width="1.3"/><ellipse cx="747.5" cy="264.1" rx="18.2" ry="16.7" fill="url(#nuc)" stroke="#ff1a00" stroke-width="1.3"/><ellipse cx="451.2" cy="277.7" rx="18.0" ry="20.7" fill="url(#nuc)" stroke="#ff1a00" stroke-width="1.3"/><ellipse cx="619.0" cy="285.5" rx="20.4" ry="17.2" fill="url(#nuc)" stroke="#ff1a00" stroke-width="1.3"/><ellipse cx="505.2" cy="305.7" rx="18.5" ry="21.1" fill="url(#nuc)" stroke="#ff1a00" stroke-width="1.3"/><ellipse cx="671.2" cy="316.0" rx="23.9" ry="16.8" transform="rotate(-30 671.2 316.0)" fill="url(#nuc)" stroke="#ff1a00" stroke-width="1.3"/><ellipse cx="399.4" cy="328.6" rx="14.5" ry="21.4" fill="url(#nuc)" stroke="#ff1a00" stroke-width="1.3"/><ellipse cx="551.5" cy="330.5" rx="17.0" ry="19.5" fill="url(#nuc)" stroke="#ff1a00" stroke-width="1.3"/><ellipse cx="757.6" cy="335.5" rx="17.0" ry="14.5" fill="url(#nuc)" stroke="#ff1a00" stroke-width="1.3"/><ellipse cx="797.2" cy="329.8" rx="17.6" ry="20.1" fill="url(#nuc)" stroke="#ff1a00" stroke-width="1.3"/><ellipse cx="702.9" cy="-4.5" rx="13.8" ry="5.0" fill="url(#nuc)" stroke="#ff1a00" stroke-width="1.3"/><ellipse cx="120.5" cy="370.4" rx="23.0" ry="16.3" transform="rotate(20 120.5 370.4)" fill="url(#nuc)" stroke="#ff1a00" stroke-width="1.3"/><ellipse cx="222.8" cy="402.9" rx="25.0" ry="20.0" transform="rotate(-20 222.8 402.9)" fill="url(#nuc)" stroke="#ff1a00" stroke-width="1.3"/><ellipse cx="238.1" cy="429.7" rx="19.4" ry="15.3" fill="url(#nuc)" stroke="#ff1a00" stroke-width="1.3"/><ellipse cx="318.7" cy="402.7" rx="18.4" ry="21.4" fill="url(#nuc)" stroke="#ff1a00" stroke-width="1.3"/><ellipse cx="366.3" cy="426.8" rx="31.0" ry="19.0" transform="rotate(60 366.3 426.8)" fill="url(#nuc)" stroke="#ff1a00" stroke-width="1.3"/><ellipse cx="153.0" cy="419.9" rx="22.2" ry="15.1" transform="rotate(-70 153.0 419.9)" fill="url(#nuc)" stroke="#ff1a00" stroke-width="1.3"/><ellipse cx="95.9" cy="436.3" rx="19.4" ry="16.8" fill="url(#nuc)" stroke="#ff1a00" stroke-width="1.3"/><ellipse cx="325.7" cy="458.4" rx="17.2" ry="17.2" fill="url(#nuc)" stroke="#ff1a00" stroke-width="1.3"/><ellipse cx="49.7" cy="473.0" rx="19.1" ry="17.8" fill="url(#nuc)" stroke="#ff1a00" stroke-width="1.3"/><ellipse cx="9.6" cy="510.0" rx="19.8" ry="22.9" fill="url(#nuc)" stroke="#ff1a00" stroke-width="1.3"/><ellipse cx="232.0" cy="514.2" rx="15.3" ry="18.7" fill="url(#nuc)" stroke="#ff1a00" stroke-width="1.3"/><ellipse cx="366.8" cy="507.7" rx="17.0" ry="18.9" fill="url(#nuc)" stroke="#ff1a00" stroke-width="1.3"/><ellipse cx="76.1" cy="536.1" rx="17.0" ry="14.7" fill="url(#nuc)" stroke="#ff1a00" stroke-width="1.3"/><ellipse cx="141.9" cy="582.0" rx="23.8" ry="16.2" transform="rotate(-25 141.9 582.0)" fill="url(#nuc)" stroke="#ff1a00" stroke-width="1.3"/><ellipse cx="303.2" cy="580.1" rx="28.0" ry="19.0" transform="rotate(40 303.2 580.1)" fill="url(#nuc)" stroke="#ff1a00" stroke-width="1.3"/><ellipse cx="40.8" cy="628.8" rx="18.4" ry="18.1" fill="url(#nuc)" stroke="#ff1a00" stroke-width="1.3"/><ellipse cx="199.3" cy="639.4" rx="16.2" ry="19.8" fill="url(#nuc)" stroke="#ff1a00" stroke-width="1.3"/><ellipse cx="280.7" cy="648.3" rx="22.7" ry="15.9" fill="url(#nuc)" stroke="#ff1a00" stroke-width="1.3"/><ellipse cx="167.9" cy="665.2" rx="16.2" ry="14.9" fill="url(#nuc)" stroke="#ff1a00" stroke-width="1.3"/><ellipse cx="397.1" cy="649.6" rx="21.7" ry="15.0" transform="rotate(20 397.1 649.6)" fill="url(#nuc)" stroke="#ff1a00" stroke-width="1.3"/><ellipse cx="383.1" cy="684.0" rx="21.0" ry="21.0" transform="rotate(30 383.1 684.0)" fill="url(#nuc)" stroke="#ff1a00" stroke-width="1.3"/><ellipse cx="53.5" cy="697.4" rx="22.9" ry="12.7" fill="url(#nuc)" stroke="#ff1a00" stroke-width="1.3"/><ellipse cx="114.7" cy="694.9" rx="17.8" ry="15.3" fill="url(#nuc)" stroke="#ff1a00" stroke-width="1.3"/><ellipse cx="616.7" cy="353.2" rx="12.7" ry="15.3" fill="url(#nuc)" stroke="#ff1a00" stroke-width="1.3"/><ellipse cx="591.2" cy="366.6" rx="12.7" ry="12.1" fill="url(#nuc)" stroke="#ff1a00" stroke-width="1.3"/><ellipse cx="697.0" cy="359.6" rx="20.4" ry="14.0" fill="url(#nuc)" stroke="#ff1a00" stroke-width="1.3"/><ellipse cx="457.6" cy="376.1" rx="18.9" ry="17.3" fill="url(#nuc)" stroke="#ff1a00" stroke-width="1.3"/><ellipse cx="603.3" cy="390.8" rx="15.9" ry="14.7" fill="url(#nuc)" stroke="#ff1a00" stroke-width="1.3"/><ellipse cx="651.1" cy="388.6" rx="20.9" ry="17.8" transform="rotate(-60 651.1 388.6)" fill="url(#nuc)" stroke="#ff1a00" stroke-width="1.3"/><ellipse cx="776.1" cy="407.6" rx="22.1" ry="16.2" transform="rotate(-60 776.1 407.6)" fill="url(#nuc)" stroke="#ff1a00" stroke-width="1.3"/><ellipse cx="473.7" cy="423.3" rx="17.6" ry="20.4" fill="url(#nuc)" stroke="#ff1a00" stroke-width="1.3"/><ellipse cx="720.9" cy="433.5" rx="16.2" ry="17.8" fill="url(#nuc)" stroke="#ff1a00" stroke-width="1.3"/><ellipse cx="573.0" cy="449.1" rx="18.7" ry="13.8" fill="url(#nuc)" stroke="#ff1a00" stroke-width="1.3"/><ellipse cx="683.0" cy="449.5" rx="17.8" ry="18.5" fill="url(#nuc)" stroke="#ff1a00" stroke-width="1.3"/><ellipse cx="741.9" cy="459.9" rx="18.1" ry="16.2" fill="url(#nuc)" stroke="#ff1a00" stroke-width="1.3"/><ellipse cx="465.9" cy="481.6" rx="21.7" ry="17.6" transform="rotate(60 465.9 481.6)" fill="url(#nuc)" stroke="#ff1a00" stroke-width="1.3"/><ellipse cx="571.1" cy="482.6" rx="20.7" ry="19.8" fill="url(#nuc)" stroke="#ff1a00" stroke-width="1.3"/><ellipse cx="771.0" cy="486.2" rx="17.8" ry="18.7" fill="url(#nuc)" stroke="#ff1a00" stroke-width="1.3"/><ellipse cx="660.8" cy="506.7" rx="22.2" ry="17.2" transform="rotate(20 660.8 506.7)" fill="url(#nuc)" stroke="#ff1a00" stroke-width="1.3"/><ellipse cx="740.0" cy="525.3" rx="20.0" ry="19.1" fill="url(#nuc)" stroke="#ff1a00" stroke-width="1.3"/><ellipse cx="523.7" cy="533.6" rx="23.1" ry="15.7" transform="rotate(-20 523.7 533.6)" fill="url(#nuc)" stroke="#ff1a00" stroke-width="1.3"/><ellipse cx="457.4" cy="557.6" rx="17.8" ry="19.5" fill="url(#nuc)" stroke="#ff1a00" stroke-width="1.3"/><ellipse cx="501.6" cy="580.1" rx="18.7" ry="19.1" fill="url(#nuc)" stroke="#ff1a00" stroke-width="1.3"/><ellipse cx="706.9" cy="569.9" rx="25.4" ry="17.2" transform="rotate(10 706.9 569.9)" fill="url(#nuc)" stroke="#ff1a00" stroke-width="1.3"/><ellipse cx="440.3" cy="599.9" rx="20.4" ry="23.6" fill="url(#nuc)" stroke="#ff1a00" stroke-width="1.3"/><ellipse cx="592.2" cy="602.1" rx="19.4" ry="19.4" transform="rotate(60 592.2 602.1)" fill="url(#nuc)" stroke="#ff1a00" stroke-width="1.3"/><ellipse cx="673.5" cy="615.8" rx="21.0" ry="17.8" fill="url(#nuc)" stroke="#ff1a00" stroke-width="1.3"/><ellipse cx="780.8" cy="610.1" rx="20.0" ry="15.9" fill="url(#nuc)" stroke="#ff1a00" stroke-width="1.3"/><ellipse cx="742.9" cy="626.7" rx="24.0" ry="17.0" transform="rotate(25 742.9 626.7)" fill="url(#nuc)" stroke="#ff1a00" stroke-width="1.3"/><ellipse cx="554.8" cy="642.6" rx="19.1" ry="16.6" fill="url(#nuc)" stroke="#ff1a00" stroke-width="1.3"/><ellipse cx="656.9" cy="654.4" rx="21.0" ry="16.2" fill="url(#nuc)" stroke="#ff1a00" stroke-width="1.3"/><ellipse cx="701.8" cy="667.5" rx="23.8" ry="16.2" transform="rotate(80 701.8 667.5)" fill="url(#nuc)" stroke="#ff1a00" stroke-width="1.3"/><ellipse cx="739.8" cy="670.6" rx="22.7" ry="17.1" transform="rotate(-35 739.8 670.6)" fill="url(#nuc)" stroke="#ff1a00" stroke-width="1.3"/><ellipse cx="784.6" cy="680.2" rx="17.0" ry="24.9" fill="url(#nuc)" stroke="#ff1a00" stroke-width="1.3"/><ellipse cx="449.7" cy="684.0" rx="20.4" ry="21.0" fill="url(#nuc)" stroke="#ff1a00" stroke-width="1.3"/><text x="125.4" y="9.0" text-anchor="middle" font-size="11.5" font-family="Liberation Sans" fill="#fff" stroke="#111" stroke-width="2.2" paint-order="stroke" stroke-linejoin="round">49</text><text x="235.0" y="9.0" text-anchor="middle" font-size="11.5" font-family="Liberation Sans" fill="#fff" stroke="#111" stroke-width="2.2" paint-order="stroke" stroke-linejoin="round">45</text><text x="245.7" y="22.6" text-anchor="middle" font-size="11.5" font-family="Liberation Sans" fill="#fff" stroke="#111" stroke-width="2.2" paint-order="stroke" stroke-linejoin="round">57</text><text x="29.3" y="71.1" text-anchor="middle" font-size="11.5" font-family="Liberation Sans" fill="#fff" stroke="#111" stroke-width="2.2" paint-order="stroke" stroke-linejoin="round">72</text><text x="85.9" y="67.3" text-anchor="middle" font-size="11.5" font-family="Liberation Sans" fill="#fff" stroke="#111" stroke-width="2.2" paint-order="stroke" stroke-linejoin="round">70</text><text x="168.2" y="62.3" text-anchor="middle" font-size="11.5" font-family="Liberation Sans" fill="#fff" stroke="#111" stroke-width="2.2" paint-order="stroke" stroke-linejoin="round">68</text><text x="249.4" y="69.8" text-anchor="middle" font-size="11.5" font-family="Liberation Sans" fill="#fff" stroke="#111" stroke-width="2.2" paint-order="stroke" stroke-linejoin="round">71</text><text x="302.1" y="49.2" text-anchor="middle" font-size="11.5" font-family="Liberation Sans" fill="#fff" stroke="#111" stroke-width="2.2" paint-order="stroke" stroke-linejoin="round">61</text><text x="369.1" y="58.5" text-anchor="middle" font-size="11.5" font-family="Liberation Sans" fill="#fff" stroke="#111" stroke-width="2.2" paint-order="stroke" stroke-linejoin="round">66</text><text x="349.8" y="90.0" text-anchor="middle" font-size="11.5" font-family="Liberation Sans" fill="#fff" stroke="#111" stroke-width="2.2" paint-order="stroke" stroke-linejoin="round">77</text><text x="84.8" y="119.6" text-anchor="middle" font-size="11.5" font-family="Liberation Sans" fill="#fff" stroke="#111" stroke-width="2.2" paint-order="stroke" stroke-linejoin="round">79</text><text x="227.2" y="125.7" text-anchor="middle" font-size="11.5" font-family="Liberation Sans" fill="#fff" stroke="#111" stroke-width="2.2" paint-order="stroke" stroke-linejoin="round">83</text><text x="318.8" y="128.2" text-anchor="middle" font-size="11.5" font-family="Liberation Sans" fill="#fff" stroke="#111" stroke-width="2.2" paint-order="stroke" stroke-linejoin="round">87</text><text x="396.7" y="121.4" text-anchor="middle" font-size="11.5" font-family="Liberation Sans" fill="#fff" stroke="#111" stroke-width="2.2" paint-order="stroke" stroke-linejoin="round">81</text><text x="49.0" y="174.2" text-anchor="middle" font-size="11.5" font-family="Liberation Sans" fill="#fff" stroke="#111" stroke-width="2.2" paint-order="stroke" stroke-linejoin="round">97</text><text x="123.8" y="174.9" text-anchor="middle" font-size="11.5" font-family="Liberation Sans" fill="#fff" stroke="#111" stroke-width="2.2" paint-order="stroke" stroke-linejoin="round">98</text><text x="209.0" y="172.9" text-anchor="middle" font-size="11.5" font-family="Liberation Sans" fill="#fff" stroke="#111" stroke-width="2.2" paint-order="stroke" stroke-linejoin="round">96</text><text x="273.5" y="187.5" text-anchor="middle" font-size="11.5" font-family="Liberation Sans" fill="#fff" stroke="#111" stroke-width="2.2" paint-order="stroke" stroke-linejoin="round">101</text><text x="357.5" y="170.4" text-anchor="middle" font-size="11.5" font-family="Liberation Sans" fill="#fff" stroke="#111" stroke-width="2.2" paint-order="stroke" stroke-linejoin="round">94</text><text x="6.6" y="223.2" text-anchor="middle" font-size="11.5" font-family="Liberation Sans" fill="#fff" stroke="#111" stroke-width="2.2" paint-order="stroke" stroke-linejoin="round">103</text><text x="172.9" y="233.2" text-anchor="middle" font-size="11.5" font-family="Liberation Sans" fill="#fff" stroke="#111" stroke-width="2.2" paint-order="stroke" stroke-linejoin="round">110</text><text x="277.4" y="230.2" text-anchor="middle" font-size="11.5" font-family="Liberation Sans" fill="#fff" stroke="#111" stroke-width="2.2" paint-order="stroke" stroke-linejoin="round">109</text><text x="77.5" y="255.9" text-anchor="middle" font-size="11.5" font-family="Liberation Sans" fill="#fff" stroke="#111" stroke-width="2.2" paint-order="stroke" stroke-linejoin="round">116</text><text x="122.6" y="267.2" text-anchor="middle" font-size="11.5" font-family="Liberation Sans" fill="#fff" stroke="#111" stroke-width="2.2" paint-order="stroke" stroke-linejoin="round">121</text><text x="198.1" y="269.7" text-anchor="middle" font-size="11.5" font-family="Liberation Sans" fill="#fff" stroke="#111" stroke-width="2.2" paint-order="stroke" stroke-linejoin="round">122</text><text x="268.6" y="278.5" text-anchor="middle" font-size="11.5" font-family="Liberation Sans" fill="#fff" stroke="#111" stroke-width="2.2" paint-order="stroke" stroke-linejoin="round">125</text><text x="342.5" y="281.0" text-anchor="middle" font-size="11.5" font-family="Liberation Sans" fill="#fff" stroke="#111" stroke-width="2.2" paint-order="stroke" stroke-linejoin="round">127</text><text x="212.4" y="317.5" text-anchor="middle" font-size="11.5" font-family="Liberation Sans" fill="#fff" stroke="#111" stroke-width="2.2" paint-order="stroke" stroke-linejoin="round">134</text><text x="81.0" y="330.0" text-anchor="middle" font-size="11.5" font-family="Liberation Sans" fill="#fff" stroke="#111" stroke-width="2.2" paint-order="stroke" stroke-linejoin="round">140</text><text x="299.0" y="335.1" text-anchor="middle" font-size="11.5" font-family="Liberation Sans" fill="#fff" stroke="#111" stroke-width="2.2" paint-order="stroke" stroke-linejoin="round">142</text><text x="432.2" y="9.5" text-anchor="middle" font-size="11.5" font-family="Liberation Sans" fill="#fff" stroke="#111" stroke-width="2.2" paint-order="stroke" stroke-linejoin="round">52</text><text x="555.4" y="9.0" text-anchor="middle" font-size="11.5" font-family="Liberation Sans" fill="#fff" stroke="#111" stroke-width="2.2" paint-order="stroke" stroke-linejoin="round">38</text><text x="501.0" y="34.7" text-anchor="middle" font-size="11.5" font-family="Liberation Sans" fill="#fff" stroke="#111" stroke-width="2.2" paint-order="stroke" stroke-linejoin="round">59</text><text x="545.1" y="20.8" text-anchor="middle" font-size="11.5" font-family="Liberation Sans" fill="#fff" stroke="#111" stroke-width="2.2" paint-order="stroke" stroke-linejoin="round">55</text><text x="728.8" y="22.1" text-anchor="middle" font-size="11.5" font-family="Liberation Sans" fill="#fff" stroke="#111" stroke-width="2.2" paint-order="stroke" stroke-linejoin="round">56</text><text x="478.8" y="74.9" text-anchor="middle" font-size="11.5" font-family="Liberation Sans" fill="#fff" stroke="#111" stroke-width="2.2" paint-order="stroke" stroke-linejoin="round">73</text><text x="622.9" y="52.2" text-anchor="middle" font-size="11.5" font-family="Liberation Sans" fill="#fff" stroke="#111" stroke-width="2.2" paint-order="stroke" stroke-linejoin="round">63</text><text x="618.2" y="74.9" text-anchor="middle" font-size="11.5" font-family="Liberation Sans" fill="#fff" stroke="#111" stroke-width="2.2" paint-order="stroke" stroke-linejoin="round">74</text><text x="650.3" y="67.3" text-anchor="middle" font-size="11.5" font-family="Liberation Sans" fill="#fff" stroke="#111" stroke-width="2.2" paint-order="stroke" stroke-linejoin="round">69</text><text x="711.0" y="59.8" text-anchor="middle" font-size="11.5" font-family="Liberation Sans" fill="#fff" stroke="#111" stroke-width="2.2" paint-order="stroke" stroke-linejoin="round">67</text><text x="762.8" y="53.5" text-anchor="middle" font-size="11.5" font-family="Liberation Sans" fill="#fff" stroke="#111" stroke-width="2.2" paint-order="stroke" stroke-linejoin="round">64</text><text x="472.6" y="128.9" text-anchor="middle" font-size="11.5" font-family="Liberation Sans" fill="#fff" stroke="#111" stroke-width="2.2" paint-order="stroke" stroke-linejoin="round">86</text><text x="566.2" y="121.4" text-anchor="middle" font-size="11.5" font-family="Liberation Sans" fill="#fff" stroke="#111" stroke-width="2.2" paint-order="stroke" stroke-linejoin="round">80</text><text x="676.2" y="125.1" text-anchor="middle" font-size="11.5" font-family="Liberation Sans" fill="#fff" stroke="#111" stroke-width="2.2" paint-order="stroke" stroke-linejoin="round">82</text><text x="729.1" y="125.7" text-anchor="middle" font-size="11.5" font-family="Liberation Sans" fill="#fff" stroke="#111" stroke-width="2.2" paint-order="stroke" stroke-linejoin="round">84</text><text x="771.4" y="144.0" text-anchor="middle" font-size="11.5" font-family="Liberation Sans" fill="#fff" stroke="#111" stroke-width="2.2" paint-order="stroke" stroke-linejoin="round">90</text><text x="666.4" y="167.9" text-anchor="middle" font-size="11.5" font-family="Liberation Sans" fill="#fff" stroke="#111" stroke-width="2.2" paint-order="stroke" stroke-linejoin="round">95</text><text x="731.3" y="174.2" text-anchor="middle" font-size="11.5" font-family="Liberation Sans" fill="#fff" stroke="#111" stroke-width="2.2" paint-order="stroke" stroke-linejoin="round">99</text><text x="528.0" y="190.0" text-anchor="middle" font-size="11.5" font-family="Liberation Sans" fill="#fff" stroke="#111" stroke-width="2.2" paint-order="stroke" stroke-linejoin="round">102</text><text x="442.7" y="210.6" text-anchor="middle" font-size="11.5" font-family="Liberation Sans" fill="#fff" stroke="#111" stroke-width="2.2" paint-order="stroke" stroke-linejoin="round">107</text><text x="665.2" y="205.6" text-anchor="middle" font-size="11.5" font-family="Liberation Sans" fill="#fff" stroke="#111" stroke-width="2.2" paint-order="stroke" stroke-linejoin="round">106</text><text x="540.8" y="234.5" text-anchor="middle" font-size="11.5" font-family="Liberation Sans" fill="#fff" stroke="#111" stroke-width="2.2" paint-order="stroke" stroke-linejoin="round">111</text><text x="685.9" y="258.4" text-anchor="middle" font-size="11.5" font-family="Liberation Sans" fill="#fff" stroke="#111" stroke-width="2.2" paint-order="stroke" stroke-linejoin="round">118</text><text x="754.5" y="256.4" text-anchor="middle" font-size="11.5" font-family="Liberation Sans" fill="#fff" stroke="#111" stroke-width="2.2" paint-order="stroke" stroke-linejoin="round">117</text><text x="458.0" y="265.9" text-anchor="middle" font-size="11.5" font-family="Liberation Sans" fill="#fff" stroke="#111" stroke-width="2.2" paint-order="stroke" stroke-linejoin="round">120</text><text x="626.7" y="277.2" text-anchor="middle" font-size="11.5" font-family="Liberation Sans" fill="#fff" stroke="#111" stroke-width="2.2" paint-order="stroke" stroke-linejoin="round">124</text><text x="512.2" y="293.6" text-anchor="middle" font-size="11.5" font-family="Liberation Sans" fill="#fff" stroke="#111" stroke-width="2.2" paint-order="stroke" stroke-linejoin="round">131</text><text x="679.7" y="306.1" text-anchor="middle" font-size="11.5" font-family="Liberation Sans" fill="#fff" stroke="#111" stroke-width="2.2" paint-order="stroke" stroke-linejoin="round">133</text><text x="404.9" y="316.2" text-anchor="middle" font-size="11.5" font-family="Liberation Sans" fill="#fff" stroke="#111" stroke-width="2.2" paint-order="stroke" stroke-linejoin="round">135</text><text x="557.9" y="320.0" text-anchor="middle" font-size="11.5" font-family="Liberation Sans" fill="#fff" stroke="#111" stroke-width="2.2" paint-order="stroke" stroke-linejoin="round">137</text><text x="764.0" y="330.0" text-anchor="middle" font-size="11.5" font-family="Liberation Sans" fill="#fff" stroke="#111" stroke-width="2.2" paint-order="stroke" stroke-linejoin="round">139</text><text x="129.0" y="362.2" text-anchor="middle" font-size="11.5" font-family="Liberation Sans" fill="#fff" stroke="#111" stroke-width="2.2" paint-order="stroke" stroke-linejoin="round">151</text><text x="232.0" y="389.0" text-anchor="middle" font-size="11.5" font-family="Liberation Sans" fill="#fff" stroke="#111" stroke-width="2.2" paint-order="stroke" stroke-linejoin="round">157</text><text x="245.5" y="423.4" text-anchor="middle" font-size="11.5" font-family="Liberation Sans" fill="#fff" stroke="#111" stroke-width="2.2" paint-order="stroke" stroke-linejoin="round">166</text><text x="325.7" y="390.2" text-anchor="middle" font-size="11.5" font-family="Liberation Sans" fill="#fff" stroke="#111" stroke-width="2.2" paint-order="stroke" stroke-linejoin="round">159</text><text x="375.1" y="406.1" text-anchor="middle" font-size="11.5" font-family="Liberation Sans" fill="#fff" stroke="#111" stroke-width="2.2" paint-order="stroke" stroke-linejoin="round">162</text><text x="158.3" y="407.6" text-anchor="middle" font-size="11.5" font-family="Liberation Sans" fill="#fff" stroke="#111" stroke-width="2.2" paint-order="stroke" stroke-linejoin="round">163</text><text x="103.2" y="428.5" text-anchor="middle" font-size="11.5" font-family="Liberation Sans" fill="#fff" stroke="#111" stroke-width="2.2" paint-order="stroke" stroke-linejoin="round">169</text><text x="332.3" y="450.2" text-anchor="middle" font-size="11.5" font-family="Liberation Sans" fill="#fff" stroke="#111" stroke-width="2.2" paint-order="stroke" stroke-linejoin="round">173</text><text x="57.0" y="464.2" text-anchor="middle" font-size="11.5" font-family="Liberation Sans" fill="#fff" stroke="#111" stroke-width="2.2" paint-order="stroke" stroke-linejoin="round">177</text><text x="17.1" y="496.1" text-anchor="middle" font-size="11.5" font-family="Liberation Sans" fill="#fff" stroke="#111" stroke-width="2.2" paint-order="stroke" stroke-linejoin="round">182</text><text x="237.8" y="504.5" text-anchor="middle" font-size="11.5" font-family="Liberation Sans" fill="#fff" stroke="#111" stroke-width="2.2" paint-order="stroke" stroke-linejoin="round">187</text><text x="373.2" y="497.8" text-anchor="middle" font-size="11.5" font-family="Liberation Sans" fill="#fff" stroke="#111" stroke-width="2.2" paint-order="stroke" stroke-linejoin="round">184</text><text x="82.6" y="530.5" text-anchor="middle" font-size="11.5" font-family="Liberation Sans" fill="#fff" stroke="#111" stroke-width="2.2" paint-order="stroke" stroke-linejoin="round">193</text><text x="150.5" y="573.8" text-anchor="middle" font-size="11.5" font-family="Liberation Sans" fill="#fff" stroke="#111" stroke-width="2.2" paint-order="stroke" stroke-linejoin="round">203</text><text x="313.9" y="565.7" text-anchor="middle" font-size="11.5" font-family="Liberation Sans" fill="#fff" stroke="#111" stroke-width="2.2" paint-order="stroke" stroke-linejoin="round">200</text><text x="47.8" y="619.7" text-anchor="middle" font-size="11.5" font-family="Liberation Sans" fill="#fff" stroke="#111" stroke-width="2.2" paint-order="stroke" stroke-linejoin="round">213</text><text x="205.4" y="628.6" text-anchor="middle" font-size="11.5" font-family="Liberation Sans" fill="#fff" stroke="#111" stroke-width="2.2" paint-order="stroke" stroke-linejoin="round">214</text><text x="289.3" y="641.4" text-anchor="middle" font-size="11.5" font-family="Liberation Sans" fill="#fff" stroke="#111" stroke-width="2.2" paint-order="stroke" stroke-linejoin="round">218</text><text x="174.1" y="659.2" text-anchor="middle" font-size="11.5" font-family="Liberation Sans" fill="#fff" stroke="#111" stroke-width="2.2" paint-order="stroke" stroke-linejoin="round">223</text><text x="405.1" y="642.7" text-anchor="middle" font-size="11.5" font-family="Liberation Sans" fill="#fff" stroke="#111" stroke-width="2.2" paint-order="stroke" stroke-linejoin="round">219</text><text x="391.1" y="672.0" text-anchor="middle" font-size="11.5" font-family="Liberation Sans" fill="#fff" stroke="#111" stroke-width="2.2" paint-order="stroke" stroke-linejoin="round">229</text><text x="62.3" y="693.7" text-anchor="middle" font-size="11.5" font-family="Liberation Sans" fill="#fff" stroke="#111" stroke-width="2.2" paint-order="stroke" stroke-linejoin="round">234</text><text x="121.5" y="688.6" text-anchor="middle" font-size="11.5" font-family="Liberation Sans" fill="#fff" stroke="#111" stroke-width="2.2" paint-order="stroke" stroke-linejoin="round">233</text><text x="621.6" y="346.9" text-anchor="middle" font-size="11.5" font-family="Liberation Sans" fill="#fff" stroke="#111" stroke-width="2.2" paint-order="stroke" stroke-linejoin="round">144</text><text x="596.1" y="363.5" text-anchor="middle" font-size="11.5" font-family="Liberation Sans" fill="#fff" stroke="#111" stroke-width="2.2" paint-order="stroke" stroke-linejoin="round">150</text><text x="704.8" y="354.5" text-anchor="middle" font-size="11.5" font-family="Liberation Sans" fill="#fff" stroke="#111" stroke-width="2.2" paint-order="stroke" stroke-linejoin="round">146</text><text x="464.8" y="367.8" text-anchor="middle" font-size="11.5" font-family="Liberation Sans" fill="#fff" stroke="#111" stroke-width="2.2" paint-order="stroke" stroke-linejoin="round">153</text><text x="609.4" y="385.1" text-anchor="middle" font-size="11.5" font-family="Liberation Sans" fill="#fff" stroke="#111" stroke-width="2.2" paint-order="stroke" stroke-linejoin="round">158</text><text x="658.2" y="377.5" text-anchor="middle" font-size="11.5" font-family="Liberation Sans" fill="#fff" stroke="#111" stroke-width="2.2" paint-order="stroke" stroke-linejoin="round">154</text><text x="782.9" y="395.9" text-anchor="middle" font-size="11.5" font-family="Liberation Sans" fill="#fff" stroke="#111" stroke-width="2.2" paint-order="stroke" stroke-linejoin="round">160</text><text x="480.4" y="411.9" text-anchor="middle" font-size="11.5" font-family="Liberation Sans" fill="#fff" stroke="#111" stroke-width="2.2" paint-order="stroke" stroke-linejoin="round">164</text><text x="727.0" y="424.7" text-anchor="middle" font-size="11.5" font-family="Liberation Sans" fill="#fff" stroke="#111" stroke-width="2.2" paint-order="stroke" stroke-linejoin="round">168</text><text x="580.1" y="444.3" text-anchor="middle" font-size="11.5" font-family="Liberation Sans" fill="#fff" stroke="#111" stroke-width="2.2" paint-order="stroke" stroke-linejoin="round">172</text><text x="689.8" y="440.0" text-anchor="middle" font-size="11.5" font-family="Liberation Sans" fill="#fff" stroke="#111" stroke-width="2.2" paint-order="stroke" stroke-linejoin="round">171</text><text x="748.8" y="452.7" text-anchor="middle" font-size="11.5" font-family="Liberation Sans" fill="#fff" stroke="#111" stroke-width="2.2" paint-order="stroke" stroke-linejoin="round">174</text><text x="473.0" y="469.8" text-anchor="middle" font-size="11.5" font-family="Liberation Sans" fill="#fff" stroke="#111" stroke-width="2.2" paint-order="stroke" stroke-linejoin="round">178</text><text x="578.9" y="471.8" text-anchor="middle" font-size="11.5" font-family="Liberation Sans" fill="#fff" stroke="#111" stroke-width="2.2" paint-order="stroke" stroke-linejoin="round">181</text><text x="777.8" y="476.4" text-anchor="middle" font-size="11.5" font-family="Liberation Sans" fill="#fff" stroke="#111" stroke-width="2.2" paint-order="stroke" stroke-linejoin="round">180</text><text x="669.1" y="497.8" text-anchor="middle" font-size="11.5" font-family="Liberation Sans" fill="#fff" stroke="#111" stroke-width="2.2" paint-order="stroke" stroke-linejoin="round">185</text><text x="747.6" y="515.2" text-anchor="middle" font-size="11.5" font-family="Liberation Sans" fill="#fff" stroke="#111" stroke-width="2.2" paint-order="stroke" stroke-linejoin="round">189</text><text x="532.1" y="527.9" text-anchor="middle" font-size="11.5" font-family="Liberation Sans" fill="#fff" stroke="#111" stroke-width="2.2" paint-order="stroke" stroke-linejoin="round">192</text><text x="464.2" y="547.1" text-anchor="middle" font-size="11.5" font-family="Liberation Sans" fill="#fff" stroke="#111" stroke-width="2.2" paint-order="stroke" stroke-linejoin="round">195</text><text x="508.7" y="570.0" text-anchor="middle" font-size="11.5" font-family="Liberation Sans" fill="#fff" stroke="#111" stroke-width="2.2" paint-order="stroke" stroke-linejoin="round">201</text><text x="716.4" y="563.6" text-anchor="middle" font-size="11.5" font-family="Liberation Sans" fill="#fff" stroke="#111" stroke-width="2.2" paint-order="stroke" stroke-linejoin="round">199</text><text x="448.0" y="585.3" text-anchor="middle" font-size="11.5" font-family="Liberation Sans" fill="#fff" stroke="#111" stroke-width="2.2" paint-order="stroke" stroke-linejoin="round">204</text><text x="599.6" y="591.7" text-anchor="middle" font-size="11.5" font-family="Liberation Sans" fill="#fff" stroke="#111" stroke-width="2.2" paint-order="stroke" stroke-linejoin="round">206</text><text x="681.5" y="607.0" text-anchor="middle" font-size="11.5" font-family="Liberation Sans" fill="#fff" stroke="#111" stroke-width="2.2" paint-order="stroke" stroke-linejoin="round">209</text><text x="788.4" y="603.1" text-anchor="middle" font-size="11.5" font-family="Liberation Sans" fill="#fff" stroke="#111" stroke-width="2.2" paint-order="stroke" stroke-linejoin="round">208</text><text x="751.7" y="617.2" text-anchor="middle" font-size="11.5" font-family="Liberation Sans" fill="#fff" stroke="#111" stroke-width="2.2" paint-order="stroke" stroke-linejoin="round">211</text><text x="562.0" y="635.0" text-anchor="middle" font-size="11.5" font-family="Liberation Sans" fill="#fff" stroke="#111" stroke-width="2.2" paint-order="stroke" stroke-linejoin="round">216</text><text x="664.9" y="647.3" text-anchor="middle" font-size="11.5" font-family="Liberation Sans" fill="#fff" stroke="#111" stroke-width="2.2" paint-order="stroke" stroke-linejoin="round">221</text><text x="707.7" y="652.9" text-anchor="middle" font-size="11.5" font-family="Liberation Sans" fill="#fff" stroke="#111" stroke-width="2.2" paint-order="stroke" stroke-linejoin="round">222</text><text x="747.7" y="660.5" text-anchor="middle" font-size="11.5" font-family="Liberation Sans" fill="#fff" stroke="#111" stroke-width="2.2" paint-order="stroke" stroke-linejoin="round">225</text><text x="791.1" y="664.3" text-anchor="middle" font-size="11.5" font-family="Liberation Sans" fill="#fff" stroke="#111" stroke-width="2.2" paint-order="stroke" stroke-linejoin="round">226</text><text x="457.5" y="672.0" text-anchor="middle" font-size="11.5" font-family="Liberation Sans" fill="#fff" stroke="#111" stroke-width="2.2" paint-order="stroke" stroke-linejoin="round">230</text></g></svg>
<div style="left:1330px;top:744px;width:146px;height:49px;background:rgba(236,236,236,0.93);"></div>
<div style="left:1335px;top:748.5px;height:15px;line-height:15px;font-size:10.8px;color:#111;font-weight:normal;white-space:pre;">[2134, 1680]</div>
<div style="left:1335px;top:761.5px;height:15px;line-height:15px;font-size:10.8px;color:#111;font-weight:normal;white-space:pre;">Intensity: (1337, 255, 1251)</div>
<div style="left:1335px;top:774.5px;height:15px;line-height:15px;font-size:10.8px;color:#111;font-weight:normal;white-space:pre;">Ring#221</div>
<div style="left:1330px;top:793px;width:809px;height:99px;background:#d4d4d4;"></div>
<svg style="left:0px;top:0px;" width="2140" height="900" viewBox="0 0 2140 900"><defs><linearGradient id="allg" x1="0" x2="0" y1="0" y2="1"><stop offset="0" stop-color="#b3ace0"/><stop offset="1" stop-color="#b3dbb0"/></linearGradient></defs><rect x="1339.5" y="805.5" width="11" height="11" fill="url(#allg)" stroke="#777" stroke-width="1"/><line x1="1376.5" y1="796" x2="1376.5" y2="826" stroke="#a8a8a8"/><rect x="1383.5" y="805.5" width="11" height="11" fill="#c8c8c8" stroke="#777" stroke-width="1"/><line x1="1383.0" y1="819" x2="1421" y2="819" stroke="#c0c0c0" stroke-width="2"/><rect x="1429.5" y="805.5" width="11" height="11" fill="#b2aae2" stroke="#777" stroke-width="1"/><line x1="1429.0" y1="819" x2="1488" y2="819" stroke="#a9a0e0" stroke-width="2"/><rect x="1496.5" y="805.5" width="11" height="11" fill="#b2dcaa" stroke="#777" stroke-width="1"/><line x1="1496.0" y1="819" x2="1560" y2="819" stroke="#aad8a4" stroke-width="2"/><line x1="1729.5" y1="796" x2="1729.5" y2="826" stroke="#a8a8a8"/><line x1="1786.5" y1="796" x2="1786.5" y2="826" stroke="#a8a8a8"/><circle cx="1999" cy="810.6" r="5.5" fill="#a9c9e3" stroke="#999" stroke-width="0.8"/><circle cx="2019" cy="810.6" r="5.5" fill="#dcd9a0" stroke="#999" stroke-width="0.8"/><circle cx="2038.8" cy="810.6" r="5.5" fill="#a9bde3" stroke="#999" stroke-width="0.8"/><circle cx="2058.7" cy="810.6" r="5.5" fill="#a9dcc8" stroke="#999" stroke-width="0.8"/><circle cx="2078.6" cy="810.6" r="5.5" fill="#dcdca0" stroke="#999" stroke-width="0.8"/><circle cx="2098.6" cy="810.6" r="5.5" fill="#e3a9a9" stroke="#999" stroke-width="0.8"/><line x1="2073" y1="819" x2="2084" y2="819" stroke="#dcdc90" stroke-width="1.5"/><line x1="2093" y1="819" x2="2104" y2="819" stroke="#e89a9a" stroke-width="1.5"/><rect x="2119" y="801.5" width="4" height="4" transform="rotate(0 2121 810.6)" fill="#333"/><rect x="2119" y="801.5" width="4" height="4" transform="rotate(45 2121 810.6)" fill="#333"/><rect x="2119" y="801.5" width="4" height="4" transform="rotate(90 2121 810.6)" fill="#333"/><rect x="2119" y="801.5" width="4" height="4" transform="rotate(135 2121 810.6)" fill="#333"/><rect x="2119" y="801.5" width="4" height="4" transform="rotate(180 2121 810.6)" fill="#333"/><rect x="2119" y="801.5" width="4" height="4" transform="rotate(225 2121 810.6)" fill="#333"/><rect x="2119" y="801.5" width="4" height="4" transform="rotate(270 2121 810.6)" fill="#333"/><rect x="2119" y="801.5" width="4" height="4" transform="rotate(315 2121 810.6)" fill="#333"/><circle cx="2121" cy="810.6" r="6.5" fill="#333"/><circle cx="2121" cy="810.6" r="2.5" fill="#d4d4d4"/><rect x="1361.5" y="846.5" width="633" height="26.5" rx="3" fill="#fcfcfc" stroke="#a0a0a0"/><path d="M1353 856 L1357.5 860.5 L1353 865 Z" fill="#333"/><rect x="1376.6" y="852" width="3.4" height="16" fill="#e4e4e4"/><rect x="1382.3" y="852" width="3.4" height="16" fill="#e4e4e4"/><rect x="1387.9" y="852" width="3.4" height="16" fill="#e4e4e4"/><rect x="1393.6" y="852" width="3.4" height="16" fill="#e4e4e4"/><rect x="1399.3" y="852" width="3.4" height="16" fill="#e4e4e4"/><rect x="1404.9" y="852" width="3.4" height="16" fill="#e4e4e4"/><rect x="1410.6" y="852" width="3.4" height="16" fill="#e4e4e4"/><rect x="1416.3" y="852" width="3.4" height="16" fill="#e4e4e4"/><rect x="1422.0" y="852" width="3.4" height="16" fill="#e4e4e4"/><rect x="1427.6" y="852" width="3.4" height="16" fill="#e4e4e4"/><rect x="1433.3" y="852" width="3.4" height="16" fill="#e4e4e4"/><rect x="1439.0" y="852" width="3.4" height="16" fill="#e4e4e4"/><rect x="1454.0" y="852" width="3.4" height="16" fill="#e4e4e4"/><rect x="1459.7" y="852" width="3.4" height="16" fill="#9a9a9a"/><rect x="1465.3" y="852" width="3.4" height="16" fill="#9a9a9a"/><rect x="1471.0" y="852" width="3.4" height="16" fill="#9a9a9a"/><rect x="1476.7" y="852" width="3.4" height="16" fill="#9a9a9a"/><rect x="1482.3" y="852" width="3.4" height="16" fill="#9a9a9a"/><rect x="1488.0" y="852" width="3.4" height="16" fill="#9a9a9a"/><rect x="1493.7" y="852" width="3.4" height="16" fill="#9a9a9a"/><rect x="1499.4" y="852" width="3.4" height="16" fill="#9a9a9a"/><rect x="1505.0" y="852" width="3.4" height="16" fill="#9a9a9a"/><rect x="1510.7" y="852" width="3.4" height="16" fill="#9a9a9a"/><rect x="1516.4" y="852" width="3.4" height="16" fill="#e4e4e4"/><rect x="1532.7" y="852" width="3.4" height="16" fill="#e4e4e4"/><rect x="1538.4" y="852" width="3.4" height="16" fill="#9a9a9a"/><rect x="1544.0" y="852" width="3.4" height="16" fill="#9a9a9a"/><rect x="1549.7" y="852" width="3.4" height="16" fill="#9a9a9a"/><rect x="1555.4" y="852" width="3.4" height="16" fill="#9a9a9a"/><rect x="1561.0" y="852" width="3.4" height="16" fill="#9a9a9a"/><rect x="1566.7" y="852" width="3.4" height="16" fill="#9a9a9a"/><rect x="1572.4" y="852" width="3.4" height="16" fill="#9a9a9a"/><rect x="1578.1" y="852" width="3.4" height="16" fill="#9a9a9a"/><rect x="1583.7" y="852" width="3.4" height="16" fill="#9a9a9a"/><rect x="1589.4" y="852" width="3.4" height="16" fill="#9a9a9a"/><rect x="1595.1" y="852" width="3.4" height="16" fill="#e4e4e4"/><rect x="1610.4" y="852" width="3.4" height="16" fill="#e4e4e4"/><rect x="1616.1" y="852" width="3.4" height="16" fill="#9a9a9a"/><rect x="1621.7" y="852" width="3.4" height="16" fill="#9a9a9a"/><rect x="1627.4" y="852" width="3.4" height="16" fill="#9a9a9a"/><rect x="1633.1" y="852" width="3.4" height="16" fill="#9a9a9a"/><rect x="1638.8" y="852" width="3.4" height="16" fill="#9a9a9a"/><rect x="1644.4" y="852" width="3.4" height="16" fill="#9a9a9a"/><rect x="1650.1" y="852" width="3.4" height="16" fill="#9a9a9a"/><rect x="1655.8" y="852" width="3.4" height="16" fill="#9a9a9a"/><rect x="1661.4" y="852" width="3.4" height="16" fill="#9a9a9a"/><rect x="1667.1" y="852" width="3.4" height="16" fill="#9a9a9a"/><rect x="1672.8" y="852" width="3.4" height="16" fill="#e4e4e4"/><rect x="1688.0" y="852" width="3.4" height="16" fill="#e4e4e4"/><rect x="1693.7" y="852" width="3.4" height="16" fill="#9a9a9a"/><rect x="1699.3" y="852" width="3.4" height="16" fill="#9a9a9a"/><rect x="1705.0" y="852" width="3.4" height="16" fill="#9a9a9a"/><rect x="1710.7" y="852" width="3.4" height="16" fill="#9a9a9a"/><rect x="1716.3" y="852" width="3.4" height="16" fill="#9a9a9a"/><rect x="1722.0" y="852" width="3.4" height="16" fill="#9a9a9a"/><rect x="1727.7" y="852" width="3.4" height="16" fill="#9a9a9a"/><rect x="1733.4" y="852" width="3.4" height="16" fill="#9a9a9a"/><rect x="1739.0" y="852" width="3.4" height="16" fill="#9a9a9a"/><rect x="1744.7" y="852" width="3.4" height="16" fill="#9a9a9a"/><rect x="1750.4" y="852" width="3.4" height="16" fill="#e4e4e4"/><rect x="1766.0" y="852" width="3.4" height="16" fill="#e4e4e4"/><rect x="1771.7" y="852" width="3.4" height="16" fill="#9a9a9a"/><rect x="1777.3" y="852" width="3.4" height="16" fill="#9a9a9a"/><rect x="1783.0" y="852" width="3.4" height="16" fill="#9a9a9a"/><rect x="1788.7" y="852" width="3.4" height="16" fill="#9a9a9a"/><rect x="1794.3" y="852" width="3.4" height="16" fill="#9a9a9a"/><rect x="1800.0" y="852" width="3.4" height="16" fill="#9a9a9a"/><rect x="1805.7" y="852" width="3.4" height="16" fill="#9a9a9a"/><rect x="1811.4" y="852" width="3.4" height="16" fill="#9a9a9a"/><rect x="1817.0" y="852" width="3.4" height="16" fill="#9a9a9a"/><rect x="1822.7" y="852" width="3.4" height="16" fill="#9a9a9a"/><rect x="1828.4" y="852" width="3.4" height="16" fill="#e4e4e4"/><rect x="1844.6" y="852" width="3.4" height="16" fill="#e4e4e4"/><rect x="1850.3" y="852" width="3.4" height="16" fill="#9a9a9a"/><rect x="1855.9" y="852" width="3.4" height="16" fill="#9a9a9a"/><rect x="1861.6" y="852" width="3.4" height="16" fill="#9a9a9a"/><rect x="1867.3" y="852" width="3.4" height="16" fill="#9a9a9a"/><rect x="1872.9" y="852" width="3.4" height="16" fill="#9a9a9a"/><rect x="1878.6" y="852" width="3.4" height="16" fill="#9a9a9a"/><rect x="1884.3" y="852" width="3.4" height="16" fill="#9a9a9a"/><rect x="1890.0" y="852" width="3.4" height="16" fill="#9a9a9a"/><rect x="1895.6" y="852" width="3.4" height="16" fill="#9a9a9a"/><rect x="1901.3" y="852" width="3.4" height="16" fill="#9a9a9a"/><rect x="1907.0" y="852" width="3.4" height="16" fill="#e4e4e4"/><rect x="1922.7" y="852" width="3.4" height="16" fill="#e4e4e4"/><rect x="1928.4" y="852" width="3.4" height="16" fill="#e4e4e4"/><rect x="1934.0" y="852" width="3.4" height="16" fill="#e4e4e4"/><rect x="1939.7" y="852" width="3.4" height="16" fill="#e4e4e4"/><rect x="1945.4" y="852" width="3.4" height="16" fill="#e4e4e4"/><rect x="1951.0" y="852" width="3.4" height="16" fill="#e4e4e4"/><rect x="1956.7" y="852" width="3.4" height="16" fill="#e4e4e4"/><rect x="1962.4" y="852" width="3.4" height="16" fill="#e4e4e4"/><rect x="1968.1" y="852" width="3.4" height="16" fill="#e4e4e4"/><rect x="1973.7" y="852" width="3.4" height="16" fill="#e4e4e4"/><rect x="1979.4" y="852" width="3.4" height="16" fill="#e4e4e4"/><rect x="1985.1" y="852" width="3.4" height="16" fill="#e4e4e4"/><rect x="1651" y="851" width="15.5" height="18" fill="#fcfcfc" stroke="#2a6ad0" stroke-width="1.6"/><rect x="1654" y="854" width="9.5" height="12" fill="#9a9a9a"/><path d="M2006 853 L2006 867 M2016 853 L2008 860 L2016 867 Z" fill="#333" stroke="#333" stroke-width="1.6"/><path d="M2034.5 853 L2028 860 L2034.5 867 M2040.5 853 L2034 860 L2040.5 867" fill="none" stroke="#333" stroke-width="2"/><path d="M2054 853 L2062 860 L2054 867 Z" fill="#333"/><path d="M2076 853 L2082.5 860 L2076 867 M2082 853 L2088.5 860 L2082 867" fill="none" stroke="#333" stroke-width="2"/><path d="M2100 853 L2108 860 L2100 867 Z M2110 853 L2110 867" fill="#333" stroke="#333" stroke-width="1.6"/><path d="M2122 858 L2130 858 L2126 862 Z" fill="#333"/></svg>
<div style="left:1355px;top:803.5px;height:15px;line-height:15px;font-size:11px;color:#3876d0;font-weight:normal;white-space:pre;">All</div>
<div style="left:1399px;top:803.5px;height:15px;line-height:15px;font-size:11px;color:#111;font-weight:normal;white-space:pre;">BRF</div>
<div style="left:1445px;top:803.5px;height:15px;line-height:15px;font-size:11px;color:#111;font-weight:normal;white-space:pre;">Hoechst</div>
<div style="left:1512px;top:803.5px;height:15px;line-height:15px;font-size:11px;color:#111;font-weight:normal;white-space:pre;">Alexa488</div>
<div style="left:1661px;top:803.0px;height:16px;line-height:16px;font-size:11.5px;color:#111;font-weight:normal;white-space:pre;">0.32 µm/px</div>
<div style="left:1740px;top:803.0px;height:16px;line-height:16px;font-size:11.5px;color:#111;font-weight:normal;white-space:pre;">3x12bit</div>
<div style="left:1801px;top:803.0px;height:16px;line-height:16px;font-size:11.5px;color:#111;font-weight:normal;white-space:pre;">2800 x 2800 pixels</div>
<div style="left:1338.5px;top:852.5px;height:16px;line-height:16px;font-size:11.5px;color:#111;font-weight:normal;white-space:pre;">W</div>
<div style="left:1070.6px;width:600px;text-align:center;top:853.5px;height:15px;line-height:15px;font-size:10.5px;color:#111;font-weight:normal;white-space:pre;">A</div>
<div style="left:1148px;width:600px;text-align:center;top:853.5px;height:15px;line-height:15px;font-size:10.5px;color:#111;font-weight:normal;white-space:pre;">B</div>
<div style="left:1226.7px;width:600px;text-align:center;top:853.5px;height:15px;line-height:15px;font-size:10.5px;color:#111;font-weight:normal;white-space:pre;">C</div>
<div style="left:1304.4px;width:600px;text-align:center;top:853.5px;height:15px;line-height:15px;font-size:10.5px;color:#111;font-weight:normal;white-space:pre;">D</div>
<div style="left:1382px;width:600px;text-align:center;top:853.5px;height:15px;line-height:15px;font-size:10.5px;color:#111;font-weight:normal;white-space:pre;">E</div>
<div style="left:1460px;width:600px;text-align:center;top:853.5px;height:15px;line-height:15px;font-size:10.5px;color:#111;font-weight:normal;white-space:pre;">F</div>
<div style="left:1538.6px;width:600px;text-align:center;top:853.5px;height:15px;line-height:15px;font-size:10.5px;color:#111;font-weight:normal;white-space:pre;">G</div>
<div style="left:1616.7px;width:600px;text-align:center;top:853.5px;height:15px;line-height:15px;font-size:10.5px;color:#111;font-weight:normal;white-space:pre;">H</div>
<div style="left:1330px;top:892px;width:809px;height:8px;background:#acacac;"></div>
<div style="left:1330px;top:900px;width:407px;height:41px;background:#d4d4d4;"></div>
<svg style="left:0px;top:0px;" width="2140" height="1000" viewBox="0 0 2140 1000"><path d="M1340 919 L1360 919" stroke="#111" stroke-width="1.3" stroke-dasharray="1.5,1.5"/><path d="M1339 919 L1344 915.5 L1344 922.5 Z M1361 919 L1356 915.5 L1356 922.5 Z" fill="#111"/><path d="M1381 907.5 L1394 907.5 L1399 912.5 L1399 930 L1381 930 Z" fill="none" stroke="#111" stroke-width="1.4"/><path d="M1395 913 L1385 913 L1390.5 919.5 L1385 926 L1395 926" fill="none" stroke="#111" stroke-width="1.1"/><path d="M1427 913.5 L1420.5 913.5 L1420.5 929 L1440 929 L1440 921" fill="none" stroke="#111" stroke-width="1.6"/><path d="M1425 921 Q1427 913 1436 912 L1436 908.5 L1442 914 L1436 919.5 L1436 916 Q1429 916 1425 921 Z" fill="#111"/></svg>
<div style="left:1127px;width:600px;text-align:right;top:912.0px;height:15px;line-height:15px;font-size:11px;color:#111;font-weight:normal;white-space:pre;">139 rows</div>
<div style="left:1330px;top:940px;width:384px;height:22px;background:#d3d3d3;border-top:1px solid #a8a8a8;border-bottom:1px solid #b8b8b8;"></div>
<div style="left:1330px;top:962px;width:384px;height:430px;background:#fcfcfc;"></div>
<div style="left:1330px;top:982px;width:384px;height:20px;background:#efefef;"></div>
<div style="left:1330px;top:1022px;width:384px;height:20px;background:#efefef;"></div>
<div style="left:1330px;top:1062px;width:384px;height:20px;background:#efefef;"></div>
<div style="left:1330px;top:1102px;width:384px;height:20px;background:#efefef;"></div>
<div style="left:1330px;top:1142px;width:384px;height:20px;background:#efefef;"></div>
<div style="left:1330px;top:1182px;width:384px;height:20px;background:#efefef;"></div>
<div style="left:1330px;top:1222px;width:384px;height:20px;background:#efefef;"></div>
<div style="left:1330px;top:1262px;width:384px;height:20px;background:#efefef;"></div>
<div style="left:1330px;top:1302px;width:384px;height:20px;background:#efefef;"></div>
<div style="left:1330px;top:1342px;width:384px;height:20px;background:#efefef;"></div>
<div style="left:1330px;top:1382px;width:384px;height:20px;background:#efefef;"></div>
<svg style="left:0px;top:0px;" width="2140" height="1392" viewBox="0 0 2140 1392"><line x1="1380.5" y1="941" x2="1380.5" y2="1392" stroke="#b8b8b8"/><line x1="1499.3" y1="941" x2="1499.3" y2="1392" stroke="#b8b8b8"/><line x1="1621.2" y1="941" x2="1621.2" y2="1392" stroke="#b8b8b8"/><line x1="1702.5" y1="941" x2="1702.5" y2="1392" stroke="#b8b8b8"/></svg>
<div style="left:1335px;top:944.0px;height:15px;line-height:15px;font-size:11px;color:#111;font-weight:normal;white-space:pre;letter-spacing:-0.15px;">Obj ID</div>
<div style="left:1384.5px;top:944.0px;height:15px;line-height:15px;font-size:11px;color:#111;font-weight:normal;white-space:pre;letter-spacing:-0.15px;">Nuc_FL Int (Avg) [AU]</div>
<div style="left:1503.3px;top:944.0px;height:15px;line-height:15px;font-size:11px;color:#111;font-weight:normal;white-space:pre;letter-spacing:-0.15px;">Cyto_FL Int (Avg) [AU]</div>
<div style="left:1625.2px;top:944.0px;height:15px;line-height:15px;font-size:11px;color:#111;font-weight:normal;white-space:pre;letter-spacing:-0.15px;">NucCyto_Ratio</div>
<div style="left:776px;width:600px;text-align:right;top:965.5px;height:15px;line-height:15px;font-size:11px;color:#111;font-weight:normal;white-space:pre;">1</div>
<div style="left:894.7px;width:600px;text-align:right;top:965.5px;height:15px;line-height:15px;font-size:11px;color:#111;font-weight:normal;white-space:pre;">649.52</div>
<div style="left:1017px;width:600px;text-align:right;top:965.5px;height:15px;line-height:15px;font-size:11px;color:#111;font-weight:normal;white-space:pre;">545.74</div>
<div style="left:1098px;width:600px;text-align:right;top:965.5px;height:15px;line-height:15px;font-size:11px;color:#111;font-weight:normal;white-space:pre;">1.190</div>
<div style="left:776px;width:600px;text-align:right;top:985.5px;height:15px;line-height:15px;font-size:11px;color:#111;font-weight:normal;white-space:pre;">2</div>
<div style="left:894.7px;width:600px;text-align:right;top:985.5px;height:15px;line-height:15px;font-size:11px;color:#111;font-weight:normal;white-space:pre;">572.39</div>
<div style="left:1017px;width:600px;text-align:right;top:985.5px;height:15px;line-height:15px;font-size:11px;color:#111;font-weight:normal;white-space:pre;">176.47</div>
<div style="left:1098px;width:600px;text-align:right;top:985.5px;height:15px;line-height:15px;font-size:11px;color:#111;font-weight:normal;white-space:pre;">3.244</div>
<div style="left:776px;width:600px;text-align:right;top:1005.5px;height:15px;line-height:15px;font-size:11px;color:#111;font-weight:normal;white-space:pre;">3</div>
<div style="left:894.7px;width:600px;text-align:right;top:1005.5px;height:15px;line-height:15px;font-size:11px;color:#111;font-weight:normal;white-space:pre;">341.20</div>
<div style="left:1017px;width:600px;text-align:right;top:1005.5px;height:15px;line-height:15px;font-size:11px;color:#111;font-weight:normal;white-space:pre;">247.10</div>
<div style="left:1098px;width:600px;text-align:right;top:1005.5px;height:15px;line-height:15px;font-size:11px;color:#111;font-weight:normal;white-space:pre;">1.381</div>
<div style="left:776px;width:600px;text-align:right;top:1025.5px;height:15px;line-height:15px;font-size:11px;color:#111;font-weight:normal;white-space:pre;">4</div>
<div style="left:894.7px;width:600px;text-align:right;top:1025.5px;height:15px;line-height:15px;font-size:11px;color:#111;font-weight:normal;white-space:pre;">633.43</div>
<div style="left:1017px;width:600px;text-align:right;top:1025.5px;height:15px;line-height:15px;font-size:11px;color:#111;font-weight:normal;white-space:pre;">633.38</div>
<div style="left:1098px;width:600px;text-align:right;top:1025.5px;height:15px;line-height:15px;font-size:11px;color:#111;font-weight:normal;white-space:pre;">1.000</div>
<div style="left:776px;width:600px;text-align:right;top:1045.5px;height:15px;line-height:15px;font-size:11px;color:#111;font-weight:normal;white-space:pre;">5</div>
<div style="left:894.7px;width:600px;text-align:right;top:1045.5px;height:15px;line-height:15px;font-size:11px;color:#111;font-weight:normal;white-space:pre;">795.81</div>
<div style="left:1017px;width:600px;text-align:right;top:1045.5px;height:15px;line-height:15px;font-size:11px;color:#111;font-weight:normal;white-space:pre;">447.08</div>
<div style="left:1098px;width:600px;text-align:right;top:1045.5px;height:15px;line-height:15px;font-size:11px;color:#111;font-weight:normal;white-space:pre;">1.780</div>
<div style="left:776px;width:600px;text-align:right;top:1065.5px;height:15px;line-height:15px;font-size:11px;color:#111;font-weight:normal;white-space:pre;">6</div>
<div style="left:894.7px;width:600px;text-align:right;top:1065.5px;height:15px;line-height:15px;font-size:11px;color:#111;font-weight:normal;white-space:pre;">696.37</div>
<div style="left:1017px;width:600px;text-align:right;top:1065.5px;height:15px;line-height:15px;font-size:11px;color:#111;font-weight:normal;white-space:pre;">301.65</div>
<div style="left:1098px;width:600px;text-align:right;top:1065.5px;height:15px;line-height:15px;font-size:11px;color:#111;font-weight:normal;white-space:pre;">2.309</div>
<div style="left:776px;width:600px;text-align:right;top:1085.5px;height:15px;line-height:15px;font-size:11px;color:#111;font-weight:normal;white-space:pre;">7</div>
<div style="left:894.7px;width:600px;text-align:right;top:1085.5px;height:15px;line-height:15px;font-size:11px;color:#111;font-weight:normal;white-space:pre;">703.99</div>
<div style="left:1017px;width:600px;text-align:right;top:1085.5px;height:15px;line-height:15px;font-size:11px;color:#111;font-weight:normal;white-space:pre;">524.67</div>
<div style="left:1098px;width:600px;text-align:right;top:1085.5px;height:15px;line-height:15px;font-size:11px;color:#111;font-weight:normal;white-space:pre;">1.342</div>
<div style="left:776px;width:600px;text-align:right;top:1105.5px;height:15px;line-height:15px;font-size:11px;color:#111;font-weight:normal;white-space:pre;">8</div>
<div style="left:894.7px;width:600px;text-align:right;top:1105.5px;height:15px;line-height:15px;font-size:11px;color:#111;font-weight:normal;white-space:pre;">1,159.42</div>
<div style="left:1017px;width:600px;text-align:right;top:1105.5px;height:15px;line-height:15px;font-size:11px;color:#111;font-weight:normal;white-space:pre;">459.69</div>
<div style="left:1098px;width:600px;text-align:right;top:1105.5px;height:15px;line-height:15px;font-size:11px;color:#111;font-weight:normal;white-space:pre;">2.522</div>
<div style="left:776px;width:600px;text-align:right;top:1125.5px;height:15px;line-height:15px;font-size:11px;color:#111;font-weight:normal;white-space:pre;">9</div>
<div style="left:894.7px;width:600px;text-align:right;top:1125.5px;height:15px;line-height:15px;font-size:11px;color:#111;font-weight:normal;white-space:pre;">414.00</div>
<div style="left:1017px;width:600px;text-align:right;top:1125.5px;height:15px;line-height:15px;font-size:11px;color:#111;font-weight:normal;white-space:pre;">401.15</div>
<div style="left:1098px;width:600px;text-align:right;top:1125.5px;height:15px;line-height:15px;font-size:11px;color:#111;font-weight:normal;white-space:pre;">1.032</div>
<div style="left:776px;width:600px;text-align:right;top:1145.5px;height:15px;line-height:15px;font-size:11px;color:#111;font-weight:normal;white-space:pre;">10</div>
<div style="left:894.7px;width:600px;text-align:right;top:1145.5px;height:15px;line-height:15px;font-size:11px;color:#111;font-weight:normal;white-space:pre;">489.25</div>
<div style="left:1017px;width:600px;text-align:right;top:1145.5px;height:15px;line-height:15px;font-size:11px;color:#111;font-weight:normal;white-space:pre;">377.43</div>
<div style="left:1098px;width:600px;text-align:right;top:1145.5px;height:15px;line-height:15px;font-size:11px;color:#111;font-weight:normal;white-space:pre;">1.296</div>
<div style="left:776px;width:600px;text-align:right;top:1165.5px;height:15px;line-height:15px;font-size:11px;color:#111;font-weight:normal;white-space:pre;">11</div>
<div style="left:894.7px;width:600px;text-align:right;top:1165.5px;height:15px;line-height:15px;font-size:11px;color:#111;font-weight:normal;white-space:pre;">810.70</div>
<div style="left:1017px;width:600px;text-align:right;top:1165.5px;height:15px;line-height:15px;font-size:11px;color:#111;font-weight:normal;white-space:pre;">396.43</div>
<div style="left:1098px;width:600px;text-align:right;top:1165.5px;height:15px;line-height:15px;font-size:11px;color:#111;font-weight:normal;white-space:pre;">2.045</div>
<div style="left:776px;width:600px;text-align:right;top:1185.5px;height:15px;line-height:15px;font-size:11px;color:#111;font-weight:normal;white-space:pre;">12</div>
<div style="left:894.7px;width:600px;text-align:right;top:1185.5px;height:15px;line-height:15px;font-size:11px;color:#111;font-weight:normal;white-space:pre;">681.37</div>
<div style="left:1017px;width:600px;text-align:right;top:1185.5px;height:15px;line-height:15px;font-size:11px;color:#111;font-weight:normal;white-space:pre;">489.48</div>
<div style="left:1098px;width:600px;text-align:right;top:1185.5px;height:15px;line-height:15px;font-size:11px;color:#111;font-weight:normal;white-space:pre;">1.392</div>
<div style="left:776px;width:600px;text-align:right;top:1205.5px;height:15px;line-height:15px;font-size:11px;color:#111;font-weight:normal;white-space:pre;">13</div>
<div style="left:894.7px;width:600px;text-align:right;top:1205.5px;height:15px;line-height:15px;font-size:11px;color:#111;font-weight:normal;white-space:pre;">296.50</div>
<div style="left:1017px;width:600px;text-align:right;top:1205.5px;height:15px;line-height:15px;font-size:11px;color:#111;font-weight:normal;white-space:pre;">297.06</div>
<div style="left:1098px;width:600px;text-align:right;top:1205.5px;height:15px;line-height:15px;font-size:11px;color:#111;font-weight:normal;white-space:pre;">0.998</div>
<div style="left:776px;width:600px;text-align:right;top:1225.5px;height:15px;line-height:15px;font-size:11px;color:#111;font-weight:normal;white-space:pre;">14</div>
<div style="left:894.7px;width:600px;text-align:right;top:1225.5px;height:15px;line-height:15px;font-size:11px;color:#111;font-weight:normal;white-space:pre;">795.89</div>
<div style="left:1017px;width:600px;text-align:right;top:1225.5px;height:15px;line-height:15px;font-size:11px;color:#111;font-weight:normal;white-space:pre;">461.87</div>
<div style="left:1098px;width:600px;text-align:right;top:1225.5px;height:15px;line-height:15px;font-size:11px;color:#111;font-weight:normal;white-space:pre;">1.723</div>
<div style="left:776px;width:600px;text-align:right;top:1245.5px;height:15px;line-height:15px;font-size:11px;color:#111;font-weight:normal;white-space:pre;">15</div>
<div style="left:894.7px;width:600px;text-align:right;top:1245.5px;height:15px;line-height:15px;font-size:11px;color:#111;font-weight:normal;white-space:pre;">678.05</div>
<div style="left:1017px;width:600px;text-align:right;top:1245.5px;height:15px;line-height:15px;font-size:11px;color:#111;font-weight:normal;white-space:pre;">295.52</div>
<div style="left:1098px;width:600px;text-align:right;top:1245.5px;height:15px;line-height:15px;font-size:11px;color:#111;font-weight:normal;white-space:pre;">2.294</div>
<div style="left:776px;width:600px;text-align:right;top:1265.5px;height:15px;line-height:15px;font-size:11px;color:#111;font-weight:normal;white-space:pre;">16</div>
<div style="left:894.7px;width:600px;text-align:right;top:1265.5px;height:15px;line-height:15px;font-size:11px;color:#111;font-weight:normal;white-space:pre;">801.95</div>
<div style="left:1017px;width:600px;text-align:right;top:1265.5px;height:15px;line-height:15px;font-size:11px;color:#111;font-weight:normal;white-space:pre;">625.36</div>
<div style="left:1098px;width:600px;text-align:right;top:1265.5px;height:15px;line-height:15px;font-size:11px;color:#111;font-weight:normal;white-space:pre;">1.282</div>
<div style="left:776px;width:600px;text-align:right;top:1285.5px;height:15px;line-height:15px;font-size:11px;color:#111;font-weight:normal;white-space:pre;">17</div>
<div style="left:894.7px;width:600px;text-align:right;top:1285.5px;height:15px;line-height:15px;font-size:11px;color:#111;font-weight:normal;white-space:pre;">530.21</div>
<div style="left:1017px;width:600px;text-align:right;top:1285.5px;height:15px;line-height:15px;font-size:11px;color:#111;font-weight:normal;white-space:pre;">341.57</div>
<div style="left:1098px;width:600px;text-align:right;top:1285.5px;height:15px;line-height:15px;font-size:11px;color:#111;font-weight:normal;white-space:pre;">1.552</div>
<div style="left:776px;width:600px;text-align:right;top:1305.5px;height:15px;line-height:15px;font-size:11px;color:#111;font-weight:normal;white-space:pre;">18</div>
<div style="left:894.7px;width:600px;text-align:right;top:1305.5px;height:15px;line-height:15px;font-size:11px;color:#111;font-weight:normal;white-space:pre;">908.75</div>
<div style="left:1017px;width:600px;text-align:right;top:1305.5px;height:15px;line-height:15px;font-size:11px;color:#111;font-weight:normal;white-space:pre;">451.89</div>
<div style="left:1098px;width:600px;text-align:right;top:1305.5px;height:15px;line-height:15px;font-size:11px;color:#111;font-weight:normal;white-space:pre;">2.011</div>
<div style="left:776px;width:600px;text-align:right;top:1325.5px;height:15px;line-height:15px;font-size:11px;color:#111;font-weight:normal;white-space:pre;">19</div>
<div style="left:894.7px;width:600px;text-align:right;top:1325.5px;height:15px;line-height:15px;font-size:11px;color:#111;font-weight:normal;white-space:pre;">873.50</div>
<div style="left:1017px;width:600px;text-align:right;top:1325.5px;height:15px;line-height:15px;font-size:11px;color:#111;font-weight:normal;white-space:pre;">419.04</div>
<div style="left:1098px;width:600px;text-align:right;top:1325.5px;height:15px;line-height:15px;font-size:11px;color:#111;font-weight:normal;white-space:pre;">2.085</div>
<div style="left:776px;width:600px;text-align:right;top:1345.5px;height:15px;line-height:15px;font-size:11px;color:#111;font-weight:normal;white-space:pre;">20</div>
<div style="left:894.7px;width:600px;text-align:right;top:1345.5px;height:15px;line-height:15px;font-size:11px;color:#111;font-weight:normal;white-space:pre;">915.38</div>
<div style="left:1017px;width:600px;text-align:right;top:1345.5px;height:15px;line-height:15px;font-size:11px;color:#111;font-weight:normal;white-space:pre;">425.55</div>
<div style="left:1098px;width:600px;text-align:right;top:1345.5px;height:15px;line-height:15px;font-size:11px;color:#111;font-weight:normal;white-space:pre;">2.151</div>
<div style="left:776px;width:600px;text-align:right;top:1365.5px;height:15px;line-height:15px;font-size:11px;color:#111;font-weight:normal;white-space:pre;">21</div>
<div style="left:894.7px;width:600px;text-align:right;top:1365.5px;height:15px;line-height:15px;font-size:11px;color:#111;font-weight:normal;white-space:pre;">421.77</div>
<div style="left:1017px;width:600px;text-align:right;top:1365.5px;height:15px;line-height:15px;font-size:11px;color:#111;font-weight:normal;white-space:pre;">405.27</div>
<div style="left:1098px;width:600px;text-align:right;top:1365.5px;height:15px;line-height:15px;font-size:11px;color:#111;font-weight:normal;white-space:pre;">1.041</div>
<div style="left:776px;width:600px;text-align:right;top:1385.5px;height:15px;line-height:15px;font-size:11px;color:#111;font-weight:normal;white-space:pre;">22</div>
<div style="left:894.7px;width:600px;text-align:right;top:1385.5px;height:15px;line-height:15px;font-size:11px;color:#111;font-weight:normal;white-space:pre;">596.71</div>
<div style="left:1017px;width:600px;text-align:right;top:1385.5px;height:15px;line-height:15px;font-size:11px;color:#111;font-weight:normal;white-space:pre;">300.44</div>
<div style="left:1098px;width:600px;text-align:right;top:1385.5px;height:15px;line-height:15px;font-size:11px;color:#111;font-weight:normal;white-space:pre;">2.020</div>
<div style="left:1714px;top:941px;width:20px;height:451px;background:#f0f0f0;"></div>
<div style="left:1719px;top:942px;width:13px;height:68px;background:#9c9c9c;border-radius:6.5px;"></div>
<div style="left:1734px;top:900px;width:1px;height:492px;background:#a8a8a8;"></div>
<div style="left:1735px;top:900px;width:404px;height:41px;background:#d4d4d4;"></div>
<div style="left:1735px;top:941px;width:404px;height:451px;background:#fcfcfc;"></div>
<svg style="left:0px;top:0px;" width="2140" height="1392" viewBox="0 0 2140 1392"><path d="M1743 928.8 L1767 928.8" stroke="#111" stroke-width="1.6"/><circle cx="1745.7" cy="924.8" r="1.3" fill="#111"/><circle cx="1750.3" cy="922" r="1.3" fill="#111"/><circle cx="1755" cy="917.3" r="1.3" fill="#111"/><circle cx="1759.3" cy="920.2" r="1.3" fill="#111"/><circle cx="1764" cy="914.4" r="1.3" fill="#111"/><rect x="1784.0" y="921" width="2.8" height="8" fill="#2f74d0"/><rect x="1788.3" y="915" width="2.8" height="14" fill="#2f74d0"/><rect x="1792.6" y="911" width="2.8" height="18" fill="#2f74d0"/><rect x="1796.9" y="918" width="2.8" height="11" fill="#2f74d0"/><rect x="1801.2" y="923" width="2.8" height="6" fill="#2f74d0"/><line x1="1783" y1="930.5" x2="1806" y2="930.5" stroke="#2f74d0" stroke-width="1.2"/><path d="M1824.5 907 L1824.5 930.5 L1847 930.5" fill="none" stroke="#111" stroke-width="1.3"/><rect x="1829.5" y="920.5" width="5" height="8" fill="#aaa" stroke="#111"/><rect x="1838.5" y="909.5" width="5" height="19" fill="none" stroke="#111" stroke-width="1.2"/><line x1="1863.5" y1="910" x2="1863.5" y2="929" stroke="#aaa"/><rect x="1884.0" y="921" width="2.8" height="8" fill="#111"/><rect x="1888.3" y="915" width="2.8" height="14" fill="#111"/><rect x="1892.6" y="911" width="2.8" height="18" fill="#111"/><rect x="1896.9" y="918" width="2.8" height="11" fill="#111"/><rect x="1901.2" y="923" width="2.8" height="6" fill="#111"/><line x1="1883" y1="930.5" x2="1906" y2="930.5" stroke="#111" stroke-width="1.2"/><path d="M2013 917 L2021 917 L2017 921.5 Z" fill="#222"/><path d="M2040.5 907 L2040.5 930.5 L2064 930.5 M2042 929 Q2048 905 2052 907 Q2056 909 2062 929" fill="none" stroke="#2f74d0" stroke-width="1.3"/><path d="M2048 929 L2048 915 M2051 929 L2051 910 M2054 929 L2054 913 M2057 929 L2057 921" stroke="#2f74d0" stroke-width="1"/><path d="M2080.5 908 L2080.5 930 M2102.5 908 L2102.5 930 M2083 929 Q2088 908 2092 908 Q2097 908 2101 920" fill="none" stroke="#2f74d0" stroke-width="1.4"/><line x1="1785.5" y1="945" x2="1785.5" y2="1345" stroke="#e0e0e0"/><line x1="1794.2" y1="945" x2="1794.2" y2="1345" stroke="#ececec"/><line x1="1802.8" y1="945" x2="1802.8" y2="1345" stroke="#ececec"/><line x1="1811.5" y1="945" x2="1811.5" y2="1345" stroke="#ececec"/><line x1="1820.2" y1="945" x2="1820.2" y2="1345" stroke="#ececec"/><line x1="1828.8" y1="945" x2="1828.8" y2="1345" stroke="#e0e0e0"/><line x1="1837.5" y1="945" x2="1837.5" y2="1345" stroke="#ececec"/><line x1="1846.2" y1="945" x2="1846.2" y2="1345" stroke="#ececec"/><line x1="1854.8" y1="945" x2="1854.8" y2="1345" stroke="#ececec"/><line x1="1863.5" y1="945" x2="1863.5" y2="1345" stroke="#ececec"/><line x1="1872.2" y1="945" x2="1872.2" y2="1345" stroke="#e0e0e0"/><line x1="1880.8" y1="945" x2="1880.8" y2="1345" stroke="#ececec"/><line x1="1889.5" y1="945" x2="1889.5" y2="1345" stroke="#ececec"/><line x1="1898.2" y1="945" x2="1898.2" y2="1345" stroke="#ececec"/><line x1="1906.8" y1="945" x2="1906.8" y2="1345" stroke="#ececec"/><line x1="1915.5" y1="945" x2="1915.5" y2="1345" stroke="#e0e0e0"/><line x1="1924.2" y1="945" x2="1924.2" y2="1345" stroke="#ececec"/><line x1="1932.8" y1="945" x2="1932.8" y2="1345" stroke="#ececec"/><line x1="1941.5" y1="945" x2="1941.5" y2="1345" stroke="#ececec"/><line x1="1950.2" y1="945" x2="1950.2" y2="1345" stroke="#ececec"/><line x1="1958.8" y1="945" x2="1958.8" y2="1345" stroke="#e0e0e0"/><line x1="1967.5" y1="945" x2="1967.5" y2="1345" stroke="#ececec"/><line x1="1976.2" y1="945" x2="1976.2" y2="1345" stroke="#ececec"/><line x1="1984.8" y1="945" x2="1984.8" y2="1345" stroke="#ececec"/><line x1="1993.5" y1="945" x2="1993.5" y2="1345" stroke="#ececec"/><line x1="2002.2" y1="945" x2="2002.2" y2="1345" stroke="#e0e0e0"/><line x1="2010.8" y1="945" x2="2010.8" y2="1345" stroke="#ececec"/><line x1="2019.5" y1="945" x2="2019.5" y2="1345" stroke="#ececec"/><line x1="2028.1" y1="945" x2="2028.1" y2="1345" stroke="#ececec"/><line x1="2036.8" y1="945" x2="2036.8" y2="1345" stroke="#ececec"/><line x1="2045.5" y1="945" x2="2045.5" y2="1345" stroke="#e0e0e0"/><line x1="2054.1" y1="945" x2="2054.1" y2="1345" stroke="#ececec"/><line x1="2062.8" y1="945" x2="2062.8" y2="1345" stroke="#ececec"/><line x1="2071.5" y1="945" x2="2071.5" y2="1345" stroke="#ececec"/><line x1="2080.1" y1="945" x2="2080.1" y2="1345" stroke="#ececec"/><line x1="2088.8" y1="945" x2="2088.8" y2="1345" stroke="#e0e0e0"/><line x1="2097.5" y1="945" x2="2097.5" y2="1345" stroke="#ececec"/><line x1="2106.1" y1="945" x2="2106.1" y2="1345" stroke="#ececec"/><line x1="1786" y1="1345.4" x2="2109" y2="1345.4" stroke="#e0e0e0"/><line x1="1786" y1="1335.9" x2="2109" y2="1335.9" stroke="#ececec"/><line x1="1786" y1="1326.4" x2="2109" y2="1326.4" stroke="#ececec"/><line x1="1786" y1="1316.9" x2="2109" y2="1316.9" stroke="#ececec"/><line x1="1786" y1="1307.3" x2="2109" y2="1307.3" stroke="#ececec"/><line x1="1786" y1="1297.8" x2="2109" y2="1297.8" stroke="#e0e0e0"/><line x1="1786" y1="1288.3" x2="2109" y2="1288.3" stroke="#ececec"/><line x1="1786" y1="1278.8" x2="2109" y2="1278.8" stroke="#ececec"/><line x1="1786" y1="1269.3" x2="2109" y2="1269.3" stroke="#ececec"/><line x1="1786" y1="1259.8" x2="2109" y2="1259.8" stroke="#ececec"/><line x1="1786" y1="1250.2" x2="2109" y2="1250.2" stroke="#e0e0e0"/><line x1="1786" y1="1240.7" x2="2109" y2="1240.7" stroke="#ececec"/><line x1="1786" y1="1231.2" x2="2109" y2="1231.2" stroke="#ececec"/><line x1="1786" y1="1221.7" x2="2109" y2="1221.7" stroke="#ececec"/><line x1="1786" y1="1212.2" x2="2109" y2="1212.2" stroke="#ececec"/><line x1="1786" y1="1202.7" x2="2109" y2="1202.7" stroke="#e0e0e0"/><line x1="1786" y1="1193.1" x2="2109" y2="1193.1" stroke="#ececec"/><line x1="1786" y1="1183.6" x2="2109" y2="1183.6" stroke="#ececec"/><line x1="1786" y1="1174.1" x2="2109" y2="1174.1" stroke="#ececec"/><line x1="1786" y1="1164.6" x2="2109" y2="1164.6" stroke="#ececec"/><line x1="1786" y1="1155.1" x2="2109" y2="1155.1" stroke="#e0e0e0"/><line x1="1786" y1="1145.6" x2="2109" y2="1145.6" stroke="#ececec"/><line x1="1786" y1="1136.0" x2="2109" y2="1136.0" stroke="#ececec"/><line x1="1786" y1="1126.5" x2="2109" y2="1126.5" stroke="#ececec"/><line x1="1786" y1="1117.0" x2="2109" y2="1117.0" stroke="#ececec"/><line x1="1786" y1="1107.5" x2="2109" y2="1107.5" stroke="#e0e0e0"/><line x1="1786" y1="1098.0" x2="2109" y2="1098.0" stroke="#ececec"/><line x1="1786" y1="1088.5" x2="2109" y2="1088.5" stroke="#ececec"/><line x1="1786" y1="1079.0" x2="2109" y2="1079.0" stroke="#ececec"/><line x1="1786" y1="1069.4" x2="2109" y2="1069.4" stroke="#ececec"/><line x1="1786" y1="1059.9" x2="2109" y2="1059.9" stroke="#e0e0e0"/><line x1="1786" y1="1050.4" x2="2109" y2="1050.4" stroke="#ececec"/><line x1="1786" y1="1040.9" x2="2109" y2="1040.9" stroke="#ececec"/><line x1="1786" y1="1031.4" x2="2109" y2="1031.4" stroke="#ececec"/><line x1="1786" y1="1021.9" x2="2109" y2="1021.9" stroke="#ececec"/><line x1="1786" y1="1012.3" x2="2109" y2="1012.3" stroke="#e0e0e0"/><line x1="1786" y1="1002.8" x2="2109" y2="1002.8" stroke="#ececec"/><line x1="1786" y1="993.3" x2="2109" y2="993.3" stroke="#ececec"/><line x1="1786" y1="983.8" x2="2109" y2="983.8" stroke="#ececec"/><line x1="1786" y1="974.3" x2="2109" y2="974.3" stroke="#ececec"/><line x1="1786" y1="964.8" x2="2109" y2="964.8" stroke="#e0e0e0"/><line x1="1786" y1="955.2" x2="2109" y2="955.2" stroke="#ececec"/><line x1="1786" y1="945.7" x2="2109" y2="945.7" stroke="#ececec"/><rect x="1786.3" y="1321.6" width="14.6" height="23.8" fill="#4c8ec6"/><rect x="1802.5" y="1321.6" width="14.6" height="23.8" fill="#4c8ec6"/><rect x="1834.8" y="1297.8" width="14.6" height="47.6" fill="#4c8ec6"/><rect x="1851.0" y="1250.2" width="14.6" height="95.2" fill="#4c8ec6"/><rect x="1867.2" y="1178.9" width="14.6" height="166.5" fill="#4c8ec6"/><rect x="1883.3" y="1012.3" width="14.6" height="333.1" fill="#4c8ec6"/><rect x="1899.5" y="988.6" width="14.6" height="356.8" fill="#4c8ec6"/><rect x="1915.7" y="1083.7" width="14.6" height="261.7" fill="#4c8ec6"/><rect x="1931.9" y="964.8" width="14.6" height="380.6" fill="#4c8ec6"/><rect x="1948.0" y="1036.1" width="14.6" height="309.3" fill="#4c8ec6"/><rect x="1964.2" y="1036.1" width="14.6" height="309.3" fill="#4c8ec6"/><rect x="1980.4" y="1107.5" width="14.6" height="237.9" fill="#4c8ec6"/><rect x="1996.6" y="1107.5" width="14.6" height="237.9" fill="#4c8ec6"/><rect x="2012.8" y="1155.1" width="14.6" height="190.3" fill="#4c8ec6"/><rect x="2028.9" y="1274.0" width="14.6" height="71.4" fill="#4c8ec6"/><rect x="2045.1" y="1250.2" width="14.6" height="95.2" fill="#4c8ec6"/><rect x="2061.3" y="1274.0" width="14.6" height="71.4" fill="#4c8ec6"/><rect x="2077.5" y="1297.8" width="14.6" height="47.6" fill="#4c8ec6"/><rect x="2093.6" y="1297.8" width="14.6" height="47.6" fill="#4c8ec6"/><polyline points="1785.5,1336.5 1786.5,1336.1 1787.5,1335.7 1788.5,1335.3 1789.5,1334.9 1790.5,1334.4 1791.5,1333.9 1792.5,1333.5 1793.5,1333.0 1794.5,1332.4 1795.5,1331.9 1796.5,1331.3 1797.5,1330.8 1798.5,1330.2 1799.5,1329.5 1800.5,1328.9 1801.5,1328.2 1802.5,1327.6 1803.5,1326.9 1804.5,1326.1 1805.5,1325.4 1806.5,1324.6 1807.5,1323.8 1808.5,1323.0 1809.5,1322.1 1810.5,1321.3 1811.5,1320.4 1812.5,1319.4 1813.5,1318.5 1814.5,1317.5 1815.5,1316.5 1816.5,1315.5 1817.5,1314.4 1818.5,1313.3 1819.5,1312.1 1820.5,1311.0 1821.5,1309.8 1822.5,1308.6 1823.5,1307.3 1824.5,1306.0 1825.5,1304.7 1826.5,1303.3 1827.5,1301.9 1828.5,1300.5 1829.5,1299.1 1830.5,1297.6 1831.5,1296.0 1832.5,1294.4 1833.5,1292.8 1834.5,1291.2 1835.5,1289.5 1836.5,1287.8 1837.5,1286.0 1838.5,1284.3 1839.5,1282.4 1840.5,1280.6 1841.5,1278.6 1842.5,1276.7 1843.5,1274.7 1844.5,1272.7 1845.5,1270.6 1846.5,1268.5 1847.5,1266.4 1848.5,1264.2 1849.5,1262.0 1850.5,1259.7 1851.5,1257.4 1852.5,1255.1 1853.5,1252.7 1854.5,1250.3 1855.5,1247.9 1856.5,1245.4 1857.5,1242.9 1858.5,1240.3 1859.5,1237.7 1860.5,1235.1 1861.5,1232.4 1862.5,1229.7 1863.5,1227.0 1864.5,1224.2 1865.5,1221.4 1866.5,1218.5 1867.5,1215.7 1868.5,1212.8 1869.5,1209.8 1870.5,1206.9 1871.5,1203.9 1872.5,1200.9 1873.5,1197.8 1874.5,1194.8 1875.5,1191.7 1876.5,1188.6 1877.5,1185.4 1878.5,1182.3 1879.5,1179.1 1880.5,1175.9 1881.5,1172.7 1882.5,1169.4 1883.5,1166.2 1884.5,1162.9 1885.5,1159.7 1886.5,1156.4 1887.5,1153.1 1888.5,1149.8 1889.5,1146.5 1890.5,1143.2 1891.5,1139.9 1892.5,1136.5 1893.5,1133.2 1894.5,1129.9 1895.5,1126.6 1896.5,1123.3 1897.5,1120.0 1898.5,1116.8 1899.5,1113.5 1900.5,1110.2 1901.5,1107.0 1902.5,1103.8 1903.5,1100.6 1904.5,1097.4 1905.5,1094.2 1906.5,1091.1 1907.5,1088.0 1908.5,1084.9 1909.5,1081.8 1910.5,1078.8 1911.5,1075.8 1912.5,1072.9 1913.5,1070.0 1914.5,1067.1 1915.5,1064.3 1916.5,1061.5 1917.5,1058.7 1918.5,1056.0 1919.5,1053.4 1920.5,1050.8 1921.5,1048.3 1922.5,1045.8 1923.5,1043.3 1924.5,1041.0 1925.5,1038.7 1926.5,1036.4 1927.5,1034.2 1928.5,1032.1 1929.5,1030.0 1930.5,1028.1 1931.5,1026.1 1932.5,1024.3 1933.5,1022.5 1934.5,1020.8 1935.5,1019.2 1936.5,1017.6 1937.5,1016.1 1938.5,1014.7 1939.5,1013.4 1940.5,1012.2 1941.5,1011.0 1942.5,1009.9 1943.5,1008.9 1944.5,1008.0 1945.5,1007.2 1946.5,1006.4 1947.5,1005.8 1948.5,1005.2 1949.5,1004.7 1950.5,1004.3 1951.5,1004.0 1952.5,1003.7 1953.5,1003.6 1954.5,1003.5 1955.5,1003.6 1956.5,1003.7 1957.5,1003.9 1958.5,1004.2 1959.5,1004.6 1960.5,1005.0 1961.5,1005.6 1962.5,1006.2 1963.5,1006.9 1964.5,1007.7 1965.5,1008.6 1966.5,1009.6 1967.5,1010.7 1968.5,1011.8 1969.5,1013.0 1970.5,1014.3 1971.5,1015.7 1972.5,1017.2 1973.5,1018.7 1974.5,1020.3 1975.5,1022.0 1976.5,1023.7 1977.5,1025.6 1978.5,1027.5 1979.5,1029.4 1980.5,1031.5 1981.5,1033.6 1982.5,1035.7 1983.5,1038.0 1984.5,1040.3 1985.5,1042.6 1986.5,1045.0 1987.5,1047.5 1988.5,1050.0 1989.5,1052.6 1990.5,1055.2 1991.5,1057.9 1992.5,1060.6 1993.5,1063.4 1994.5,1066.2 1995.5,1069.1 1996.5,1072.0 1997.5,1074.9 1998.5,1077.9 1999.5,1080.9 2000.5,1084.0 2001.5,1087.0 2002.5,1090.1 2003.5,1093.3 2004.5,1096.4 2005.5,1099.6 2006.5,1102.8 2007.5,1106.0 2008.5,1109.3 2009.5,1112.5 2010.5,1115.8 2011.5,1119.0 2012.5,1122.3 2013.5,1125.6 2014.5,1128.9 2015.5,1132.2 2016.5,1135.6 2017.5,1138.9 2018.5,1142.2 2019.5,1145.5 2020.5,1148.8 2021.5,1152.1 2022.5,1155.4 2023.5,1158.7 2024.5,1161.9 2025.5,1165.2 2026.5,1168.5 2027.5,1171.7 2028.5,1174.9 2029.5,1178.1 2030.5,1181.3 2031.5,1184.5 2032.5,1187.6 2033.5,1190.7 2034.5,1193.8 2035.5,1196.9 2036.5,1200.0 2037.5,1203.0 2038.5,1206.0 2039.5,1209.0 2040.5,1211.9 2041.5,1214.8 2042.5,1217.7 2043.5,1220.5 2044.5,1223.3 2045.5,1226.1 2046.5,1228.9 2047.5,1231.6 2048.5,1234.3 2049.5,1236.9 2050.5,1239.5 2051.5,1242.1 2052.5,1244.6 2053.5,1247.1 2054.5,1249.6 2055.5,1252.0 2056.5,1254.4 2057.5,1256.7 2058.5,1259.0 2059.5,1261.3 2060.5,1263.5 2061.5,1265.7 2062.5,1267.9 2063.5,1270.0 2064.5,1272.1 2065.5,1274.1 2066.5,1276.1 2067.5,1278.1 2068.5,1280.0 2069.5,1281.9 2070.5,1283.7 2071.5,1285.5 2072.5,1287.3 2073.5,1289.0 2074.5,1290.7 2075.5,1292.4 2076.5,1294.0 2077.5,1295.6 2078.5,1297.1 2079.5,1298.6 2080.5,1300.1 2081.5,1301.5 2082.5,1302.9 2083.5,1304.3 2084.5,1305.6 2085.5,1306.9 2086.5,1308.2 2087.5,1309.4 2088.5,1310.6 2089.5,1311.8 2090.5,1312.9 2091.5,1314.1 2092.5,1315.1 2093.5,1316.2 2094.5,1317.2 2095.5,1318.2 2096.5,1319.2 2097.5,1320.1 2098.5,1321.0 2099.5,1321.9 2100.5,1322.7 2101.5,1323.6 2102.5,1324.4 2103.5,1325.2 2104.5,1325.9 2105.5,1326.6 2106.5,1327.4 2107.5,1328.0 2108.5,1328.7 2109.5,1329.4" fill="none" stroke="#ff7f0e" stroke-width="2.4"/><line x1="1785.5" y1="945" x2="1785.5" y2="1346" stroke="#111"/><line x1="1785" y1="1345.5" x2="2110" y2="1345.5" stroke="#111"/><line x1="1779" y1="1345.4" x2="1785.5" y2="1345.4" stroke="#111" stroke-width="1.3"/><line x1="1781.5" y1="1335.9" x2="1785.5" y2="1335.9" stroke="#111" stroke-width="1"/><line x1="1781.5" y1="1326.4" x2="1785.5" y2="1326.4" stroke="#111" stroke-width="1"/><line x1="1781.5" y1="1316.9" x2="1785.5" y2="1316.9" stroke="#111" stroke-width="1"/><line x1="1781.5" y1="1307.3" x2="1785.5" y2="1307.3" stroke="#111" stroke-width="1"/><line x1="1779" y1="1297.8" x2="1785.5" y2="1297.8" stroke="#111" stroke-width="1.3"/><line x1="1781.5" y1="1288.3" x2="1785.5" y2="1288.3" stroke="#111" stroke-width="1"/><line x1="1781.5" y1="1278.8" x2="1785.5" y2="1278.8" stroke="#111" stroke-width="1"/><line x1="1781.5" y1="1269.3" x2="1785.5" y2="1269.3" stroke="#111" stroke-width="1"/><line x1="1781.5" y1="1259.8" x2="1785.5" y2="1259.8" stroke="#111" stroke-width="1"/><line x1="1779" y1="1250.2" x2="1785.5" y2="1250.2" stroke="#111" stroke-width="1.3"/><line x1="1781.5" y1="1240.7" x2="1785.5" y2="1240.7" stroke="#111" stroke-width="1"/><line x1="1781.5" y1="1231.2" x2="1785.5" y2="1231.2" stroke="#111" stroke-width="1"/><line x1="1781.5" y1="1221.7" x2="1785.5" y2="1221.7" stroke="#111" stroke-width="1"/><line x1="1781.5" y1="1212.2" x2="1785.5" y2="1212.2" stroke="#111" stroke-width="1"/><line x1="1779" y1="1202.7" x2="1785.5" y2="1202.7" stroke="#111" stroke-width="1.3"/><line x1="1781.5" y1="1193.1" x2="1785.5" y2="1193.1" stroke="#111" stroke-width="1"/><line x1="1781.5" y1="1183.6" x2="1785.5" y2="1183.6" stroke="#111" stroke-width="1"/><line x1="1781.5" y1="1174.1" x2="1785.5" y2="1174.1" stroke="#111" stroke-width="1"/><line x1="1781.5" y1="1164.6" x2="1785.5" y2="1164.6" stroke="#111" stroke-width="1"/><line x1="1779" y1="1155.1" x2="1785.5" y2="1155.1" stroke="#111" stroke-width="1.3"/><line x1="1781.5" y1="1145.6" x2="1785.5" y2="1145.6" stroke="#111" stroke-width="1"/><line x1="1781.5" y1="1136.0" x2="1785.5" y2="1136.0" stroke="#111" stroke-width="1"/><line x1="1781.5" y1="1126.5" x2="1785.5" y2="1126.5" stroke="#111" stroke-width="1"/><line x1="1781.5" y1="1117.0" x2="1785.5" y2="1117.0" stroke="#111" stroke-width="1"/><line x1="1779" y1="1107.5" x2="1785.5" y2="1107.5" stroke="#111" stroke-width="1.3"/><line x1="1781.5" y1="1098.0" x2="1785.5" y2="1098.0" stroke="#111" stroke-width="1"/><line x1="1781.5" y1="1088.5" x2="1785.5" y2="1088.5" stroke="#111" stroke-width="1"/><line x1="1781.5" y1="1079.0" x2="1785.5" y2="1079.0" stroke="#111" stroke-width="1"/><line x1="1781.5" y1="1069.4" x2="1785.5" y2="1069.4" stroke="#111" stroke-width="1"/><line x1="1779" y1="1059.9" x2="1785.5" y2="1059.9" stroke="#111" stroke-width="1.3"/><line x1="1781.5" y1="1050.4" x2="1785.5" y2="1050.4" stroke="#111" stroke-width="1"/><line x1="1781.5" y1="1040.9" x2="1785.5" y2="1040.9" stroke="#111" stroke-width="1"/><line x1="1781.5" y1="1031.4" x2="1785.5" y2="1031.4" stroke="#111" stroke-width="1"/><line x1="1781.5" y1="1021.9" x2="1785.5" y2="1021.9" stroke="#111" stroke-width="1"/><line x1="1779" y1="1012.3" x2="1785.5" y2="1012.3" stroke="#111" stroke-width="1.3"/><line x1="1781.5" y1="1002.8" x2="1785.5" y2="1002.8" stroke="#111" stroke-width="1"/><line x1="1781.5" y1="993.3" x2="1785.5" y2="993.3" stroke="#111" stroke-width="1"/><line x1="1781.5" y1="983.8" x2="1785.5" y2="983.8" stroke="#111" stroke-width="1"/><line x1="1781.5" y1="974.3" x2="1785.5" y2="974.3" stroke="#111" stroke-width="1"/><line x1="1779" y1="964.8" x2="1785.5" y2="964.8" stroke="#111" stroke-width="1.3"/><line x1="1781.5" y1="955.2" x2="1785.5" y2="955.2" stroke="#111" stroke-width="1"/><line x1="1781.5" y1="945.7" x2="1785.5" y2="945.7" stroke="#111" stroke-width="1"/><line x1="1785.5" y1="1343.5" x2="1785.5" y2="1351.5" stroke="#111" stroke-width="1.3"/><line x1="1794.2" y1="1345.5" x2="1794.2" y2="1349" stroke="#111" stroke-width="1"/><line x1="1802.8" y1="1345.5" x2="1802.8" y2="1349" stroke="#111" stroke-width="1"/><line x1="1811.5" y1="1345.5" x2="1811.5" y2="1349" stroke="#111" stroke-width="1"/><line x1="1820.2" y1="1345.5" x2="1820.2" y2="1349" stroke="#111" stroke-width="1"/><line x1="1828.8" y1="1343.5" x2="1828.8" y2="1351.5" stroke="#111" stroke-width="1.3"/><line x1="1837.5" y1="1345.5" x2="1837.5" y2="1349" stroke="#111" stroke-width="1"/><line x1="1846.2" y1="1345.5" x2="1846.2" y2="1349" stroke="#111" stroke-width="1"/><line x1="1854.8" y1="1345.5" x2="1854.8" y2="1349" stroke="#111" stroke-width="1"/><line x1="1863.5" y1="1345.5" x2="1863.5" y2="1349" stroke="#111" stroke-width="1"/><line x1="1872.2" y1="1343.5" x2="1872.2" y2="1351.5" stroke="#111" stroke-width="1.3"/><line x1="1880.8" y1="1345.5" x2="1880.8" y2="1349" stroke="#111" stroke-width="1"/><line x1="1889.5" y1="1345.5" x2="1889.5" y2="1349" stroke="#111" stroke-width="1"/><line x1="1898.2" y1="1345.5" x2="1898.2" y2="1349" stroke="#111" stroke-width="1"/><line x1="1906.8" y1="1345.5" x2="1906.8" y2="1349" stroke="#111" stroke-width="1"/><line x1="1915.5" y1="1343.5" x2="1915.5" y2="1351.5" stroke="#111" stroke-width="1.3"/><line x1="1924.2" y1="1345.5" x2="1924.2" y2="1349" stroke="#111" stroke-width="1"/><line x1="1932.8" y1="1345.5" x2="1932.8" y2="1349" stroke="#111" stroke-width="1"/><line x1="1941.5" y1="1345.5" x2="1941.5" y2="1349" stroke="#111" stroke-width="1"/><line x1="1950.2" y1="1345.5" x2="1950.2" y2="1349" stroke="#111" stroke-width="1"/><line x1="1958.8" y1="1343.5" x2="1958.8" y2="1351.5" stroke="#111" stroke-width="1.3"/><line x1="1967.5" y1="1345.5" x2="1967.5" y2="1349" stroke="#111" stroke-width="1"/><line x1="1976.2" y1="1345.5" x2="1976.2" y2="1349" stroke="#111" stroke-width="1"/><line x1="1984.8" y1="1345.5" x2="1984.8" y2="1349" stroke="#111" stroke-width="1"/><line x1="1993.5" y1="1345.5" x2="1993.5" y2="1349" stroke="#111" stroke-width="1"/><line x1="2002.2" y1="1343.5" x2="2002.2" y2="1351.5" stroke="#111" stroke-width="1.3"/><line x1="2010.8" y1="1345.5" x2="2010.8" y2="1349" stroke="#111" stroke-width="1"/><line x1="2019.5" y1="1345.5" x2="2019.5" y2="1349" stroke="#111" stroke-width="1"/><line x1="2028.1" y1="1345.5" x2="2028.1" y2="1349" stroke="#111" stroke-width="1"/><line x1="2036.8" y1="1345.5" x2="2036.8" y2="1349" stroke="#111" stroke-width="1"/><line x1="2045.5" y1="1343.5" x2="2045.5" y2="1351.5" stroke="#111" stroke-width="1.3"/><line x1="2054.1" y1="1345.5" x2="2054.1" y2="1349" stroke="#111" stroke-width="1"/><line x1="2062.8" y1="1345.5" x2="2062.8" y2="1349" stroke="#111" stroke-width="1"/><line x1="2071.5" y1="1345.5" x2="2071.5" y2="1349" stroke="#111" stroke-width="1"/><line x1="2080.1" y1="1345.5" x2="2080.1" y2="1349" stroke="#111" stroke-width="1"/><line x1="2088.8" y1="1343.5" x2="2088.8" y2="1351.5" stroke="#111" stroke-width="1.3"/><line x1="2097.5" y1="1345.5" x2="2097.5" y2="1349" stroke="#111" stroke-width="1"/><line x1="2106.1" y1="1345.5" x2="2106.1" y2="1349" stroke="#111" stroke-width="1"/><rect x="1946.5" y="956" width="153" height="26" fill="#fcfcfc" fill-opacity="0.9" stroke="#e4e4e4"/><line x1="1951" y1="969" x2="1970" y2="969" stroke="#f07f1a" stroke-width="2"/><line x1="2110" y1="945" x2="2110" y2="974" stroke="#1aa3e0" stroke-width="2"/><line x1="2110" y1="976" x2="2110" y2="1005" stroke="#1aa3e0" stroke-width="2"/><path d="M2124 953 L2124 967 M2117 960 L2131 960 M2121.2 955.5 L2124 952.5 L2126.8 955.5 M2121.2 964.5 L2124 967.5 L2126.8 964.5 M2119.5 957.2 L2116.5 960 L2119.5 962.8 M2128.5 957.2 L2131.5 960 L2128.5 962.8" fill="none" stroke="#9a9a9a" stroke-width="1.2"/><line x1="2118" y1="975" x2="2130" y2="975" stroke="#ccc"/><ellipse cx="2119.2" cy="992" rx="2.5" ry="4" fill="none" stroke="#9a9a9a" stroke-width="1.2"/><circle cx="2127.2" cy="989" r="3.5" fill="none" stroke="#9a9a9a" stroke-width="1.2"/><line x1="2126.2" y1="992.5" x2="2125.2" y2="997" stroke="#9a9a9a" stroke-width="1.2"/><line x1="2118" y1="1006" x2="2130" y2="1006" stroke="#ccc"/><path d="M2121.2 1018 L2128.2 1021 L2125.2 1022.5 L2123.7 1026 Z M2117.2 1016 L2119.2 1017 M2118.2 1021 L2120.2 1020 M2122.2 1013 L2122.2 1015" fill="none" stroke="#9a9a9a" stroke-width="1.1"/><line x1="2118" y1="1037" x2="2130" y2="1037" stroke="#ccc"/><path d="M2118.2 1052 A6 6 0 0 1 2129.2 1050 M2129.2 1054 A6 6 0 0 1 2118.2 1056" fill="none" stroke="#9a9a9a" stroke-width="1.2"/></svg>
<div style="left:1913px;top:912.0px;height:15px;line-height:15px;font-size:10.8px;color:#111;font-weight:normal;white-space:pre;">Cyto_FL Int (Avg)</div>
<div style="left:1975.7px;top:962.0px;height:14px;line-height:14px;font-size:10.3px;color:#111;font-weight:normal;white-space:pre;">μ=390.377, σ=144.4805</div>
<div style="left:1175px;width:600px;text-align:right;top:1338.4px;height:14px;line-height:14px;font-size:10.3px;color:#111;font-weight:normal;white-space:pre;">0</div>
<div style="left:1175px;width:600px;text-align:right;top:1290.8px;height:14px;line-height:14px;font-size:10.3px;color:#111;font-weight:normal;white-space:pre;">2</div>
<div style="left:1175px;width:600px;text-align:right;top:1243.2px;height:14px;line-height:14px;font-size:10.3px;color:#111;font-weight:normal;white-space:pre;">4</div>
<div style="left:1175px;width:600px;text-align:right;top:1195.7px;height:14px;line-height:14px;font-size:10.3px;color:#111;font-weight:normal;white-space:pre;">6</div>
<div style="left:1175px;width:600px;text-align:right;top:1148.1px;height:14px;line-height:14px;font-size:10.3px;color:#111;font-weight:normal;white-space:pre;">8</div>
<div style="left:1175px;width:600px;text-align:right;top:1100.5px;height:14px;line-height:14px;font-size:10.3px;color:#111;font-weight:normal;white-space:pre;">10</div>
<div style="left:1175px;width:600px;text-align:right;top:1052.9px;height:14px;line-height:14px;font-size:10.3px;color:#111;font-weight:normal;white-space:pre;">12</div>
<div style="left:1175px;width:600px;text-align:right;top:1005.3px;height:14px;line-height:14px;font-size:10.3px;color:#111;font-weight:normal;white-space:pre;">14</div>
<div style="left:1175px;width:600px;text-align:right;top:957.8px;height:14px;line-height:14px;font-size:10.3px;color:#111;font-weight:normal;white-space:pre;">16</div>
<div style="left:1485.5px;width:600px;text-align:center;top:1354.3px;height:14px;line-height:14px;font-size:10.3px;color:#111;font-weight:normal;white-space:pre;">0</div>
<div style="left:1528.83px;width:600px;text-align:center;top:1354.3px;height:14px;line-height:14px;font-size:10.3px;color:#111;font-weight:normal;white-space:pre;">100</div>
<div style="left:1572.16px;width:600px;text-align:center;top:1354.3px;height:14px;line-height:14px;font-size:10.3px;color:#111;font-weight:normal;white-space:pre;">200</div>
<div style="left:1615.49px;width:600px;text-align:center;top:1354.3px;height:14px;line-height:14px;font-size:10.3px;color:#111;font-weight:normal;white-space:pre;">300</div>
<div style="left:1658.82px;width:600px;text-align:center;top:1354.3px;height:14px;line-height:14px;font-size:10.3px;color:#111;font-weight:normal;white-space:pre;">400</div>
<div style="left:1702.15px;width:600px;text-align:center;top:1354.3px;height:14px;line-height:14px;font-size:10.3px;color:#111;font-weight:normal;white-space:pre;">500</div>
<div style="left:1745.48px;width:600px;text-align:center;top:1354.3px;height:14px;line-height:14px;font-size:10.3px;color:#111;font-weight:normal;white-space:pre;">600</div>
<div style="left:1788.81px;width:600px;text-align:center;top:1354.3px;height:14px;line-height:14px;font-size:10.3px;color:#111;font-weight:normal;white-space:pre;">700</div>
<div style="left:1647.4px;width:600px;text-align:center;top:1372.5px;height:18px;line-height:18px;font-size:12.6px;color:#111;font-weight:normal;white-space:pre;">Cyto_FL Int (Avg) [AU]</div>
<div style="left:1716.6px;top:1137.7px;width:60px;height:16px;line-height:16px;text-align:center;font-size:12.3px;color:#111;transform:rotate(-90deg);">Count</div>
<div style="left:0px;top:1391px;width:2140px;height:1px;background:#a3cda0;"></div>
<div style="left:0px;top:0px;width:1px;height:1392px;background:#8fbf8c;"></div>
<div style="left:2139px;top:0px;width:1px;height:1392px;background:#8fbf8c;"></div></div></body></html>
